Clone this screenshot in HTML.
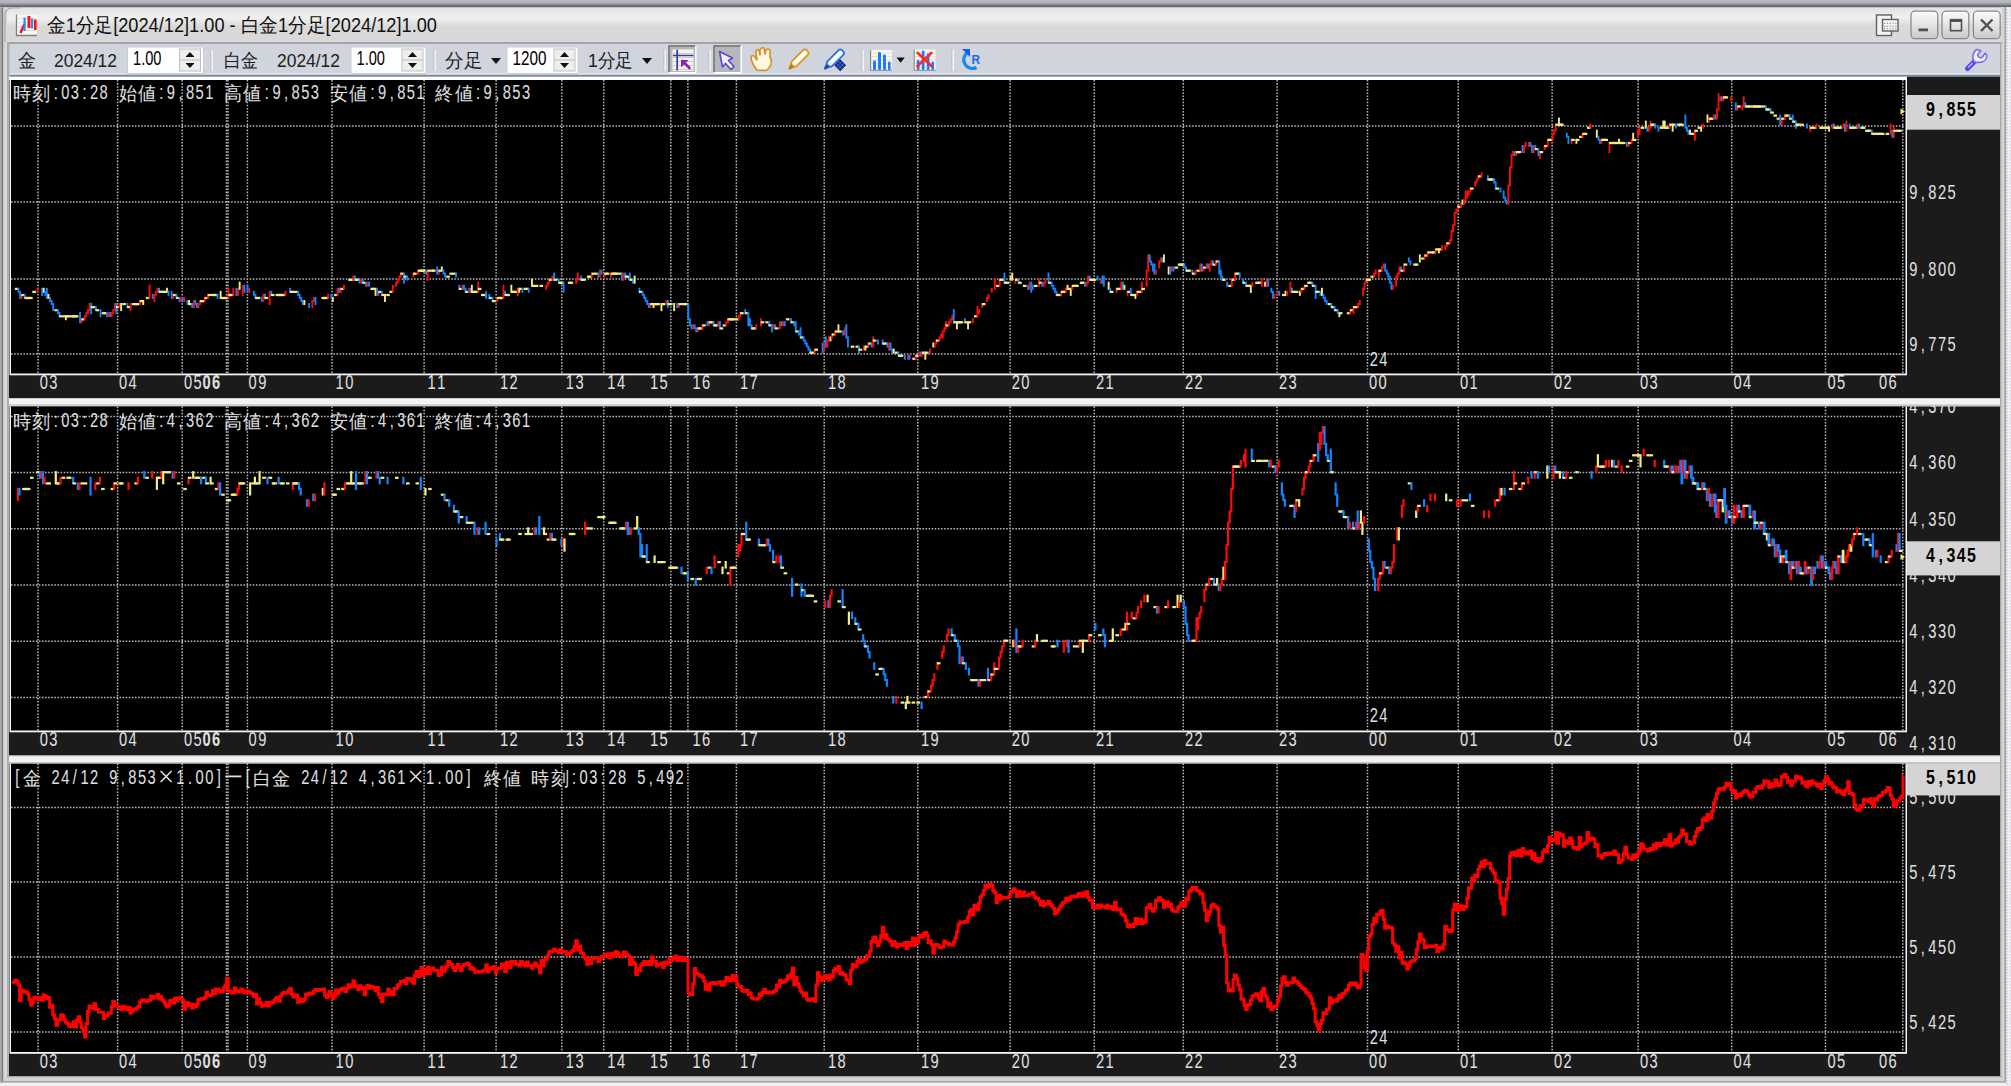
<!DOCTYPE html><html><head><meta charset="utf-8"><style>html,body{margin:0;padding:0;overflow:hidden;background:#d6d6d6}svg{display:block}</style></head><body><svg width="2011" height="1086" viewBox="0 0 2011 1086"><rect x="0" y="0" width="2011" height="1086" fill="#d6d6d6"/><rect x="0" y="0" width="2011" height="2.5" fill="#b4b8c2"/><rect x="0" y="2.5" width="2011" height="2" fill="#9a9ea8"/><rect x="0" y="4.5" width="2011" height="3" fill="#6e6e6e"/><defs><linearGradient id="tg" x1="0" y1="0" x2="0" y2="1"><stop offset="0" stop-color="#e2e2e2"/><stop offset="0.3" stop-color="#f0f0f0"/><stop offset="0.55" stop-color="#d9d9d9"/><stop offset="1" stop-color="#d8d8d8"/></linearGradient><linearGradient id="bg" x1="0" y1="0" x2="0" y2="1"><stop offset="0" stop-color="#fafafa"/><stop offset="0.5" stop-color="#e4e4e4"/><stop offset="1" stop-color="#c8c8c8"/></linearGradient></defs><rect x="0" y="7.5" width="2011" height="34.5" fill="url(#tg)"/><rect x="0" y="7.5" width="1.5" height="1078.5" fill="#a8a8a8"/><rect x="1.5" y="7.5" width="2" height="1076" fill="#7c7c7c"/><rect x="3.5" y="7.5" width="3.5" height="1076" fill="#d8d8d8"/><path d="M5 42 L5 16 Q5 8 13 8 L20 8" fill="none" stroke="#a8a8a8" stroke-width="1.2"/><rect x="7.5" y="42" width="1995" height="2" fill="#a4a4a4"/><rect x="8" y="44" width="1992" height="29" fill="#d0d4dc"/><rect x="8" y="73" width="1992" height="1.8" fill="#e2e6ec"/><rect x="8" y="74.8" width="1992" height="2" fill="#7a889e"/><rect x="7" y="42" width="2.5" height="1035" fill="#b0b0b0"/><rect x="2000" y="42" width="1.5" height="1036" fill="#a8a8a8"/><rect x="2001.5" y="7" width="3" height="1076" fill="#d4d4d4"/><rect x="2004.5" y="7" width="1.5" height="1076" fill="#a0a0a0"/><defs><pattern id="chk" width="5" height="3" patternUnits="userSpaceOnUse"><rect width="5" height="3" fill="#eceef2"/><rect x="0.5" y="0" width="2" height="1.5" fill="#c4c8d0"/></pattern></defs><rect x="2006" y="7" width="5" height="1079" fill="url(#chk)"/><rect x="7" y="1076" width="1994.5" height="1.5" fill="#a8a8a8"/><rect x="3.5" y="1077.5" width="1998" height="3.5" fill="#d4d4d4"/><rect x="1.5" y="1081" width="2004.5" height="1.8" fill="#a8a8a8"/><rect x="0" y="1082.8" width="2006" height="3.2" fill="#f2f2f2"/><g><rect x="16" y="15" width="21" height="21" fill="#f8f8f8"/><path d="M18 18.5 H36 M18 22.5 H36 M18 26.5 H36 M18 30.5 H36" stroke="#d8d8d8" stroke-width="0.8"/><path d="M16.5 14.5 V35.5 H37" fill="none" stroke="#808080" stroke-width="1.3"/><path d="M20.5 33 L24.5 24" stroke="#ff1010" stroke-width="2.6"/><rect x="23.5" y="17.5" width="2.2" height="13.5" fill="#2090ff"/><rect x="27.5" y="16" width="3" height="12" fill="#ff1010"/><rect x="31" y="18.5" width="2.2" height="10" fill="#2090ff"/><rect x="34" y="19.5" width="2.6" height="10.5" fill="#ff1010"/></g><text x="47" y="31.5" font-family="'Liberation Sans', sans-serif" font-size="19.5" fill="#101010" textLength="390" lengthAdjust="spacingAndGlyphs">金1分足[2024/12]1.00 - 白金1分足[2024/12]1.00</text><g fill="none" stroke="#606060" stroke-width="1.4"><rect x="1876.5" y="15" width="15" height="20.5" fill="#f4f4f4"/><rect x="1882.5" y="19.5" width="15.5" height="11.5" fill="#f4f4f4"/><path d="M1884 23.3 H1897 M1884 26.2 H1897 M1884 28.8 H1897" stroke="#808080" stroke-width="1" stroke-dasharray="1.2 1.6"/></g><rect x="1911" y="11.2" width="26.8" height="27.5" rx="4" fill="url(#bg)" stroke="#8a8a8a" stroke-width="1.3"/><rect x="1942" y="11.2" width="26.8" height="27.5" rx="4" fill="url(#bg)" stroke="#8a8a8a" stroke-width="1.3"/><rect x="1973.4" y="11.2" width="26.8" height="27.5" rx="4" fill="url(#bg)" stroke="#8a8a8a" stroke-width="1.3"/><rect x="1918.5" y="28.5" width="9.5" height="2.8" fill="#505050"/><rect x="1950.5" y="19.7" width="11" height="11" fill="none" stroke="#505050" stroke-width="1.6"/><rect x="1950" y="19" width="12" height="3" fill="#505050"/><path d="M1981 19.5 L1992.5 31 M1992.5 19.5 L1981 31" stroke="#505050" stroke-width="2.4"/><text x="18" y="67.2" font-family="'Liberation Sans', sans-serif" font-size="19" fill="#202020" textLength="18" lengthAdjust="spacingAndGlyphs">金</text><text x="54" y="67.2" font-family="'Liberation Sans', sans-serif" font-size="19" fill="#202020" textLength="63" lengthAdjust="spacingAndGlyphs">2024/12</text><text x="224" y="67.2" font-family="'Liberation Sans', sans-serif" font-size="19" fill="#202020" textLength="34" lengthAdjust="spacingAndGlyphs">白金</text><text x="277" y="67.2" font-family="'Liberation Sans', sans-serif" font-size="19" fill="#202020" textLength="63" lengthAdjust="spacingAndGlyphs">2024/12</text><rect x="127.5" y="47" width="76.0" height="26.5" fill="#ffffff" stroke="#c8ccd4" stroke-width="1"/><text transform="translate(133.0,64.5) scale(0.76,1)" x="0" y="0" font-family="'Liberation Sans', sans-serif" font-size="20.5" fill="#000" textLength="37.5" lengthAdjust="spacingAndGlyphs">1.00</text><rect x="179.5" y="49" width="21" height="22" fill="#eeeeee" stroke="#c0c0c0" stroke-width="1"/><line x1="179.5" y1="60" x2="200.5" y2="60" stroke="#c0c0c0" stroke-width="1"/><path d="M185.5 57 L190.0 52 L194.5 57 Z" fill="#101010"/><path d="M185.5 63 L190.0 68 L194.5 63 Z" fill="#101010"/><rect x="351" y="47" width="75" height="26.5" fill="#ffffff" stroke="#c8ccd4" stroke-width="1"/><text transform="translate(356.5,64.5) scale(0.76,1)" x="0" y="0" font-family="'Liberation Sans', sans-serif" font-size="20.5" fill="#000" textLength="37.5" lengthAdjust="spacingAndGlyphs">1.00</text><rect x="402" y="49" width="21" height="22" fill="#eeeeee" stroke="#c0c0c0" stroke-width="1"/><line x1="402" y1="60" x2="423" y2="60" stroke="#c0c0c0" stroke-width="1"/><path d="M408 57 L412.5 52 L417 57 Z" fill="#101010"/><path d="M408 63 L412.5 68 L417 63 Z" fill="#101010"/><rect x="507" y="47" width="71" height="26.5" fill="#ffffff" stroke="#c8ccd4" stroke-width="1"/><text transform="translate(512.5,64.5) scale(0.76,1)" x="0" y="0" font-family="'Liberation Sans', sans-serif" font-size="20.5" fill="#000" textLength="44.7" lengthAdjust="spacingAndGlyphs">1200</text><rect x="554" y="49" width="21" height="22" fill="#eeeeee" stroke="#c0c0c0" stroke-width="1"/><line x1="554" y1="60" x2="575" y2="60" stroke="#c0c0c0" stroke-width="1"/><path d="M560 57 L564.5 52 L569 57 Z" fill="#101010"/><path d="M560 63 L564.5 68 L569 63 Z" fill="#101010"/><rect x="210.5" y="50" width="1" height="21" fill="#b8bcc4"/><rect x="211.5" y="50" width="1.4" height="21" fill="#f6f7f9"/><rect x="433.5" y="50" width="1" height="21" fill="#b8bcc4"/><rect x="434.5" y="50" width="1.4" height="21" fill="#f6f7f9"/><rect x="663.5" y="50" width="1" height="21" fill="#b8bcc4"/><rect x="664.5" y="50" width="1.4" height="21" fill="#f6f7f9"/><rect x="708.5" y="50" width="1" height="21" fill="#b8bcc4"/><rect x="709.5" y="50" width="1.4" height="21" fill="#f6f7f9"/><rect x="861.5" y="50" width="1" height="21" fill="#b8bcc4"/><rect x="862.5" y="50" width="1.4" height="21" fill="#f6f7f9"/><rect x="951.5" y="50" width="1" height="21" fill="#b8bcc4"/><rect x="952.5" y="50" width="1.4" height="21" fill="#f6f7f9"/><text x="445" y="67.2" font-family="'Liberation Sans', sans-serif" font-size="19" fill="#202020" textLength="37" lengthAdjust="spacingAndGlyphs">分足</text><path d="M491 58 L501 58 L496 64 Z" fill="#101010"/><text x="588" y="67.2" font-family="'Liberation Sans', sans-serif" font-size="19" fill="#202020" textLength="45" lengthAdjust="spacingAndGlyphs">1分足</text><path d="M642 58 L652 58 L647 64 Z" fill="#101010"/><rect x="669" y="46" width="26" height="26" fill="#b4b8bc"/><path d="M669 72 V46 H695" fill="none" stroke="#6c6c6c" stroke-width="1.4"/><path d="M695.8 46 V72.8 H669" fill="none" stroke="#ffffff" stroke-width="1.4"/><rect x="714" y="46" width="26.5" height="26" fill="#b4b8bc"/><path d="M714 72 V46 H740.5" fill="none" stroke="#6c6c6c" stroke-width="1.4"/><path d="M741.3 46 V72.8 H714" fill="none" stroke="#ffffff" stroke-width="1.4"/><rect x="672.5" y="49.5" width="21" height="21.5" fill="#f4f4ee"/><path d="M673 53.5 H693 M673 57.5 H693 M673 61.5 H693 M673 65.5 H693 M673 69.5 H693" stroke="#c8c8c0" stroke-width="0.9"/><path d="M677.2 49.8 V70.5 M673 55.5 H693.5" stroke="#3a38a8" stroke-width="1.7"/><path d="M689.5 68 L682.5 61" stroke="#9020b0" stroke-width="2.6" stroke-linecap="round"/><path d="M681 60 H688.5 L681 67.5 Z" fill="#9020b0"/><path d="M719.5 51.5 L722.5 67 L725.5 63.5 L731 69.5 L734 66.5 L728.5 60.5 L732.5 58 Z" fill="#f0ecff" stroke="#6048c8" stroke-width="1.6" stroke-linejoin="round"/><path d="M757 70 Q752 64 751 58 Q751 55 754 56 L757 60 L756 52 Q756 49 759 50 L760 55 L760 50 Q761 47 764 48 L765 54 L766 50 Q768 48 770 50 L770 57 Q772 60 771 64 Q769 69 766 70.5 Z" fill="#fff6e4" stroke="#d88c20" stroke-width="1.6" stroke-linejoin="round"/><g transform="translate(799.5,58.5) rotate(-45)"><rect x="-10" y="-3.4" width="21" height="6.8" rx="3.2" fill="#fff4e0" stroke="#e0941e" stroke-width="1.7"/><rect x="-6" y="-1.6" width="14" height="2.6" rx="1.2" fill="#ffffff"/><path d="M-10 -2.6 L-15 -0.8 L-15 0.8 L-10 2.6 Z" fill="#c07818"/></g><g transform="translate(835,58.5) rotate(-45)"><rect x="-10" y="-3.4" width="21" height="6.8" rx="3.2" fill="#e4efff" stroke="#2a6ee0" stroke-width="1.7"/><rect x="-6" y="-1.6" width="14" height="2.6" rx="1.2" fill="#ffffff"/><path d="M-10 -2.6 L-15 -0.8 L-15 0.8 L-10 2.6 Z" fill="#1850b0"/></g><g transform="translate(840.2,65.2) rotate(45)"><rect x="-4.2" y="-4.2" width="8.4" height="8.4" fill="#102c80"/><path d="M-4 -1.4 H4 M-4 1.4 H4 M-1.4 -4 V4 M1.4 -4 V4" stroke="#5070c0" stroke-width="0.8"/></g><g><rect x="870.5" y="50" width="21.5" height="20" fill="#f8f6f0"/><path d="M871 53 H892 M871 56.5 H892 M871 60 H892 M871 63.5 H892 M871 67 H892" stroke="#e4dccc" stroke-width="0.9"/><path d="M870.6 50 V70.3 H892" fill="none" stroke="#808890" stroke-width="1.1"/><rect x="873" y="60.5" width="3" height="9.5" rx="1.2" fill="#1a7cff"/><rect x="878" y="52" width="3" height="18" rx="1.2" fill="#1a7cff"/><rect x="883" y="54.5" width="3" height="15.5" rx="1.2" fill="#1a7cff"/><rect x="888" y="61.5" width="2.6" height="8.5" rx="1.2" fill="#1a7cff"/></g><path d="M896.5 57.5 L904.8 57.5 L900.6 62.8 Z" fill="#101010"/><g><rect x="914" y="49.5" width="21.5" height="20.7" fill="#f8f6f0"/><path d="M914.5 53 H935.5 M914.5 56.5 H935.5 M914.5 60 H935.5 M914.5 63.5 H935.5 M914.5 67 H935.5" stroke="#e4dccc" stroke-width="0.9"/><path d="M914.2 49.4 V70.2 H935.5" fill="none" stroke="#808890" stroke-width="1.1"/><rect x="916.8" y="60" width="2.7" height="10" rx="1.1" fill="#1a7cff"/><rect x="921.8" y="50.5" width="2.7" height="19.5" rx="1.1" fill="#1a7cff"/><rect x="926.8" y="53.5" width="2.7" height="16.5" rx="1.1" fill="#1a7cff"/><rect x="931.5" y="61.4" width="2.5" height="8.6" rx="1.1" fill="#1a7cff"/><path d="M917.5 52.8 L931.5 66 M931.5 52.8 L917.5 66" stroke="#ff2828" stroke-width="2.6" stroke-linecap="round"/></g><path d="M968.5 52 A8.3 8.3 0 1 0 976.5 67.5" fill="none" stroke="#1a8ae8" stroke-width="3.2"/><path d="M962 49 L970 49 L970 57 Z" fill="#1060f0"/><text x="971.5" y="64.2" font-family="'Liberation Sans', sans-serif" font-weight="bold" font-size="13.5" fill="#1470d8" textLength="8.5" lengthAdjust="spacingAndGlyphs">R</text><path d="M1967.5 68.5 L1974.5 61.5" stroke="#5048f0" stroke-width="5" stroke-linecap="round"/><path d="M1968 67.6 L1972.5 63.1" stroke="#b0a8ff" stroke-width="1.5"/><path d="M1973.8 61 C1972 58 1972.5 52 1976.5 49.5 L1980.8 50.8 L1978.6 53.2 A2.6 2.6 0 0 0 1982.6 56.8 L1985.2 53.2 L1986.8 55 C1987 58.5 1985 62 1980 62.4 L1975.8 62.4 Z" fill="#f0ecff" stroke="#7a70dc" stroke-width="1.6" stroke-linejoin="round"/><rect x="9" y="80" width="1991" height="318" fill="#1b1b1b"/><rect x="9.5" y="80" width="1897.5" height="295.3" fill="#f4f4f4"/><rect x="11" y="80" width="1894.5" height="293.5" fill="#000"/><path d="M11 126 H1905 M11 202 H1905 M11 279 H1905 M11 354 H1905 M38 80 V373.5 M117.6 80 V373.5 M182.2 80 V373.5 M226.5 80 V373.5 M247.4 80 V373.5 M332 80 V373.5 M424.1 80 V373.5 M496.1 80 V373.5 M561.8 80 V373.5 M603.7 80 V373.5 M670.8 80 V373.5 M687.9 80 V373.5 M736.4 80 V373.5 M824.2 80 V373.5 M917.8 80 V373.5 M1010.1 80 V373.5 M1094.3 80 V373.5 M1183.3 80 V373.5 M1277.1 80 V373.5 M1367.5 80 V373.5 M1458.3 80 V373.5 M1552.1 80 V373.5 M1638.1 80 V373.5 M1731.7 80 V373.5 M1825.5 80 V373.5 M1902.8 80 V373.5" stroke="#bababa" stroke-width="1.5" stroke-dasharray="1.55 1.55" fill="none"/><path d="M228 80 V373.5" stroke="#bababa" stroke-width="1.5" stroke-dasharray="1.55 1.55" fill="none"/><text transform="translate(1908.5,198.8) scale(0.7,1)" x="1.0 17.6 28.4 42.1 55.8" y="0" font-family="'Liberation Sans', sans-serif" font-size="21" fill="#e0e0e0" >9,825</text><text transform="translate(1908.5,275.8) scale(0.7,1)" x="1.0 17.6 28.4 42.1 55.8" y="0" font-family="'Liberation Sans', sans-serif" font-size="21" fill="#e0e0e0" >9,800</text><text transform="translate(1908.5,350.8) scale(0.7,1)" x="1.0 17.6 28.4 42.1 55.8" y="0" font-family="'Liberation Sans', sans-serif" font-size="21" fill="#e0e0e0" >9,775</text><text transform="translate(39.0,389.0) scale(0.7,1)" x="1.0 14.7" y="0" font-family="'Liberation Sans', sans-serif" font-size="21" fill="#e0e0e0" >03</text><text transform="translate(118.3,389.0) scale(0.7,1)" x="1.0 14.7" y="0" font-family="'Liberation Sans', sans-serif" font-size="21" fill="#e0e0e0" >04</text><text transform="translate(183.3,389.0) scale(0.7,1)" x="1.0 14.7" y="0" font-family="'Liberation Sans', sans-serif" font-size="21" fill="#e0e0e0" >05</text><text transform="translate(201.8,389.0) scale(0.7,1)" x="1.0 14.7" y="0" font-family="'Liberation Sans', sans-serif" font-size="21" font-weight="bold" fill="#e0e0e0" >06</text><text transform="translate(247.9,389.0) scale(0.7,1)" x="1.0 14.7" y="0" font-family="'Liberation Sans', sans-serif" font-size="21" fill="#e0e0e0" >09</text><text transform="translate(334.90000000000003,389.0) scale(0.7,1)" x="1.0 14.7" y="0" font-family="'Liberation Sans', sans-serif" font-size="21" fill="#e0e0e0" >10</text><text transform="translate(426.90000000000003,389.0) scale(0.7,1)" x="1.0 14.7" y="0" font-family="'Liberation Sans', sans-serif" font-size="21" fill="#e0e0e0" >11</text><text transform="translate(499.3,389.0) scale(0.7,1)" x="1.0 14.7" y="0" font-family="'Liberation Sans', sans-serif" font-size="21" fill="#e0e0e0" >12</text><text transform="translate(565.0999999999999,389.0) scale(0.7,1)" x="1.0 14.7" y="0" font-family="'Liberation Sans', sans-serif" font-size="21" fill="#e0e0e0" >13</text><text transform="translate(606.5999999999999,389.0) scale(0.7,1)" x="1.0 14.7" y="0" font-family="'Liberation Sans', sans-serif" font-size="21" fill="#e0e0e0" >14</text><text transform="translate(649.3,389.0) scale(0.7,1)" x="1.0 14.7" y="0" font-family="'Liberation Sans', sans-serif" font-size="21" fill="#e0e0e0" >15</text><text transform="translate(691.6999999999999,389.0) scale(0.7,1)" x="1.0 14.7" y="0" font-family="'Liberation Sans', sans-serif" font-size="21" fill="#e0e0e0" >16</text><text transform="translate(739.3,389.0) scale(0.7,1)" x="1.0 14.7" y="0" font-family="'Liberation Sans', sans-serif" font-size="21" fill="#e0e0e0" >17</text><text transform="translate(827.3,389.0) scale(0.7,1)" x="1.0 14.7" y="0" font-family="'Liberation Sans', sans-serif" font-size="21" fill="#e0e0e0" >18</text><text transform="translate(920.3,389.0) scale(0.7,1)" x="1.0 14.7" y="0" font-family="'Liberation Sans', sans-serif" font-size="21" fill="#e0e0e0" >19</text><text transform="translate(1011.0,389.0) scale(0.7,1)" x="1.0 14.7" y="0" font-family="'Liberation Sans', sans-serif" font-size="21" fill="#e0e0e0" >20</text><text transform="translate(1095.3,389.0) scale(0.7,1)" x="1.0 14.7" y="0" font-family="'Liberation Sans', sans-serif" font-size="21" fill="#e0e0e0" >21</text><text transform="translate(1184.3,389.0) scale(0.7,1)" x="1.0 14.7" y="0" font-family="'Liberation Sans', sans-serif" font-size="21" fill="#e0e0e0" >22</text><text transform="translate(1278.3,389.0) scale(0.7,1)" x="1.0 14.7" y="0" font-family="'Liberation Sans', sans-serif" font-size="21" fill="#e0e0e0" >23</text><text transform="translate(1368.3,389.0) scale(0.7,1)" x="1.0 14.7" y="0" font-family="'Liberation Sans', sans-serif" font-size="21" fill="#e0e0e0" >00</text><text transform="translate(1459.3,389.0) scale(0.7,1)" x="1.0 14.7" y="0" font-family="'Liberation Sans', sans-serif" font-size="21" fill="#e0e0e0" >01</text><text transform="translate(1553.3,389.0) scale(0.7,1)" x="1.0 14.7" y="0" font-family="'Liberation Sans', sans-serif" font-size="21" fill="#e0e0e0" >02</text><text transform="translate(1639.3,389.0) scale(0.7,1)" x="1.0 14.7" y="0" font-family="'Liberation Sans', sans-serif" font-size="21" fill="#e0e0e0" >03</text><text transform="translate(1732.8,389.0) scale(0.7,1)" x="1.0 14.7" y="0" font-family="'Liberation Sans', sans-serif" font-size="21" fill="#e0e0e0" >04</text><text transform="translate(1826.8,389.0) scale(0.7,1)" x="1.0 14.7" y="0" font-family="'Liberation Sans', sans-serif" font-size="21" fill="#e0e0e0" >05</text><text transform="translate(1878.3,389.0) scale(0.7,1)" x="1.0 14.7" y="0" font-family="'Liberation Sans', sans-serif" font-size="21" fill="#e0e0e0" >06</text><rect x="9" y="406.5" width="1991" height="349.0" fill="#1b1b1b"/><rect x="9.5" y="406.5" width="1897.5" height="325.8" fill="#f4f4f4"/><rect x="11" y="406.5" width="1894.5" height="324.0" fill="#000"/><path d="M11 416.5 H1905 M11 472.6 H1905 M11 528.8 H1905 M11 585 H1905 M11 641.3 H1905 M11 697.5 H1905 M38 406.5 V730.5 M117.6 406.5 V730.5 M182.2 406.5 V730.5 M226.5 406.5 V730.5 M247.4 406.5 V730.5 M332 406.5 V730.5 M424.1 406.5 V730.5 M496.1 406.5 V730.5 M561.8 406.5 V730.5 M603.7 406.5 V730.5 M670.8 406.5 V730.5 M687.9 406.5 V730.5 M736.4 406.5 V730.5 M824.2 406.5 V730.5 M917.8 406.5 V730.5 M1010.1 406.5 V730.5 M1094.3 406.5 V730.5 M1183.3 406.5 V730.5 M1277.1 406.5 V730.5 M1367.5 406.5 V730.5 M1458.3 406.5 V730.5 M1552.1 406.5 V730.5 M1638.1 406.5 V730.5 M1731.7 406.5 V730.5 M1825.5 406.5 V730.5 M1902.8 406.5 V730.5" stroke="#bababa" stroke-width="1.5" stroke-dasharray="1.55 1.55" fill="none"/><path d="M228 406.5 V730.5" stroke="#bababa" stroke-width="1.5" stroke-dasharray="1.55 1.55" fill="none"/><text transform="translate(1908.5,413.3) scale(0.7,1)" x="1.0 17.6 28.4 42.1 55.8" y="0" font-family="'Liberation Sans', sans-serif" font-size="21" fill="#e0e0e0" >4,370</text><text transform="translate(1908.5,469.4) scale(0.7,1)" x="1.0 17.6 28.4 42.1 55.8" y="0" font-family="'Liberation Sans', sans-serif" font-size="21" fill="#e0e0e0" >4,360</text><text transform="translate(1908.5,525.6) scale(0.7,1)" x="1.0 17.6 28.4 42.1 55.8" y="0" font-family="'Liberation Sans', sans-serif" font-size="21" fill="#e0e0e0" >4,350</text><text transform="translate(1908.5,581.8) scale(0.7,1)" x="1.0 17.6 28.4 42.1 55.8" y="0" font-family="'Liberation Sans', sans-serif" font-size="21" fill="#e0e0e0" >4,340</text><text transform="translate(1908.5,638.1) scale(0.7,1)" x="1.0 17.6 28.4 42.1 55.8" y="0" font-family="'Liberation Sans', sans-serif" font-size="21" fill="#e0e0e0" >4,330</text><text transform="translate(1908.5,694.3) scale(0.7,1)" x="1.0 17.6 28.4 42.1 55.8" y="0" font-family="'Liberation Sans', sans-serif" font-size="21" fill="#e0e0e0" >4,320</text><text transform="translate(1908.5,750.4) scale(0.7,1)" x="1.0 17.6 28.4 42.1 55.8" y="0" font-family="'Liberation Sans', sans-serif" font-size="21" fill="#e0e0e0" >4,310</text><text transform="translate(39.0,746.0) scale(0.7,1)" x="1.0 14.7" y="0" font-family="'Liberation Sans', sans-serif" font-size="21" fill="#e0e0e0" >03</text><text transform="translate(118.3,746.0) scale(0.7,1)" x="1.0 14.7" y="0" font-family="'Liberation Sans', sans-serif" font-size="21" fill="#e0e0e0" >04</text><text transform="translate(183.3,746.0) scale(0.7,1)" x="1.0 14.7" y="0" font-family="'Liberation Sans', sans-serif" font-size="21" fill="#e0e0e0" >05</text><text transform="translate(201.8,746.0) scale(0.7,1)" x="1.0 14.7" y="0" font-family="'Liberation Sans', sans-serif" font-size="21" font-weight="bold" fill="#e0e0e0" >06</text><text transform="translate(247.9,746.0) scale(0.7,1)" x="1.0 14.7" y="0" font-family="'Liberation Sans', sans-serif" font-size="21" fill="#e0e0e0" >09</text><text transform="translate(334.90000000000003,746.0) scale(0.7,1)" x="1.0 14.7" y="0" font-family="'Liberation Sans', sans-serif" font-size="21" fill="#e0e0e0" >10</text><text transform="translate(426.90000000000003,746.0) scale(0.7,1)" x="1.0 14.7" y="0" font-family="'Liberation Sans', sans-serif" font-size="21" fill="#e0e0e0" >11</text><text transform="translate(499.3,746.0) scale(0.7,1)" x="1.0 14.7" y="0" font-family="'Liberation Sans', sans-serif" font-size="21" fill="#e0e0e0" >12</text><text transform="translate(565.0999999999999,746.0) scale(0.7,1)" x="1.0 14.7" y="0" font-family="'Liberation Sans', sans-serif" font-size="21" fill="#e0e0e0" >13</text><text transform="translate(606.5999999999999,746.0) scale(0.7,1)" x="1.0 14.7" y="0" font-family="'Liberation Sans', sans-serif" font-size="21" fill="#e0e0e0" >14</text><text transform="translate(649.3,746.0) scale(0.7,1)" x="1.0 14.7" y="0" font-family="'Liberation Sans', sans-serif" font-size="21" fill="#e0e0e0" >15</text><text transform="translate(691.6999999999999,746.0) scale(0.7,1)" x="1.0 14.7" y="0" font-family="'Liberation Sans', sans-serif" font-size="21" fill="#e0e0e0" >16</text><text transform="translate(739.3,746.0) scale(0.7,1)" x="1.0 14.7" y="0" font-family="'Liberation Sans', sans-serif" font-size="21" fill="#e0e0e0" >17</text><text transform="translate(827.3,746.0) scale(0.7,1)" x="1.0 14.7" y="0" font-family="'Liberation Sans', sans-serif" font-size="21" fill="#e0e0e0" >18</text><text transform="translate(920.3,746.0) scale(0.7,1)" x="1.0 14.7" y="0" font-family="'Liberation Sans', sans-serif" font-size="21" fill="#e0e0e0" >19</text><text transform="translate(1011.0,746.0) scale(0.7,1)" x="1.0 14.7" y="0" font-family="'Liberation Sans', sans-serif" font-size="21" fill="#e0e0e0" >20</text><text transform="translate(1095.3,746.0) scale(0.7,1)" x="1.0 14.7" y="0" font-family="'Liberation Sans', sans-serif" font-size="21" fill="#e0e0e0" >21</text><text transform="translate(1184.3,746.0) scale(0.7,1)" x="1.0 14.7" y="0" font-family="'Liberation Sans', sans-serif" font-size="21" fill="#e0e0e0" >22</text><text transform="translate(1278.3,746.0) scale(0.7,1)" x="1.0 14.7" y="0" font-family="'Liberation Sans', sans-serif" font-size="21" fill="#e0e0e0" >23</text><text transform="translate(1368.3,746.0) scale(0.7,1)" x="1.0 14.7" y="0" font-family="'Liberation Sans', sans-serif" font-size="21" fill="#e0e0e0" >00</text><text transform="translate(1459.3,746.0) scale(0.7,1)" x="1.0 14.7" y="0" font-family="'Liberation Sans', sans-serif" font-size="21" fill="#e0e0e0" >01</text><text transform="translate(1553.3,746.0) scale(0.7,1)" x="1.0 14.7" y="0" font-family="'Liberation Sans', sans-serif" font-size="21" fill="#e0e0e0" >02</text><text transform="translate(1639.3,746.0) scale(0.7,1)" x="1.0 14.7" y="0" font-family="'Liberation Sans', sans-serif" font-size="21" fill="#e0e0e0" >03</text><text transform="translate(1732.8,746.0) scale(0.7,1)" x="1.0 14.7" y="0" font-family="'Liberation Sans', sans-serif" font-size="21" fill="#e0e0e0" >04</text><text transform="translate(1826.8,746.0) scale(0.7,1)" x="1.0 14.7" y="0" font-family="'Liberation Sans', sans-serif" font-size="21" fill="#e0e0e0" >05</text><text transform="translate(1878.3,746.0) scale(0.7,1)" x="1.0 14.7" y="0" font-family="'Liberation Sans', sans-serif" font-size="21" fill="#e0e0e0" >06</text><rect x="9" y="763.5" width="1991" height="312.5" fill="#1b1b1b"/><rect x="9.5" y="763.5" width="1897.5" height="290.3" fill="#f4f4f4"/><rect x="11" y="763.5" width="1894.5" height="288.5" fill="#000"/><path d="M11 807.5 H1905 M11 882 H1905 M11 957 H1905 M11 1032 H1905 M38 763.5 V1052 M117.6 763.5 V1052 M182.2 763.5 V1052 M226.5 763.5 V1052 M247.4 763.5 V1052 M332 763.5 V1052 M424.1 763.5 V1052 M496.1 763.5 V1052 M561.8 763.5 V1052 M603.7 763.5 V1052 M670.8 763.5 V1052 M687.9 763.5 V1052 M736.4 763.5 V1052 M824.2 763.5 V1052 M917.8 763.5 V1052 M1010.1 763.5 V1052 M1094.3 763.5 V1052 M1183.3 763.5 V1052 M1277.1 763.5 V1052 M1367.5 763.5 V1052 M1458.3 763.5 V1052 M1552.1 763.5 V1052 M1638.1 763.5 V1052 M1731.7 763.5 V1052 M1825.5 763.5 V1052 M1902.8 763.5 V1052" stroke="#bababa" stroke-width="1.5" stroke-dasharray="1.55 1.55" fill="none"/><path d="M228 763.5 V1052" stroke="#bababa" stroke-width="1.5" stroke-dasharray="1.55 1.55" fill="none"/><text transform="translate(1908.5,804.3) scale(0.7,1)" x="1.0 17.6 28.4 42.1 55.8" y="0" font-family="'Liberation Sans', sans-serif" font-size="21" fill="#e0e0e0" >5,500</text><text transform="translate(1908.5,878.8) scale(0.7,1)" x="1.0 17.6 28.4 42.1 55.8" y="0" font-family="'Liberation Sans', sans-serif" font-size="21" fill="#e0e0e0" >5,475</text><text transform="translate(1908.5,953.8) scale(0.7,1)" x="1.0 17.6 28.4 42.1 55.8" y="0" font-family="'Liberation Sans', sans-serif" font-size="21" fill="#e0e0e0" >5,450</text><text transform="translate(1908.5,1028.8) scale(0.7,1)" x="1.0 17.6 28.4 42.1 55.8" y="0" font-family="'Liberation Sans', sans-serif" font-size="21" fill="#e0e0e0" >5,425</text><text transform="translate(39.0,1067.5) scale(0.7,1)" x="1.0 14.7" y="0" font-family="'Liberation Sans', sans-serif" font-size="21" fill="#e0e0e0" >03</text><text transform="translate(118.3,1067.5) scale(0.7,1)" x="1.0 14.7" y="0" font-family="'Liberation Sans', sans-serif" font-size="21" fill="#e0e0e0" >04</text><text transform="translate(183.3,1067.5) scale(0.7,1)" x="1.0 14.7" y="0" font-family="'Liberation Sans', sans-serif" font-size="21" fill="#e0e0e0" >05</text><text transform="translate(201.8,1067.5) scale(0.7,1)" x="1.0 14.7" y="0" font-family="'Liberation Sans', sans-serif" font-size="21" font-weight="bold" fill="#e0e0e0" >06</text><text transform="translate(247.9,1067.5) scale(0.7,1)" x="1.0 14.7" y="0" font-family="'Liberation Sans', sans-serif" font-size="21" fill="#e0e0e0" >09</text><text transform="translate(334.90000000000003,1067.5) scale(0.7,1)" x="1.0 14.7" y="0" font-family="'Liberation Sans', sans-serif" font-size="21" fill="#e0e0e0" >10</text><text transform="translate(426.90000000000003,1067.5) scale(0.7,1)" x="1.0 14.7" y="0" font-family="'Liberation Sans', sans-serif" font-size="21" fill="#e0e0e0" >11</text><text transform="translate(499.3,1067.5) scale(0.7,1)" x="1.0 14.7" y="0" font-family="'Liberation Sans', sans-serif" font-size="21" fill="#e0e0e0" >12</text><text transform="translate(565.0999999999999,1067.5) scale(0.7,1)" x="1.0 14.7" y="0" font-family="'Liberation Sans', sans-serif" font-size="21" fill="#e0e0e0" >13</text><text transform="translate(606.5999999999999,1067.5) scale(0.7,1)" x="1.0 14.7" y="0" font-family="'Liberation Sans', sans-serif" font-size="21" fill="#e0e0e0" >14</text><text transform="translate(649.3,1067.5) scale(0.7,1)" x="1.0 14.7" y="0" font-family="'Liberation Sans', sans-serif" font-size="21" fill="#e0e0e0" >15</text><text transform="translate(691.6999999999999,1067.5) scale(0.7,1)" x="1.0 14.7" y="0" font-family="'Liberation Sans', sans-serif" font-size="21" fill="#e0e0e0" >16</text><text transform="translate(739.3,1067.5) scale(0.7,1)" x="1.0 14.7" y="0" font-family="'Liberation Sans', sans-serif" font-size="21" fill="#e0e0e0" >17</text><text transform="translate(827.3,1067.5) scale(0.7,1)" x="1.0 14.7" y="0" font-family="'Liberation Sans', sans-serif" font-size="21" fill="#e0e0e0" >18</text><text transform="translate(920.3,1067.5) scale(0.7,1)" x="1.0 14.7" y="0" font-family="'Liberation Sans', sans-serif" font-size="21" fill="#e0e0e0" >19</text><text transform="translate(1011.0,1067.5) scale(0.7,1)" x="1.0 14.7" y="0" font-family="'Liberation Sans', sans-serif" font-size="21" fill="#e0e0e0" >20</text><text transform="translate(1095.3,1067.5) scale(0.7,1)" x="1.0 14.7" y="0" font-family="'Liberation Sans', sans-serif" font-size="21" fill="#e0e0e0" >21</text><text transform="translate(1184.3,1067.5) scale(0.7,1)" x="1.0 14.7" y="0" font-family="'Liberation Sans', sans-serif" font-size="21" fill="#e0e0e0" >22</text><text transform="translate(1278.3,1067.5) scale(0.7,1)" x="1.0 14.7" y="0" font-family="'Liberation Sans', sans-serif" font-size="21" fill="#e0e0e0" >23</text><text transform="translate(1368.3,1067.5) scale(0.7,1)" x="1.0 14.7" y="0" font-family="'Liberation Sans', sans-serif" font-size="21" fill="#e0e0e0" >00</text><text transform="translate(1459.3,1067.5) scale(0.7,1)" x="1.0 14.7" y="0" font-family="'Liberation Sans', sans-serif" font-size="21" fill="#e0e0e0" >01</text><text transform="translate(1553.3,1067.5) scale(0.7,1)" x="1.0 14.7" y="0" font-family="'Liberation Sans', sans-serif" font-size="21" fill="#e0e0e0" >02</text><text transform="translate(1639.3,1067.5) scale(0.7,1)" x="1.0 14.7" y="0" font-family="'Liberation Sans', sans-serif" font-size="21" fill="#e0e0e0" >03</text><text transform="translate(1732.8,1067.5) scale(0.7,1)" x="1.0 14.7" y="0" font-family="'Liberation Sans', sans-serif" font-size="21" fill="#e0e0e0" >04</text><text transform="translate(1826.8,1067.5) scale(0.7,1)" x="1.0 14.7" y="0" font-family="'Liberation Sans', sans-serif" font-size="21" fill="#e0e0e0" >05</text><text transform="translate(1878.3,1067.5) scale(0.7,1)" x="1.0 14.7" y="0" font-family="'Liberation Sans', sans-serif" font-size="21" fill="#e0e0e0" >06</text><rect x="9" y="76.8" width="1898" height="3.2" fill="#ffffff"/><rect x="1907" y="76.8" width="93" height="3.2" fill="#1b1b1b"/><rect x="9" y="398" width="1991" height="1" fill="#d0d0d0"/><rect x="9" y="399" width="1991" height="5.5" fill="#f2f2f2"/><rect x="9" y="404.5" width="1991" height="1.5" fill="#c8c8c8"/><rect x="9" y="755.5" width="1991" height="1" fill="#d0d0d0"/><rect x="9" y="756.5" width="1991" height="5.5" fill="#f2f2f2"/><rect x="9" y="762.0" width="1991" height="1.5" fill="#c8c8c8"/><path d="M13.3 981.1 V982.2 H14.9 V980.3 H16.5 V981.4 H18.0 V984.8 H19.6 V1000.7 H21.2 V989.9 H22.8 V991.1 H24.4 V992.2 H25.9 V991.9 H27.5 V994.1 H29.1 V999.6 H30.7 V1005.0 H32.3 V1002.3 H33.8 V997.6 H35.4 V997.3 H37.0 V998.9 H38.6 V997.5 H40.2 V999.4 H41.7 V1000.3 H43.3 V995.1 H44.9 V996.2 H46.5 V998.4 H48.1 V997.5 H49.6 V1007.3 H51.2 V1005.1 H52.8 V1015.0 H54.4 V1018.8 H56.0 V1025.2 H57.5 V1020.2 H59.1 V1019.7 H60.7 V1014.7 H62.3 V1015.8 H63.9 V1019.8 H65.4 V1022.2 H67.0 V1023.5 H68.6 V1026.0 H70.2 V1026.4 H71.8 V1023.9 H73.3 V1021.8 H74.9 V1027.1 H76.5 V1020.4 H78.1 V1016.7 H79.7 V1022.1 H81.2 V1027.7 H82.8 V1029.5 H84.4 V1037.0 H86.0 V1023.4 H87.6 V1011.6 H89.1 V1005.9 H90.7 V1007.7 H92.3 V1008.5 H93.9 V1003.8 H95.5 V1009.5 H97.0 V1009.3 H98.6 V1012.2 H100.2 V1012.2 H101.8 V1012.3 H103.4 V1018.4 H104.9 V1015.2 H106.5 V1015.6 H108.1 V1013.1 H109.7 V1013.3 H111.3 V1007.0 H112.8 V1001.6 H114.4 V1005.1 H116.0 V1005.6 H117.6 V1007.0 H119.2 V1008.3 H120.7 V1009.5 H122.3 V1006.2 H123.9 V1009.0 H125.5 V1007.2 H127.1 V1009.7 H128.6 V1007.6 H130.2 V1013.1 H131.8 V1011.0 H133.4 V1009.1 H135.0 V1009.2 H136.5 V1007.8 H138.1 V1006.4 H139.7 V1002.0 H141.3 V1000.6 H142.9 V999.7 H144.4 V1000.6 H146.0 V1001.5 H147.6 V1000.8 H149.2 V1000.2 H150.8 V996.0 H152.3 V997.9 H153.9 V996.7 H155.5 V997.1 H157.1 V994.4 H158.7 V999.0 H160.2 V996.4 H161.8 V999.8 H163.4 V1001.7 H165.0 V1005.1 H166.6 V1007.0 H168.1 V1005.8 H169.7 V1000.7 H171.3 V1000.3 H172.9 V1003.1 H174.5 V998.3 H176.0 V1001.1 H177.6 V997.9 H179.2 V997.7 H180.8 V999.0 H182.4 V1000.4 H183.9 V1009.2 H185.5 V1006.0 H187.1 V1002.8 H188.7 V1005.6 H190.3 V1004.0 H191.8 V1007.9 H193.4 V1004.4 H195.0 V1006.8 H196.6 V1004.8 H198.2 V999.4 H199.7 V999.7 H201.3 V998.6 H202.9 V998.9 H204.5 V997.8 H206.1 V992.1 H207.6 V995.5 H209.2 V995.8 H210.8 V994.7 H212.4 V990.5 H214.0 V993.5 H215.5 V989.0 H217.1 V989.0 H218.7 V992.0 H220.3 V990.5 H221.9 V992.0 H223.4 V987.8 H225.0 V985.4 H226.6 V978.2 H228.2 V990.7 H229.8 V991.7 H231.3 V993.0 H232.9 V992.7 H234.5 V988.0 H236.1 V990.8 H237.7 V992.1 H239.2 V991.5 H240.8 V988.9 H242.4 V990.7 H244.0 V992.5 H245.6 V993.1 H247.1 V991.1 H248.7 V992.1 H250.3 V993.1 H251.9 V994.0 H253.5 V996.5 H255.0 V994.5 H256.6 V1004.0 H258.2 V998.7 H259.8 V1002.5 H261.4 V1006.2 H262.9 V1005.5 H264.5 V1004.7 H266.1 V1002.4 H267.7 V1006.1 H269.3 V1002.3 H270.8 V1003.0 H272.4 V1002.4 H274.0 V1000.2 H275.6 V998.0 H277.2 V997.4 H278.7 V1001.2 H280.3 V996.0 H281.9 V993.5 H283.5 V992.4 H285.1 V992.8 H286.6 V993.2 H288.2 V990.6 H289.8 V988.5 H291.4 V994.2 H293.0 V996.9 H294.5 V996.6 H296.1 V994.9 H297.7 V1002.2 H299.3 V999.0 H300.9 V1001.8 H302.4 V1001.3 H304.0 V999.2 H305.6 V994.2 H307.2 V995.1 H308.8 V993.0 H310.3 V993.9 H311.9 V993.2 H313.5 V991.3 H315.1 V989.4 H316.7 V990.5 H318.2 V990.1 H319.8 V989.7 H321.4 V989.4 H323.0 V989.1 H324.6 V995.3 H326.1 V997.6 H327.7 V996.1 H329.3 V991.6 H330.9 V993.8 H332.5 V998.6 H334.0 V995.9 H335.6 V990.1 H337.2 V993.4 H338.8 V990.7 H340.4 V989.4 H341.9 V988.2 H343.5 V989.1 H345.1 V991.6 H346.7 V988.1 H348.3 V984.7 H349.8 V987.2 H351.4 V985.3 H353.0 V981.1 H354.6 V986.4 H356.2 V985.7 H357.7 V989.5 H359.3 V985.8 H360.9 V987.7 H362.5 V989.0 H364.1 V994.8 H365.6 V987.1 H367.2 V985.4 H368.8 V988.2 H370.4 V986.5 H372.0 V986.9 H373.5 V988.1 H375.1 V990.8 H376.7 V987.6 H378.3 V994.8 H379.9 V997.5 H381.4 V1001.8 H383.0 V994.0 H384.6 V994.1 H386.2 V994.7 H387.8 V989.2 H389.3 V994.2 H390.9 V991.7 H392.5 V994.6 H394.1 V988.5 H395.7 V988.5 H397.2 V985.6 H398.8 V984.3 H400.4 V981.5 H402.0 V981.7 H403.6 V980.4 H405.1 V983.8 H406.7 V978.6 H408.3 V979.4 H409.9 V978.7 H411.5 V981.0 H413.0 V983.3 H414.6 V975.1 H416.2 V971.4 H417.8 V976.6 H419.4 V974.2 H420.9 V967.3 H422.5 V975.4 H424.1 V970.0 H425.7 V973.6 H427.3 V967.1 H428.8 V973.5 H430.4 V969.3 H432.0 V968.1 H433.6 V970.0 H435.2 V970.3 H436.7 V970.7 H438.3 V975.5 H439.9 V974.4 H441.5 V967.2 H443.1 V971.5 H444.6 V969.0 H446.2 V966.5 H447.8 V961.4 H449.4 V962.9 H451.0 V964.4 H452.5 V967.4 H454.1 V970.4 H455.7 V967.4 H457.3 V964.4 H458.9 V965.9 H460.4 V970.4 H462.0 V965.9 H463.6 V964.4 H465.2 V964.4 H466.8 V962.9 H468.3 V964.4 H469.9 V969.0 H471.5 V967.6 H473.1 V969.2 H474.7 V972.2 H476.2 V972.2 H477.8 V971.5 H479.4 V972.3 H481.0 V971.6 H482.6 V970.9 H484.1 V970.2 H485.7 V965.0 H487.3 V971.8 H488.9 V969.6 H490.5 V967.6 H492.0 V968.5 H493.6 V966.5 H495.2 V972.7 H496.8 V969.0 H498.4 V968.4 H499.9 V967.8 H501.5 V964.1 H503.1 V965.0 H504.7 V971.8 H506.3 V962.2 H507.8 V966.1 H509.4 V967.4 H511.0 V961.4 H512.6 V962.9 H514.2 V961.4 H515.7 V964.4 H517.3 V964.4 H518.9 V965.9 H520.5 V961.4 H522.1 V964.4 H523.6 V962.9 H525.2 V966.0 H526.8 V962.1 H528.4 V965.6 H530.0 V965.6 H531.5 V968.3 H533.1 V965.0 H534.7 V963.1 H536.3 V965.8 H537.9 V967.0 H539.4 V972.7 H541.0 V960.4 H542.6 V966.0 H544.2 V959.7 H545.8 V959.2 H547.3 V955.7 H548.9 V952.1 H550.5 V951.6 H552.1 V951.0 H553.7 V949.2 H555.2 V950.8 H556.8 V950.9 H558.4 V952.5 H560.0 V949.6 H561.6 V951.3 H563.1 V951.4 H564.7 V951.5 H566.3 V954.6 H567.9 V954.7 H569.5 V953.3 H571.0 V951.9 H572.6 V950.6 H574.2 V946.4 H575.8 V940.7 H577.4 V949.9 H578.9 V946.1 H580.5 V952.7 H582.1 V953.3 H583.7 V957.0 H585.3 V959.1 H586.8 V964.2 H588.4 V958.6 H590.0 V963.4 H591.6 V959.3 H593.2 V958.1 H594.7 V957.7 H596.3 V958.1 H597.9 V961.5 H599.5 V958.9 H601.1 V956.4 H602.6 V957.0 H604.2 V954.5 H605.8 V955.5 H607.4 V953.8 H609.0 V958.1 H610.5 V956.5 H612.1 V953.3 H613.7 V956.1 H615.3 V951.4 H616.9 V952.7 H618.4 V955.6 H620.0 V955.4 H621.6 V956.7 H623.2 V952.0 H624.8 V952.2 H626.3 V954.8 H627.9 V955.8 H629.5 V964.4 H631.1 V957.9 H632.7 V962.2 H634.2 V963.8 H635.8 V974.4 H637.4 V968.6 H639.0 V970.4 H640.6 V965.4 H642.1 V963.4 H643.7 V961.5 H645.3 V964.5 H646.9 V964.5 H648.5 V961.5 H650.0 V964.5 H651.6 V957.0 H653.2 V961.5 H654.8 V961.5 H656.4 V966.0 H657.9 V964.5 H659.5 V964.5 H661.1 V963.0 H662.7 V967.5 H664.3 V962.3 H665.8 V963.1 H667.4 V963.8 H669.0 V958.5 H670.6 V960.7 H672.2 V958.9 H673.7 V957.4 H675.3 V955.9 H676.9 V960.4 H678.5 V957.4 H680.1 V957.4 H681.6 V960.4 H683.2 V957.4 H684.8 V960.4 H686.4 V958.9 H688.0 V993.3 H689.5 V994.8 H691.1 V994.8 H692.7 V984.1 H694.3 V968.5 H695.9 V973.5 H697.4 V974.1 H699.0 V976.1 H700.6 V975.2 H702.2 V977.4 H703.8 V981.3 H705.3 V989.3 H706.9 V984.4 H708.5 V990.0 H710.1 V983.5 H711.7 V983.1 H713.2 V982.6 H714.8 V984.0 H716.4 V982.7 H718.0 V983.0 H719.6 V981.7 H721.1 V984.9 H722.7 V985.2 H724.3 V981.8 H725.9 V977.5 H727.5 V979.2 H729.0 V980.9 H730.6 V978.1 H732.2 V975.5 H733.8 V980.5 H735.4 V976.5 H736.9 V984.6 H738.5 V987.1 H740.1 V986.6 H741.7 V990.6 H743.3 V991.6 H744.8 V991.1 H746.4 V990.5 H748.0 V994.5 H749.6 V992.9 H751.2 V997.5 H752.7 V999.1 H754.3 V998.9 H755.9 V999.3 H757.5 V998.3 H759.1 V994.1 H760.6 V995.5 H762.2 V992.4 H763.8 V989.3 H765.4 V992.6 H767.0 V993.0 H768.5 V992.0 H770.1 V992.4 H771.7 V992.9 H773.3 V991.8 H774.9 V990.5 H776.4 V985.3 H778.0 V986.7 H779.6 V980.2 H781.2 V982.6 H782.8 V982.1 H784.3 V981.6 H785.9 V979.5 H787.5 V975.8 H789.1 V977.9 H790.7 V974.0 H792.2 V968.1 H793.8 V984.8 H795.4 V977.5 H797.0 V983.6 H798.6 V986.8 H800.1 V991.1 H801.7 V992.7 H803.3 V995.8 H804.9 V992.9 H806.5 V998.9 H808.0 V1000.5 H809.6 V999.7 H811.2 V998.7 H812.8 V999.3 H814.4 V1001.3 H815.9 V985.0 H817.5 V972.7 H819.1 V976.4 H820.7 V980.7 H822.3 V977.4 H823.8 V978.7 H825.4 V975.4 H827.0 V977.7 H828.6 V980.1 H830.2 V974.9 H831.7 V977.2 H833.3 V970.5 H834.9 V968.3 H836.5 V970.9 H838.1 V966.5 H839.6 V974.1 H841.2 V972.6 H842.8 V974.5 H844.4 V974.9 H846.0 V979.8 H847.5 V980.2 H849.1 V983.7 H850.7 V970.3 H852.3 V964.4 H853.9 V966.3 H855.4 V966.9 H857.0 V961.4 H858.6 V958.9 H860.2 V962.4 H861.8 V961.4 H863.3 V960.4 H864.9 V959.6 H866.5 V955.8 H868.1 V956.5 H869.7 V950.9 H871.2 V941.4 H872.8 V937.9 H874.4 V937.1 H876.0 V942.2 H877.6 V945.7 H879.1 V941.4 H880.7 V935.6 H882.3 V927.3 H883.9 V937.7 H885.5 V934.5 H887.0 V938.9 H888.6 V940.2 H890.2 V941.6 H891.8 V945.5 H893.4 V941.5 H894.9 V943.5 H896.5 V947.0 H898.1 V944.4 H899.7 V944.9 H901.3 V945.4 H902.8 V944.1 H904.4 V942.6 H906.0 V948.6 H907.6 V942.6 H909.2 V945.6 H910.7 V944.1 H912.3 V938.1 H913.9 V945.6 H915.5 V938.3 H917.1 V942.2 H918.6 V937.0 H920.2 V934.9 H921.8 V937.2 H923.4 V933.6 H925.0 V932.6 H926.5 V935.3 H928.1 V942.5 H929.7 V940.8 H931.3 V944.7 H932.9 V953.1 H934.4 V945.0 H936.0 V944.4 H937.6 V945.3 H939.2 V947.7 H940.8 V946.7 H942.3 V946.9 H943.9 V941.1 H945.5 V942.9 H947.1 V942.7 H948.7 V945.0 H950.2 V944.3 H951.8 V945.1 H953.4 V942.2 H955.0 V937.7 H956.6 V931.8 H958.1 V924.3 H959.7 V922.0 H961.3 V922.3 H962.9 V922.7 H964.5 V921.6 H966.0 V921.9 H967.6 V917.8 H969.2 V911.6 H970.8 V909.5 H972.4 V914.9 H973.9 V905.4 H975.5 V907.8 H977.1 V909.7 H978.7 V903.2 H980.3 V896.7 H981.8 V894.7 H983.4 V890.6 H985.0 V885.2 H986.6 V887.3 H988.2 V886.3 H989.7 V883.9 H991.3 V885.3 H992.9 V891.1 H994.5 V892.4 H996.1 V902.6 H997.6 V899.8 H999.2 V895.5 H1000.8 V898.7 H1002.4 V897.4 H1004.0 V897.6 H1005.5 V897.8 H1007.1 V897.8 H1008.7 V896.5 H1010.3 V892.3 H1011.9 V891.0 H1013.4 V888.8 H1015.0 V891.1 H1016.6 V896.4 H1018.2 V891.2 H1019.8 V893.5 H1021.3 V895.7 H1022.9 V892.0 H1024.5 V895.4 H1026.1 V895.4 H1027.7 V895.4 H1029.2 V893.9 H1030.8 V893.9 H1032.4 V892.4 H1034.0 V896.9 H1035.6 V898.5 H1037.1 V898.2 H1038.7 V900.9 H1040.3 V905.0 H1041.9 V901.6 H1043.5 V905.7 H1045.0 V903.8 H1046.6 V903.4 H1048.2 V901.5 H1049.8 V904.2 H1051.4 V905.7 H1052.9 V908.3 H1054.5 V913.9 H1056.1 V912.3 H1057.7 V910.0 H1059.3 V907.6 H1060.8 V905.3 H1062.4 V903.0 H1064.0 V902.2 H1065.6 V898.3 H1067.2 V900.4 H1068.7 V899.5 H1070.3 V897.1 H1071.9 V896.3 H1073.5 V896.9 H1075.1 V896.0 H1076.6 V896.8 H1078.2 V893.6 H1079.8 V893.4 H1081.4 V896.1 H1083.0 V892.9 H1084.5 V895.7 H1086.1 V891.7 H1087.7 V897.5 H1089.3 V900.3 H1090.9 V900.1 H1092.4 V907.4 H1094.0 V907.9 H1095.6 V906.4 H1097.2 V904.9 H1098.8 V907.9 H1100.3 V904.9 H1101.9 V906.4 H1103.5 V906.4 H1105.1 V907.9 H1106.7 V904.9 H1108.2 V907.9 H1109.8 V906.6 H1111.4 V908.8 H1113.0 V909.4 H1114.6 V902.5 H1116.1 V909.2 H1117.7 V909.8 H1119.3 V908.9 H1120.9 V914.0 H1122.5 V914.7 H1124.0 V916.2 H1125.6 V920.5 H1127.2 V926.2 H1128.8 V927.0 H1130.4 V924.5 H1131.9 V926.5 H1133.5 V924.0 H1135.1 V918.5 H1136.7 V923.5 H1138.3 V922.6 H1139.8 V918.9 H1141.4 V923.5 H1143.0 V920.7 H1144.6 V922.2 H1146.2 V907.9 H1147.7 V907.2 H1149.3 V904.4 H1150.9 V908.6 H1152.5 V911.3 H1154.1 V908.4 H1155.6 V900.6 H1157.2 V900.0 H1158.8 V897.7 H1160.4 V899.8 H1162.0 V900.4 H1163.5 V907.2 H1165.1 V902.3 H1166.7 V902.0 H1168.3 V906.2 H1169.9 V903.9 H1171.4 V909.7 H1173.0 V911.0 H1174.6 V911.3 H1176.2 V911.5 H1177.8 V907.2 H1179.3 V905.9 H1180.9 V902.8 H1182.5 V905.4 H1184.1 V906.2 H1185.7 V898.3 H1187.2 V899.4 H1188.8 V891.4 H1190.4 V890.1 H1192.0 V887.2 H1193.6 V888.9 H1195.1 V887.6 H1196.7 V890.8 H1198.3 V890.9 H1199.9 V894.1 H1201.5 V893.7 H1203.0 V902.8 H1204.6 V910.3 H1206.2 V920.4 H1207.8 V914.5 H1209.4 V911.6 H1210.9 V905.8 H1212.5 V904.4 H1214.1 V906.1 H1215.7 V907.1 H1217.3 V908.5 H1218.8 V925.6 H1220.4 V932.2 H1222.0 V926.9 H1223.6 V945.3 H1225.2 V955.3 H1226.7 V982.7 H1228.3 V991.0 H1229.9 V989.3 H1231.5 V990.9 H1233.1 V979.2 H1234.6 V974.9 H1236.2 V978.6 H1237.8 V984.9 H1239.4 V989.7 H1241.0 V999.0 H1242.5 V999.3 H1244.1 V1005.6 H1245.7 V1009.6 H1247.3 V1005.0 H1248.9 V1004.8 H1250.4 V1000.2 H1252.0 V996.0 H1253.6 V995.8 H1255.2 V994.0 H1256.8 V993.7 H1258.3 V998.0 H1259.9 V1000.7 H1261.5 V991.6 H1263.1 V988.6 H1264.7 V995.5 H1266.2 V998.0 H1267.8 V1006.4 H1269.4 V1002.9 H1271.0 V1009.8 H1272.6 V1008.1 H1274.1 V1006.3 H1275.7 V1005.9 H1277.3 V1001.1 H1278.9 V996.2 H1280.5 V986.1 H1282.0 V978.5 H1283.6 V976.7 H1285.2 V982.5 H1286.8 V985.2 H1288.4 V982.9 H1289.9 V982.8 H1291.5 V982.7 H1293.1 V978.1 H1294.7 V981.4 H1296.3 V981.8 H1297.8 V983.6 H1299.4 V985.5 H1301.0 V987.3 H1302.6 V988.6 H1304.2 V989.6 H1305.7 V992.2 H1307.3 V993.2 H1308.9 V995.8 H1310.5 V998.1 H1312.1 V1003.4 H1313.6 V1008.7 H1315.2 V1021.5 H1316.8 V1025.3 H1318.4 V1030.6 H1320.0 V1023.6 H1321.5 V1020.2 H1323.1 V1012.7 H1324.7 V1013.4 H1326.3 V1009.7 H1327.9 V1008.9 H1329.4 V997.7 H1331.0 V1002.9 H1332.6 V999.9 H1334.2 V1000.6 H1335.8 V1001.3 H1337.3 V999.0 H1338.9 V995.3 H1340.5 V997.5 H1342.1 V993.7 H1343.7 V993.4 H1345.2 V990.8 H1346.8 V989.6 H1348.4 V985.5 H1350.0 V982.9 H1351.6 V982.9 H1353.1 V984.5 H1354.7 V983.1 H1356.3 V986.2 H1357.9 V987.8 H1359.5 V985.2 H1361.0 V954.5 H1362.6 V956.3 H1364.2 V967.2 H1365.8 V970.5 H1367.4 V950.1 H1368.9 V935.9 H1370.5 V934.0 H1372.1 V924.7 H1373.7 V918.3 H1375.3 V921.5 H1376.8 V914.2 H1378.4 V914.4 H1380.0 V911.6 H1381.6 V910.6 H1383.2 V919.2 H1384.7 V928.3 H1386.3 V926.0 H1387.9 V926.7 H1389.5 V927.4 H1391.1 V927.7 H1392.6 V943.0 H1394.2 V944.9 H1395.8 V951.2 H1397.4 V946.7 H1399.0 V957.7 H1400.5 V952.2 H1402.1 V963.2 H1403.7 V962.2 H1405.3 V964.1 H1406.9 V969.1 H1408.4 V966.0 H1410.0 V961.9 H1411.6 V960.7 H1413.2 V961.1 H1414.8 V958.5 H1416.3 V949.7 H1417.9 V941.7 H1419.5 V934.1 H1421.1 V939.3 H1422.7 V940.1 H1424.2 V947.4 H1425.8 V946.6 H1427.4 V945.9 H1429.0 V946.7 H1430.6 V946.0 H1432.1 V946.4 H1433.7 V946.6 H1435.3 V945.3 H1436.9 V951.5 H1438.5 V948.7 H1440.0 V947.4 H1441.6 V949.1 H1443.2 V944.5 H1444.8 V926.3 H1446.4 V929.9 H1447.9 V930.0 H1449.5 V931.6 H1451.1 V930.9 H1452.7 V910.0 H1454.3 V904.1 H1455.8 V904.9 H1457.4 V910.2 H1459.0 V906.5 H1460.6 V905.8 H1462.2 V909.6 H1463.7 V907.4 H1465.3 V906.6 H1466.9 V898.0 H1468.5 V887.8 H1470.1 V888.5 H1471.6 V878.1 H1473.2 V881.1 H1474.8 V875.1 H1476.4 V876.6 H1478.0 V869.2 H1479.5 V866.2 H1481.1 V862.1 H1482.7 V866.6 H1484.3 V860.6 H1485.9 V863.6 H1487.4 V863.6 H1489.0 V863.6 H1490.6 V868.5 H1492.2 V871.0 H1493.8 V873.4 H1495.3 V880.4 H1496.9 V881.3 H1498.5 V882.5 H1500.1 V898.2 H1501.7 V903.5 H1503.2 V914.2 H1504.8 V898.9 H1506.4 V889.6 H1508.0 V878.5 H1509.6 V856.3 H1511.1 V852.8 H1512.7 V854.7 H1514.3 V852.1 H1515.9 V855.5 H1517.5 V851.3 H1519.0 V850.2 H1520.6 V855.9 H1522.2 V848.6 H1523.8 V851.8 H1525.4 V853.5 H1526.9 V852.2 H1528.5 V853.9 H1530.1 V851.1 H1531.7 V858.6 H1533.3 V853.6 H1534.8 V860.6 H1536.4 V858.6 H1538.0 V861.7 H1539.6 V860.5 H1541.2 V857.7 H1542.7 V852.0 H1544.3 V849.7 H1545.9 V852.0 H1547.5 V845.4 H1549.1 V837.3 H1550.6 V841.2 H1552.2 V841.0 H1553.8 V839.7 H1555.4 V832.5 H1557.0 V843.2 H1558.5 V833.0 H1560.1 V835.4 H1561.7 V834.8 H1563.3 V846.2 H1564.9 V840.8 H1566.4 V841.3 H1568.0 V843.4 H1569.6 V837.9 H1571.2 V840.7 H1572.8 V847.5 H1574.3 V848.2 H1575.9 V847.6 H1577.5 V849.3 H1579.1 V837.5 H1580.7 V846.7 H1582.2 V843.9 H1583.8 V844.1 H1585.4 V842.8 H1587.0 V832.5 H1588.6 V840.2 H1590.1 V838.9 H1591.7 V838.2 H1593.3 V839.3 H1594.9 V846.4 H1596.5 V844.4 H1598.0 V856.0 H1599.6 V855.5 H1601.2 V858.1 H1602.8 V855.1 H1604.4 V853.5 H1605.9 V854.8 H1607.5 V853.1 H1609.1 V852.9 H1610.7 V854.2 H1612.3 V854.1 H1613.8 V851.0 H1615.4 V854.4 H1617.0 V854.8 H1618.6 V862.7 H1620.2 V861.6 H1621.7 V860.0 H1623.3 V853.3 H1624.9 V847.2 H1626.5 V854.4 H1628.1 V858.1 H1629.6 V858.1 H1631.2 V859.6 H1632.8 V855.1 H1634.4 V858.1 H1636.0 V856.1 H1637.5 V854.1 H1639.1 V850.7 H1640.7 V843.8 H1642.3 V845.6 H1643.9 V849.0 H1645.4 V849.3 H1647.0 V851.1 H1648.6 V850.5 H1650.2 V848.6 H1651.8 V849.6 H1653.3 V844.7 H1654.9 V848.3 H1656.5 V843.3 H1658.1 V844.3 H1659.7 V845.4 H1661.2 V843.4 H1662.8 V842.9 H1664.4 V839.5 H1666.0 V845.0 H1667.6 V841.5 H1669.1 V834.8 H1670.7 V846.1 H1672.3 V843.9 H1673.9 V843.3 H1675.5 V839.8 H1677.0 V842.2 H1678.6 V837.2 H1680.2 V835.2 H1681.8 V830.1 H1683.4 V834.3 H1684.9 V834.1 H1686.5 V841.5 H1688.1 V841.4 H1689.7 V844.2 H1691.3 V842.7 H1692.8 V842.6 H1694.4 V836.4 H1696.0 V831.7 H1697.6 V828.6 H1699.2 V829.4 H1700.7 V827.6 H1702.3 V819.8 H1703.9 V818.0 H1705.5 V820.7 H1707.1 V814.4 H1708.6 V817.1 H1710.2 V818.2 H1711.8 V811.3 H1713.4 V802.9 H1715.0 V798.9 H1716.5 V793.5 H1718.1 V789.6 H1719.7 V788.6 H1721.3 V788.5 H1722.9 V789.2 H1724.4 V786.9 H1726.0 V783.2 H1727.6 V785.4 H1729.2 V783.6 H1730.8 V789.5 H1732.3 V792.4 H1733.9 V790.8 H1735.5 V798.1 H1737.1 V795.3 H1738.7 V794.0 H1740.2 V795.7 H1741.8 V792.9 H1743.4 V791.6 H1745.0 V790.3 H1746.6 V791.5 H1748.1 V794.2 H1749.7 V796.9 H1751.3 V796.6 H1752.9 V792.2 H1754.5 V792.3 H1756.0 V787.9 H1757.6 V786.5 H1759.2 V788.1 H1760.8 V788.2 H1762.4 V785.2 H1763.9 V780.8 H1765.5 V782.3 H1767.1 V781.2 H1768.7 V787.6 H1770.3 V783.5 H1771.8 V786.8 H1773.4 V785.7 H1775.0 V780.1 H1776.6 V783.0 H1778.2 V785.4 H1779.7 V784.8 H1781.3 V776.7 H1782.9 V776.2 H1784.5 V774.6 H1786.1 V777.6 H1787.6 V782.2 H1789.2 V780.8 H1790.8 V785.4 H1792.4 V781.1 H1794.0 V780.9 H1795.5 V776.2 H1797.1 V777.9 H1798.7 V776.7 H1800.3 V778.5 H1801.9 V783.3 H1803.4 V782.1 H1805.0 V785.4 H1806.6 V787.1 H1808.2 V781.6 H1809.8 V785.0 H1811.3 V781.0 H1812.9 V782.9 H1814.5 V782.9 H1816.1 V785.3 H1817.7 V786.2 H1819.2 V784.1 H1820.8 V788.4 H1822.4 V784.4 H1824.0 V780.4 H1825.6 V776.4 H1827.1 V778.9 H1828.7 V783.7 H1830.3 V782.6 H1831.9 V786.0 H1833.5 V787.8 H1835.0 V787.6 H1836.6 V791.9 H1838.2 V790.3 H1839.8 V791.6 H1841.4 V792.9 H1842.9 V794.4 H1844.5 V791.0 H1846.1 V789.0 H1847.7 V781.7 H1849.3 V793.5 H1850.8 V793.3 H1852.4 V794.6 H1854.0 V804.9 H1855.6 V809.1 H1857.2 V810.3 H1858.7 V810.2 H1860.3 V805.5 H1861.9 V806.8 H1863.5 V799.2 H1865.1 V800.2 H1866.6 V800.2 H1868.2 V801.7 H1869.8 V798.7 H1871.4 V803.2 H1873.0 V806.2 H1874.5 V798.7 H1876.1 V800.2 H1877.7 V797.0 H1879.3 V795.4 H1880.9 V795.4 H1882.4 V792.3 H1884.0 V792.2 H1885.6 V790.6 H1887.2 V787.5 H1888.8 V788.2 H1890.3 V795.2 H1891.9 V799.1 H1893.5 V806.5 H1895.1 V805.1 H1896.7 V800.8 H1898.2 V801.0 H1899.8 V798.2 H1901.4 V796.1 H1903.0 V776.0 H1903.5" fill="none" stroke="#ff0000" stroke-width="3" stroke-linejoin="miter"/><rect x="14.9" y="287.8" width="3.6" height="2.2" fill="#f2ec84"/><rect x="17.5" y="287.8" width="1.9" height="5.0" fill="#1284ff"/><rect x="19.1" y="290.8" width="1.9" height="8.1" fill="#1284ff"/><rect x="20.6" y="293.9" width="1.9" height="5.0" fill="#ff0a0a"/><rect x="21.2" y="293.9" width="3.6" height="2.2" fill="#f2ec84"/><rect x="23.8" y="293.9" width="1.9" height="5.0" fill="#1284ff"/><rect x="24.4" y="296.9" width="3.6" height="2.2" fill="#f2ec84"/><rect x="26.0" y="296.9" width="3.6" height="2.2" fill="#f2ec84"/><rect x="27.5" y="296.9" width="3.6" height="2.2" fill="#f2ec84"/><rect x="29.1" y="296.9" width="3.6" height="2.2" fill="#f2ec84"/><rect x="32.3" y="290.8" width="3.6" height="2.2" fill="#f2ec84"/><rect x="36.4" y="287.8" width="1.9" height="5.0" fill="#ff0a0a"/><rect x="41.2" y="287.8" width="1.9" height="8.1" fill="#1284ff"/><rect x="42.8" y="287.8" width="1.9" height="5.0" fill="#f2ec84"/><rect x="44.3" y="290.8" width="1.9" height="5.0" fill="#1284ff"/><rect x="45.9" y="287.8" width="1.9" height="11.1" fill="#1284ff"/><rect x="47.5" y="293.9" width="1.9" height="5.0" fill="#f2ec84"/><rect x="49.1" y="296.9" width="1.9" height="5.0" fill="#1284ff"/><rect x="50.7" y="300.0" width="1.9" height="5.0" fill="#1284ff"/><rect x="52.2" y="303.0" width="1.9" height="8.1" fill="#1284ff"/><rect x="54.4" y="309.1" width="3.6" height="2.2" fill="#f2ec84"/><rect x="57.0" y="309.1" width="1.9" height="5.0" fill="#1284ff"/><rect x="58.6" y="312.1" width="1.9" height="5.0" fill="#1284ff"/><rect x="59.1" y="315.2" width="3.6" height="2.2" fill="#f2ec84"/><rect x="62.3" y="315.2" width="3.6" height="2.2" fill="#f2ec84"/><rect x="64.9" y="315.2" width="1.9" height="5.0" fill="#f2ec84"/><rect x="65.5" y="315.2" width="3.6" height="2.2" fill="#f2ec84"/><rect x="67.0" y="315.2" width="3.6" height="2.2" fill="#f2ec84"/><rect x="70.2" y="315.2" width="3.6" height="2.2" fill="#f2ec84"/><rect x="71.8" y="315.2" width="3.6" height="2.2" fill="#f2ec84"/><rect x="73.4" y="315.2" width="3.6" height="2.2" fill="#f2ec84"/><rect x="74.9" y="315.2" width="3.6" height="2.2" fill="#f2ec84"/><rect x="79.1" y="312.1" width="1.9" height="11.1" fill="#1284ff"/><rect x="80.7" y="318.2" width="1.9" height="5.0" fill="#ff0a0a"/><rect x="81.3" y="318.2" width="3.6" height="2.2" fill="#f2ec84"/><rect x="83.8" y="315.2" width="1.9" height="5.0" fill="#ff0a0a"/><rect x="85.4" y="312.1" width="1.9" height="5.0" fill="#ff0a0a"/><rect x="87.0" y="309.1" width="1.9" height="5.0" fill="#ff0a0a"/><rect x="88.6" y="303.0" width="1.9" height="8.1" fill="#ff0a0a"/><rect x="90.2" y="303.0" width="1.9" height="11.1" fill="#1284ff"/><rect x="90.7" y="306.0" width="3.6" height="2.2" fill="#f2ec84"/><rect x="92.3" y="306.0" width="3.6" height="2.2" fill="#f2ec84"/><rect x="94.9" y="306.0" width="1.9" height="5.0" fill="#1284ff"/><rect x="95.5" y="309.1" width="3.6" height="2.2" fill="#f2ec84"/><rect x="99.6" y="309.1" width="1.9" height="8.1" fill="#1284ff"/><rect x="101.8" y="312.1" width="3.6" height="2.2" fill="#f2ec84"/><rect x="103.4" y="312.1" width="3.6" height="2.2" fill="#f2ec84"/><rect x="106.0" y="312.1" width="1.9" height="5.0" fill="#1284ff"/><rect x="107.5" y="312.1" width="1.9" height="5.0" fill="#ff0a0a"/><rect x="109.1" y="312.1" width="1.9" height="5.0" fill="#1284ff"/><rect x="110.7" y="312.1" width="1.9" height="5.0" fill="#ff0a0a"/><rect x="112.3" y="309.1" width="1.9" height="5.0" fill="#ff0a0a"/><rect x="113.9" y="303.0" width="1.9" height="8.1" fill="#ff0a0a"/><rect x="115.4" y="303.0" width="1.9" height="11.1" fill="#1284ff"/><rect x="116.0" y="306.0" width="3.6" height="2.2" fill="#f2ec84"/><rect x="118.6" y="303.0" width="1.9" height="5.0" fill="#ff0a0a"/><rect x="120.2" y="303.0" width="1.9" height="8.1" fill="#f2ec84"/><rect x="122.3" y="303.0" width="3.6" height="2.2" fill="#f2ec84"/><rect x="126.5" y="303.0" width="1.9" height="5.0" fill="#1284ff"/><rect x="127.1" y="306.0" width="3.6" height="2.2" fill="#f2ec84"/><rect x="129.7" y="303.0" width="1.9" height="8.1" fill="#ff0a0a"/><rect x="131.8" y="303.0" width="3.6" height="2.2" fill="#f2ec84"/><rect x="133.4" y="303.0" width="3.6" height="2.2" fill="#f2ec84"/><rect x="135.0" y="303.0" width="3.6" height="2.2" fill="#f2ec84"/><rect x="136.6" y="303.0" width="3.6" height="2.2" fill="#f2ec84"/><rect x="139.1" y="300.0" width="1.9" height="5.0" fill="#ff0a0a"/><rect x="139.7" y="300.0" width="3.6" height="2.2" fill="#f2ec84"/><rect x="142.3" y="300.0" width="1.9" height="5.0" fill="#f2ec84"/><rect x="146.0" y="296.9" width="3.6" height="2.2" fill="#f2ec84"/><rect x="148.6" y="284.8" width="1.9" height="14.2" fill="#ff0a0a"/><rect x="151.8" y="293.9" width="1.9" height="5.0" fill="#1284ff"/><rect x="153.4" y="293.9" width="1.9" height="8.1" fill="#ff0a0a"/><rect x="154.9" y="290.8" width="1.9" height="5.0" fill="#ff0a0a"/><rect x="156.5" y="287.8" width="1.9" height="5.0" fill="#ff0a0a"/><rect x="158.1" y="287.8" width="1.9" height="5.0" fill="#1284ff"/><rect x="158.7" y="290.8" width="3.6" height="2.2" fill="#f2ec84"/><rect x="160.3" y="290.8" width="3.6" height="2.2" fill="#f2ec84"/><rect x="161.8" y="290.8" width="3.6" height="2.2" fill="#f2ec84"/><rect x="163.4" y="290.8" width="3.6" height="2.2" fill="#f2ec84"/><rect x="166.0" y="287.8" width="1.9" height="5.0" fill="#f2ec84"/><rect x="167.6" y="290.8" width="1.9" height="5.0" fill="#1284ff"/><rect x="170.7" y="290.8" width="1.9" height="8.1" fill="#1284ff"/><rect x="172.3" y="293.9" width="1.9" height="5.0" fill="#ff0a0a"/><rect x="172.9" y="293.9" width="3.6" height="2.2" fill="#f2ec84"/><rect x="175.5" y="293.9" width="1.9" height="5.0" fill="#1284ff"/><rect x="176.1" y="296.9" width="3.6" height="2.2" fill="#f2ec84"/><rect x="178.6" y="296.9" width="1.9" height="5.0" fill="#1284ff"/><rect x="180.2" y="296.9" width="1.9" height="5.0" fill="#ff0a0a"/><rect x="181.8" y="296.9" width="1.9" height="5.0" fill="#1284ff"/><rect x="183.4" y="296.9" width="1.9" height="5.0" fill="#ff0a0a"/><rect x="186.5" y="300.0" width="1.9" height="5.0" fill="#1284ff"/><rect x="188.1" y="300.0" width="1.9" height="5.0" fill="#f2ec84"/><rect x="188.7" y="303.0" width="3.6" height="2.2" fill="#f2ec84"/><rect x="191.3" y="303.0" width="1.9" height="5.0" fill="#1284ff"/><rect x="192.9" y="300.0" width="1.9" height="8.1" fill="#ff0a0a"/><rect x="194.4" y="300.0" width="1.9" height="5.0" fill="#1284ff"/><rect x="196.0" y="303.0" width="1.9" height="5.0" fill="#1284ff"/><rect x="197.6" y="303.0" width="1.9" height="5.0" fill="#ff0a0a"/><rect x="199.2" y="300.0" width="1.9" height="5.0" fill="#ff0a0a"/><rect x="199.8" y="300.0" width="3.6" height="2.2" fill="#f2ec84"/><rect x="201.3" y="300.0" width="3.6" height="2.2" fill="#f2ec84"/><rect x="203.9" y="296.9" width="1.9" height="5.0" fill="#ff0a0a"/><rect x="204.5" y="296.9" width="3.6" height="2.2" fill="#f2ec84"/><rect x="207.1" y="293.9" width="1.9" height="5.0" fill="#ff0a0a"/><rect x="207.7" y="293.9" width="3.6" height="2.2" fill="#f2ec84"/><rect x="210.8" y="293.9" width="3.6" height="2.2" fill="#f2ec84"/><rect x="212.4" y="293.9" width="3.6" height="2.2" fill="#f2ec84"/><rect x="214.0" y="293.9" width="3.6" height="2.2" fill="#f2ec84"/><rect x="216.6" y="293.9" width="1.9" height="5.0" fill="#1284ff"/><rect x="219.7" y="290.8" width="1.9" height="8.1" fill="#f2ec84"/><rect x="220.3" y="296.9" width="3.6" height="2.2" fill="#f2ec84"/><rect x="221.9" y="296.9" width="3.6" height="2.2" fill="#f2ec84"/><rect x="223.5" y="296.9" width="3.6" height="2.2" fill="#f2ec84"/><rect x="225.0" y="296.9" width="3.6" height="2.2" fill="#f2ec84"/><rect x="227.6" y="287.8" width="1.9" height="11.1" fill="#ff0a0a"/><rect x="228.2" y="293.9" width="3.6" height="2.2" fill="#f2ec84"/><rect x="229.8" y="293.9" width="3.6" height="2.2" fill="#f2ec84"/><rect x="232.4" y="287.8" width="1.9" height="8.1" fill="#ff0a0a"/><rect x="235.5" y="287.8" width="1.9" height="8.1" fill="#1284ff"/><rect x="237.1" y="287.8" width="1.9" height="8.1" fill="#ff0a0a"/><rect x="238.7" y="281.7" width="1.9" height="8.1" fill="#f2ec84"/><rect x="241.8" y="284.8" width="1.9" height="11.1" fill="#ff0a0a"/><rect x="243.4" y="284.8" width="1.9" height="8.1" fill="#1284ff"/><rect x="246.6" y="284.8" width="1.9" height="8.1" fill="#1284ff"/><rect x="248.2" y="287.8" width="1.9" height="5.0" fill="#ff0a0a"/><rect x="252.9" y="290.8" width="1.9" height="5.0" fill="#1284ff"/><rect x="254.5" y="293.9" width="1.9" height="5.0" fill="#1284ff"/><rect x="255.1" y="296.9" width="3.6" height="2.2" fill="#f2ec84"/><rect x="256.6" y="296.9" width="3.6" height="2.2" fill="#f2ec84"/><rect x="260.8" y="296.9" width="1.9" height="5.0" fill="#1284ff"/><rect x="262.4" y="293.9" width="1.9" height="8.1" fill="#ff0a0a"/><rect x="264.0" y="293.9" width="1.9" height="5.0" fill="#1284ff"/><rect x="264.5" y="296.9" width="3.6" height="2.2" fill="#f2ec84"/><rect x="268.7" y="290.8" width="1.9" height="14.2" fill="#ff0a0a"/><rect x="270.3" y="290.8" width="1.9" height="5.0" fill="#1284ff"/><rect x="270.9" y="293.9" width="3.6" height="2.2" fill="#f2ec84"/><rect x="275.6" y="293.9" width="3.6" height="2.2" fill="#f2ec84"/><rect x="277.2" y="293.9" width="3.6" height="2.2" fill="#f2ec84"/><rect x="278.8" y="293.9" width="3.6" height="2.2" fill="#f2ec84"/><rect x="280.3" y="293.9" width="3.6" height="2.2" fill="#f2ec84"/><rect x="281.9" y="293.9" width="3.6" height="2.2" fill="#f2ec84"/><rect x="284.5" y="290.8" width="1.9" height="5.0" fill="#ff0a0a"/><rect x="289.2" y="287.8" width="1.9" height="5.0" fill="#1284ff"/><rect x="289.8" y="290.8" width="3.6" height="2.2" fill="#f2ec84"/><rect x="291.4" y="290.8" width="3.6" height="2.2" fill="#f2ec84"/><rect x="294.6" y="290.8" width="3.6" height="2.2" fill="#f2ec84"/><rect x="297.1" y="290.8" width="1.9" height="5.0" fill="#1284ff"/><rect x="298.7" y="293.9" width="1.9" height="5.0" fill="#1284ff"/><rect x="300.3" y="296.9" width="1.9" height="5.0" fill="#1284ff"/><rect x="301.9" y="300.0" width="1.9" height="5.0" fill="#1284ff"/><rect x="303.5" y="300.0" width="1.9" height="5.0" fill="#f2ec84"/><rect x="308.2" y="303.0" width="1.9" height="5.0" fill="#1284ff"/><rect x="311.4" y="300.0" width="1.9" height="8.1" fill="#ff0a0a"/><rect x="312.9" y="296.9" width="1.9" height="5.0" fill="#ff0a0a"/><rect x="314.5" y="296.9" width="1.9" height="8.1" fill="#1284ff"/><rect x="321.4" y="296.9" width="3.6" height="2.2" fill="#f2ec84"/><rect x="323.0" y="296.9" width="3.6" height="2.2" fill="#f2ec84"/><rect x="324.6" y="296.9" width="3.6" height="2.2" fill="#f2ec84"/><rect x="327.2" y="293.9" width="1.9" height="5.0" fill="#ff0a0a"/><rect x="330.3" y="293.9" width="1.9" height="5.0" fill="#1284ff"/><rect x="331.9" y="296.9" width="1.9" height="5.0" fill="#f2ec84"/><rect x="334.1" y="293.9" width="3.6" height="2.2" fill="#f2ec84"/><rect x="336.6" y="287.8" width="1.9" height="8.1" fill="#ff0a0a"/><rect x="338.2" y="287.8" width="1.9" height="5.0" fill="#1284ff"/><rect x="339.8" y="287.8" width="1.9" height="5.0" fill="#ff0a0a"/><rect x="340.4" y="287.8" width="3.6" height="2.2" fill="#f2ec84"/><rect x="343.0" y="284.8" width="1.9" height="5.0" fill="#ff0a0a"/><rect x="348.3" y="278.7" width="3.6" height="2.2" fill="#f2ec84"/><rect x="349.9" y="278.7" width="3.6" height="2.2" fill="#f2ec84"/><rect x="352.4" y="275.6" width="1.9" height="5.0" fill="#ff0a0a"/><rect x="354.0" y="275.6" width="1.9" height="5.0" fill="#1284ff"/><rect x="354.6" y="278.7" width="3.6" height="2.2" fill="#f2ec84"/><rect x="356.2" y="278.7" width="3.6" height="2.2" fill="#f2ec84"/><rect x="358.8" y="278.7" width="1.9" height="5.0" fill="#1284ff"/><rect x="360.3" y="278.7" width="1.9" height="5.0" fill="#ff0a0a"/><rect x="361.9" y="278.7" width="1.9" height="5.0" fill="#1284ff"/><rect x="362.5" y="281.7" width="3.6" height="2.2" fill="#f2ec84"/><rect x="365.1" y="281.7" width="1.9" height="5.0" fill="#1284ff"/><rect x="366.7" y="281.7" width="1.9" height="5.0" fill="#ff0a0a"/><rect x="368.2" y="281.7" width="1.9" height="5.0" fill="#1284ff"/><rect x="370.4" y="287.8" width="3.6" height="2.2" fill="#f2ec84"/><rect x="372.0" y="287.8" width="3.6" height="2.2" fill="#f2ec84"/><rect x="374.6" y="287.8" width="1.9" height="8.1" fill="#f2ec84"/><rect x="376.1" y="287.8" width="1.9" height="8.1" fill="#1284ff"/><rect x="377.7" y="290.8" width="1.9" height="5.0" fill="#ff0a0a"/><rect x="378.3" y="290.8" width="3.6" height="2.2" fill="#f2ec84"/><rect x="380.9" y="290.8" width="1.9" height="5.0" fill="#1284ff"/><rect x="381.5" y="293.9" width="3.6" height="2.2" fill="#f2ec84"/><rect x="384.0" y="293.9" width="1.9" height="8.1" fill="#f2ec84"/><rect x="386.2" y="293.9" width="3.6" height="2.2" fill="#f2ec84"/><rect x="389.4" y="290.8" width="3.6" height="2.2" fill="#f2ec84"/><rect x="391.9" y="284.8" width="1.9" height="8.1" fill="#ff0a0a"/><rect x="395.1" y="281.7" width="1.9" height="5.0" fill="#ff0a0a"/><rect x="396.7" y="278.7" width="1.9" height="5.0" fill="#ff0a0a"/><rect x="398.3" y="275.6" width="1.9" height="5.0" fill="#ff0a0a"/><rect x="399.8" y="272.6" width="1.9" height="5.0" fill="#ff0a0a"/><rect x="400.4" y="272.6" width="3.6" height="2.2" fill="#f2ec84"/><rect x="403.0" y="272.6" width="1.9" height="11.1" fill="#1284ff"/><rect x="403.6" y="275.6" width="3.6" height="2.2" fill="#f2ec84"/><rect x="406.2" y="275.6" width="1.9" height="5.0" fill="#1284ff"/><rect x="412.5" y="272.6" width="1.9" height="5.0" fill="#ff0a0a"/><rect x="413.1" y="272.6" width="3.6" height="2.2" fill="#f2ec84"/><rect x="417.2" y="269.6" width="1.9" height="5.0" fill="#ff0a0a"/><rect x="417.8" y="269.6" width="3.6" height="2.2" fill="#f2ec84"/><rect x="419.4" y="269.6" width="3.6" height="2.2" fill="#f2ec84"/><rect x="421.0" y="269.6" width="3.6" height="2.2" fill="#f2ec84"/><rect x="422.5" y="269.6" width="3.6" height="2.2" fill="#f2ec84"/><rect x="425.1" y="269.6" width="1.9" height="5.0" fill="#1284ff"/><rect x="426.7" y="269.6" width="1.9" height="11.1" fill="#ff0a0a"/><rect x="427.3" y="269.6" width="3.6" height="2.2" fill="#f2ec84"/><rect x="430.4" y="269.6" width="3.6" height="2.2" fill="#f2ec84"/><rect x="432.0" y="269.6" width="3.6" height="2.2" fill="#f2ec84"/><rect x="436.2" y="266.5" width="1.9" height="8.1" fill="#1284ff"/><rect x="437.8" y="269.6" width="1.9" height="5.0" fill="#ff0a0a"/><rect x="438.3" y="269.6" width="3.6" height="2.2" fill="#f2ec84"/><rect x="440.9" y="266.5" width="1.9" height="5.0" fill="#f2ec84"/><rect x="442.5" y="269.6" width="1.9" height="5.0" fill="#1284ff"/><rect x="444.1" y="272.6" width="1.9" height="5.0" fill="#1284ff"/><rect x="446.2" y="275.6" width="3.6" height="2.2" fill="#f2ec84"/><rect x="449.4" y="272.6" width="3.6" height="2.2" fill="#f2ec84"/><rect x="452.6" y="272.6" width="3.6" height="2.2" fill="#f2ec84"/><rect x="455.1" y="272.6" width="1.9" height="5.0" fill="#1284ff"/><rect x="458.3" y="284.8" width="1.9" height="5.0" fill="#1284ff"/><rect x="458.9" y="287.8" width="3.6" height="2.2" fill="#f2ec84"/><rect x="461.5" y="284.8" width="1.9" height="5.0" fill="#ff0a0a"/><rect x="463.0" y="284.8" width="1.9" height="5.0" fill="#1284ff"/><rect x="464.6" y="287.8" width="1.9" height="5.0" fill="#1284ff"/><rect x="465.2" y="290.8" width="3.6" height="2.2" fill="#f2ec84"/><rect x="467.8" y="287.8" width="1.9" height="5.0" fill="#ff0a0a"/><rect x="469.4" y="287.8" width="1.9" height="5.0" fill="#1284ff"/><rect x="470.9" y="284.8" width="1.9" height="8.1" fill="#f2ec84"/><rect x="471.5" y="290.8" width="3.6" height="2.2" fill="#f2ec84"/><rect x="473.1" y="290.8" width="3.6" height="2.2" fill="#f2ec84"/><rect x="474.7" y="290.8" width="3.6" height="2.2" fill="#f2ec84"/><rect x="477.3" y="281.7" width="1.9" height="11.1" fill="#ff0a0a"/><rect x="477.8" y="287.8" width="3.6" height="2.2" fill="#f2ec84"/><rect x="481.0" y="293.9" width="3.6" height="2.2" fill="#f2ec84"/><rect x="482.6" y="293.9" width="3.6" height="2.2" fill="#f2ec84"/><rect x="485.2" y="290.8" width="1.9" height="8.1" fill="#1284ff"/><rect x="488.3" y="293.9" width="1.9" height="5.0" fill="#1284ff"/><rect x="488.9" y="296.9" width="3.6" height="2.2" fill="#f2ec84"/><rect x="491.5" y="296.9" width="1.9" height="5.0" fill="#1284ff"/><rect x="492.1" y="300.0" width="3.6" height="2.2" fill="#f2ec84"/><rect x="496.2" y="296.9" width="1.9" height="5.0" fill="#ff0a0a"/><rect x="496.8" y="296.9" width="3.6" height="2.2" fill="#f2ec84"/><rect x="498.4" y="296.9" width="3.6" height="2.2" fill="#f2ec84"/><rect x="500.0" y="296.9" width="3.6" height="2.2" fill="#f2ec84"/><rect x="502.5" y="284.8" width="1.9" height="14.2" fill="#ff0a0a"/><rect x="504.1" y="290.8" width="1.9" height="5.0" fill="#1284ff"/><rect x="504.7" y="293.9" width="3.6" height="2.2" fill="#f2ec84"/><rect x="506.3" y="293.9" width="3.6" height="2.2" fill="#f2ec84"/><rect x="510.4" y="284.8" width="1.9" height="8.1" fill="#f2ec84"/><rect x="511.0" y="290.8" width="3.6" height="2.2" fill="#f2ec84"/><rect x="512.6" y="290.8" width="3.6" height="2.2" fill="#f2ec84"/><rect x="514.2" y="290.8" width="3.6" height="2.2" fill="#f2ec84"/><rect x="516.8" y="287.8" width="1.9" height="8.1" fill="#ff0a0a"/><rect x="518.3" y="287.8" width="1.9" height="5.0" fill="#f2ec84"/><rect x="518.9" y="287.8" width="3.6" height="2.2" fill="#f2ec84"/><rect x="521.5" y="287.8" width="1.9" height="5.0" fill="#1284ff"/><rect x="523.7" y="287.8" width="3.6" height="2.2" fill="#f2ec84"/><rect x="525.2" y="287.8" width="3.6" height="2.2" fill="#f2ec84"/><rect x="527.8" y="287.8" width="1.9" height="5.0" fill="#1284ff"/><rect x="531.0" y="278.7" width="1.9" height="8.1" fill="#f2ec84"/><rect x="531.6" y="284.8" width="3.6" height="2.2" fill="#f2ec84"/><rect x="534.7" y="284.8" width="3.6" height="2.2" fill="#f2ec84"/><rect x="539.5" y="284.8" width="3.6" height="2.2" fill="#f2ec84"/><rect x="545.2" y="284.8" width="1.9" height="5.0" fill="#ff0a0a"/><rect x="546.8" y="281.7" width="1.9" height="5.0" fill="#ff0a0a"/><rect x="548.4" y="278.7" width="1.9" height="5.0" fill="#ff0a0a"/><rect x="548.9" y="278.7" width="3.6" height="2.2" fill="#f2ec84"/><rect x="551.5" y="275.6" width="1.9" height="5.0" fill="#ff0a0a"/><rect x="553.1" y="272.6" width="1.9" height="8.1" fill="#1284ff"/><rect x="553.7" y="278.7" width="3.6" height="2.2" fill="#f2ec84"/><rect x="557.8" y="278.7" width="1.9" height="5.0" fill="#1284ff"/><rect x="558.4" y="281.7" width="3.6" height="2.2" fill="#f2ec84"/><rect x="560.0" y="281.7" width="3.6" height="2.2" fill="#f2ec84"/><rect x="562.6" y="281.7" width="1.9" height="11.1" fill="#1284ff"/><rect x="567.9" y="281.7" width="3.6" height="2.2" fill="#f2ec84"/><rect x="569.5" y="281.7" width="3.6" height="2.2" fill="#f2ec84"/><rect x="575.2" y="278.7" width="1.9" height="5.0" fill="#ff0a0a"/><rect x="576.8" y="272.6" width="1.9" height="8.1" fill="#ff0a0a"/><rect x="580.0" y="275.6" width="1.9" height="5.0" fill="#1284ff"/><rect x="580.5" y="278.7" width="3.6" height="2.2" fill="#f2ec84"/><rect x="582.1" y="278.7" width="3.6" height="2.2" fill="#f2ec84"/><rect x="586.9" y="275.6" width="3.6" height="2.2" fill="#f2ec84"/><rect x="588.4" y="275.6" width="3.6" height="2.2" fill="#f2ec84"/><rect x="591.0" y="272.6" width="1.9" height="5.0" fill="#ff0a0a"/><rect x="591.6" y="272.6" width="3.6" height="2.2" fill="#f2ec84"/><rect x="594.8" y="272.6" width="3.6" height="2.2" fill="#f2ec84"/><rect x="597.3" y="272.6" width="1.9" height="5.0" fill="#1284ff"/><rect x="598.9" y="269.6" width="1.9" height="8.1" fill="#ff0a0a"/><rect x="600.5" y="269.6" width="1.9" height="5.0" fill="#1284ff"/><rect x="603.7" y="272.6" width="1.9" height="5.0" fill="#ff0a0a"/><rect x="604.2" y="272.6" width="3.6" height="2.2" fill="#f2ec84"/><rect x="605.8" y="272.6" width="3.6" height="2.2" fill="#f2ec84"/><rect x="610.0" y="272.6" width="1.9" height="5.0" fill="#ff0a0a"/><rect x="610.6" y="272.6" width="3.6" height="2.2" fill="#f2ec84"/><rect x="612.1" y="272.6" width="3.6" height="2.2" fill="#f2ec84"/><rect x="613.7" y="272.6" width="3.6" height="2.2" fill="#f2ec84"/><rect x="615.3" y="272.6" width="3.6" height="2.2" fill="#f2ec84"/><rect x="618.5" y="272.6" width="3.6" height="2.2" fill="#f2ec84"/><rect x="621.0" y="272.6" width="1.9" height="8.1" fill="#1284ff"/><rect x="622.6" y="272.6" width="1.9" height="8.1" fill="#ff0a0a"/><rect x="624.2" y="272.6" width="1.9" height="5.0" fill="#1284ff"/><rect x="624.8" y="275.6" width="3.6" height="2.2" fill="#f2ec84"/><rect x="626.4" y="275.6" width="3.6" height="2.2" fill="#f2ec84"/><rect x="628.9" y="272.6" width="1.9" height="8.1" fill="#1284ff"/><rect x="629.5" y="278.7" width="3.6" height="2.2" fill="#f2ec84"/><rect x="632.1" y="278.7" width="1.9" height="5.0" fill="#1284ff"/><rect x="633.7" y="275.6" width="1.9" height="8.1" fill="#f2ec84"/><rect x="638.4" y="287.8" width="1.9" height="5.0" fill="#1284ff"/><rect x="639.0" y="290.8" width="3.6" height="2.2" fill="#f2ec84"/><rect x="641.6" y="290.8" width="1.9" height="5.0" fill="#1284ff"/><rect x="643.2" y="293.9" width="1.9" height="5.0" fill="#1284ff"/><rect x="644.7" y="296.9" width="1.9" height="5.0" fill="#1284ff"/><rect x="646.3" y="300.0" width="1.9" height="5.0" fill="#1284ff"/><rect x="647.9" y="303.0" width="1.9" height="5.0" fill="#1284ff"/><rect x="649.5" y="303.0" width="1.9" height="5.0" fill="#ff0a0a"/><rect x="650.1" y="303.0" width="3.6" height="2.2" fill="#f2ec84"/><rect x="652.6" y="303.0" width="1.9" height="5.0" fill="#f2ec84"/><rect x="653.2" y="303.0" width="3.6" height="2.2" fill="#f2ec84"/><rect x="654.8" y="303.0" width="3.6" height="2.2" fill="#f2ec84"/><rect x="656.4" y="303.0" width="3.6" height="2.2" fill="#f2ec84"/><rect x="660.5" y="303.0" width="1.9" height="8.1" fill="#f2ec84"/><rect x="661.1" y="303.0" width="3.6" height="2.2" fill="#f2ec84"/><rect x="662.7" y="303.0" width="3.6" height="2.2" fill="#f2ec84"/><rect x="665.3" y="300.0" width="1.9" height="5.0" fill="#ff0a0a"/><rect x="666.9" y="300.0" width="1.9" height="8.1" fill="#1284ff"/><rect x="667.4" y="303.0" width="3.6" height="2.2" fill="#f2ec84"/><rect x="669.0" y="303.0" width="3.6" height="2.2" fill="#f2ec84"/><rect x="673.2" y="303.0" width="1.9" height="8.1" fill="#f2ec84"/><rect x="676.3" y="303.0" width="1.9" height="5.0" fill="#1284ff"/><rect x="677.9" y="303.0" width="1.9" height="5.0" fill="#ff0a0a"/><rect x="678.5" y="303.0" width="3.6" height="2.2" fill="#f2ec84"/><rect x="681.7" y="303.0" width="3.6" height="2.2" fill="#f2ec84"/><rect x="683.2" y="303.0" width="3.6" height="2.2" fill="#f2ec84"/><rect x="684.8" y="303.0" width="3.6" height="2.2" fill="#f2ec84"/><rect x="687.4" y="303.0" width="1.9" height="17.2" fill="#1284ff"/><rect x="689.0" y="318.2" width="1.9" height="8.1" fill="#1284ff"/><rect x="690.6" y="324.3" width="1.9" height="5.0" fill="#1284ff"/><rect x="692.1" y="324.3" width="1.9" height="5.0" fill="#ff0a0a"/><rect x="693.7" y="324.3" width="1.9" height="5.0" fill="#1284ff"/><rect x="695.3" y="327.3" width="1.9" height="5.0" fill="#1284ff"/><rect x="696.9" y="327.3" width="1.9" height="5.0" fill="#ff0a0a"/><rect x="697.5" y="327.3" width="3.6" height="2.2" fill="#f2ec84"/><rect x="699.0" y="327.3" width="3.6" height="2.2" fill="#f2ec84"/><rect x="701.6" y="324.3" width="1.9" height="5.0" fill="#ff0a0a"/><rect x="702.2" y="324.3" width="3.6" height="2.2" fill="#f2ec84"/><rect x="706.4" y="321.2" width="1.9" height="5.0" fill="#1284ff"/><rect x="707.9" y="321.2" width="1.9" height="5.0" fill="#ff0a0a"/><rect x="708.5" y="321.2" width="3.6" height="2.2" fill="#f2ec84"/><rect x="710.1" y="321.2" width="3.6" height="2.2" fill="#f2ec84"/><rect x="712.7" y="321.2" width="1.9" height="5.0" fill="#1284ff"/><rect x="713.3" y="324.3" width="3.6" height="2.2" fill="#f2ec84"/><rect x="714.8" y="324.3" width="3.6" height="2.2" fill="#f2ec84"/><rect x="717.4" y="321.2" width="1.9" height="5.0" fill="#ff0a0a"/><rect x="719.0" y="321.2" width="1.9" height="8.1" fill="#1284ff"/><rect x="719.6" y="327.3" width="3.6" height="2.2" fill="#f2ec84"/><rect x="722.7" y="324.3" width="3.6" height="2.2" fill="#f2ec84"/><rect x="725.3" y="321.2" width="1.9" height="5.0" fill="#ff0a0a"/><rect x="726.9" y="318.2" width="1.9" height="5.0" fill="#ff0a0a"/><rect x="727.5" y="318.2" width="3.6" height="2.2" fill="#f2ec84"/><rect x="729.1" y="318.2" width="3.6" height="2.2" fill="#f2ec84"/><rect x="730.6" y="318.2" width="3.6" height="2.2" fill="#f2ec84"/><rect x="732.2" y="318.2" width="3.6" height="2.2" fill="#f2ec84"/><rect x="735.4" y="318.2" width="3.6" height="2.2" fill="#f2ec84"/><rect x="738.0" y="315.2" width="1.9" height="5.0" fill="#ff0a0a"/><rect x="739.5" y="312.1" width="1.9" height="5.0" fill="#ff0a0a"/><rect x="740.1" y="312.1" width="3.6" height="2.2" fill="#f2ec84"/><rect x="744.3" y="309.1" width="1.9" height="5.0" fill="#1284ff"/><rect x="744.9" y="312.1" width="3.6" height="2.2" fill="#f2ec84"/><rect x="747.4" y="312.1" width="1.9" height="14.2" fill="#1284ff"/><rect x="749.0" y="318.2" width="1.9" height="8.1" fill="#1284ff"/><rect x="750.6" y="324.3" width="1.9" height="5.0" fill="#1284ff"/><rect x="751.2" y="327.3" width="3.6" height="2.2" fill="#f2ec84"/><rect x="752.8" y="327.3" width="3.6" height="2.2" fill="#f2ec84"/><rect x="755.3" y="324.3" width="1.9" height="5.0" fill="#ff0a0a"/><rect x="760.1" y="318.2" width="1.9" height="8.1" fill="#ff0a0a"/><rect x="760.7" y="321.2" width="3.6" height="2.2" fill="#f2ec84"/><rect x="765.4" y="321.2" width="3.6" height="2.2" fill="#f2ec84"/><rect x="768.0" y="321.2" width="1.9" height="5.0" fill="#1284ff"/><rect x="768.6" y="324.3" width="3.6" height="2.2" fill="#f2ec84"/><rect x="771.1" y="324.3" width="1.9" height="8.1" fill="#1284ff"/><rect x="772.7" y="324.3" width="1.9" height="5.0" fill="#ff0a0a"/><rect x="774.3" y="324.3" width="1.9" height="5.0" fill="#1284ff"/><rect x="774.9" y="327.3" width="3.6" height="2.2" fill="#f2ec84"/><rect x="779.0" y="321.2" width="1.9" height="8.1" fill="#ff0a0a"/><rect x="780.6" y="321.2" width="1.9" height="5.0" fill="#1284ff"/><rect x="782.2" y="321.2" width="1.9" height="5.0" fill="#ff0a0a"/><rect x="783.8" y="321.2" width="1.9" height="5.0" fill="#1284ff"/><rect x="785.9" y="318.2" width="3.6" height="2.2" fill="#f2ec84"/><rect x="790.1" y="318.2" width="1.9" height="5.0" fill="#1284ff"/><rect x="790.7" y="321.2" width="3.6" height="2.2" fill="#f2ec84"/><rect x="793.3" y="321.2" width="1.9" height="5.0" fill="#1284ff"/><rect x="794.8" y="321.2" width="1.9" height="11.1" fill="#1284ff"/><rect x="795.4" y="330.4" width="3.6" height="2.2" fill="#f2ec84"/><rect x="798.0" y="330.4" width="1.9" height="5.0" fill="#1284ff"/><rect x="799.6" y="327.3" width="1.9" height="11.1" fill="#1284ff"/><rect x="800.2" y="336.4" width="3.6" height="2.2" fill="#f2ec84"/><rect x="802.7" y="336.4" width="1.9" height="5.0" fill="#1284ff"/><rect x="804.3" y="339.5" width="1.9" height="5.0" fill="#1284ff"/><rect x="805.9" y="342.5" width="1.9" height="5.0" fill="#1284ff"/><rect x="807.5" y="345.6" width="1.9" height="5.0" fill="#1284ff"/><rect x="809.1" y="348.6" width="1.9" height="5.0" fill="#1284ff"/><rect x="809.6" y="351.6" width="3.6" height="2.2" fill="#f2ec84"/><rect x="811.2" y="351.6" width="3.6" height="2.2" fill="#f2ec84"/><rect x="813.8" y="348.6" width="1.9" height="5.0" fill="#ff0a0a"/><rect x="814.4" y="348.6" width="3.6" height="2.2" fill="#f2ec84"/><rect x="821.7" y="342.5" width="1.9" height="11.1" fill="#1284ff"/><rect x="823.3" y="342.5" width="1.9" height="8.1" fill="#ff0a0a"/><rect x="824.9" y="336.4" width="1.9" height="11.1" fill="#1284ff"/><rect x="826.4" y="339.5" width="1.9" height="8.1" fill="#ff0a0a"/><rect x="828.0" y="336.4" width="1.9" height="5.0" fill="#ff0a0a"/><rect x="829.6" y="336.4" width="1.9" height="5.0" fill="#f2ec84"/><rect x="831.2" y="333.4" width="1.9" height="5.0" fill="#ff0a0a"/><rect x="831.8" y="333.4" width="3.6" height="2.2" fill="#f2ec84"/><rect x="834.3" y="330.4" width="1.9" height="5.0" fill="#ff0a0a"/><rect x="834.9" y="330.4" width="3.6" height="2.2" fill="#f2ec84"/><rect x="837.5" y="324.3" width="1.9" height="8.1" fill="#f2ec84"/><rect x="838.1" y="330.4" width="3.6" height="2.2" fill="#f2ec84"/><rect x="842.2" y="330.4" width="1.9" height="5.0" fill="#1284ff"/><rect x="843.8" y="327.3" width="1.9" height="8.1" fill="#ff0a0a"/><rect x="845.4" y="324.3" width="1.9" height="14.2" fill="#1284ff"/><rect x="847.0" y="336.4" width="1.9" height="11.1" fill="#1284ff"/><rect x="850.7" y="345.6" width="3.6" height="2.2" fill="#f2ec84"/><rect x="855.5" y="345.6" width="3.6" height="2.2" fill="#f2ec84"/><rect x="858.0" y="345.6" width="1.9" height="8.1" fill="#1284ff"/><rect x="858.6" y="348.6" width="3.6" height="2.2" fill="#f2ec84"/><rect x="862.8" y="345.6" width="1.9" height="5.0" fill="#ff0a0a"/><rect x="864.4" y="345.6" width="1.9" height="5.0" fill="#f2ec84"/><rect x="864.9" y="345.6" width="3.6" height="2.2" fill="#f2ec84"/><rect x="867.5" y="342.5" width="1.9" height="5.0" fill="#ff0a0a"/><rect x="868.1" y="342.5" width="3.6" height="2.2" fill="#f2ec84"/><rect x="870.7" y="342.5" width="1.9" height="5.0" fill="#1284ff"/><rect x="872.3" y="336.4" width="1.9" height="11.1" fill="#ff0a0a"/><rect x="872.8" y="339.5" width="3.6" height="2.2" fill="#f2ec84"/><rect x="877.0" y="339.5" width="1.9" height="5.0" fill="#1284ff"/><rect x="881.7" y="339.5" width="1.9" height="5.0" fill="#1284ff"/><rect x="882.3" y="342.5" width="3.6" height="2.2" fill="#f2ec84"/><rect x="883.9" y="342.5" width="3.6" height="2.2" fill="#f2ec84"/><rect x="886.5" y="342.5" width="1.9" height="5.0" fill="#1284ff"/><rect x="888.1" y="342.5" width="1.9" height="8.1" fill="#ff0a0a"/><rect x="889.6" y="342.5" width="1.9" height="8.1" fill="#1284ff"/><rect x="891.2" y="348.6" width="1.9" height="5.0" fill="#1284ff"/><rect x="892.8" y="348.6" width="1.9" height="5.0" fill="#f2ec84"/><rect x="895.0" y="351.6" width="3.6" height="2.2" fill="#f2ec84"/><rect x="897.5" y="351.6" width="1.9" height="5.0" fill="#1284ff"/><rect x="898.1" y="354.7" width="3.6" height="2.2" fill="#f2ec84"/><rect x="899.7" y="354.7" width="3.6" height="2.2" fill="#f2ec84"/><rect x="903.9" y="354.7" width="1.9" height="5.0" fill="#1284ff"/><rect x="907.0" y="354.7" width="1.9" height="5.0" fill="#ff0a0a"/><rect x="908.6" y="354.7" width="1.9" height="5.0" fill="#1284ff"/><rect x="912.3" y="357.7" width="3.6" height="2.2" fill="#f2ec84"/><rect x="914.9" y="354.7" width="1.9" height="5.0" fill="#ff0a0a"/><rect x="915.5" y="354.7" width="3.6" height="2.2" fill="#f2ec84"/><rect x="918.1" y="351.6" width="1.9" height="5.0" fill="#ff0a0a"/><rect x="919.7" y="351.6" width="1.9" height="5.0" fill="#1284ff"/><rect x="921.2" y="351.6" width="1.9" height="5.0" fill="#ff0a0a"/><rect x="921.8" y="351.6" width="3.6" height="2.2" fill="#f2ec84"/><rect x="924.4" y="351.6" width="1.9" height="8.1" fill="#f2ec84"/><rect x="925.0" y="351.6" width="3.6" height="2.2" fill="#f2ec84"/><rect x="929.1" y="348.6" width="1.9" height="5.0" fill="#ff0a0a"/><rect x="932.3" y="342.5" width="1.9" height="5.0" fill="#f2ec84"/><rect x="933.9" y="342.5" width="1.9" height="5.0" fill="#ff0a0a"/><rect x="935.5" y="339.5" width="1.9" height="5.0" fill="#ff0a0a"/><rect x="936.0" y="339.5" width="3.6" height="2.2" fill="#f2ec84"/><rect x="938.6" y="336.4" width="1.9" height="5.0" fill="#ff0a0a"/><rect x="940.2" y="333.4" width="1.9" height="5.0" fill="#ff0a0a"/><rect x="941.8" y="330.4" width="1.9" height="8.1" fill="#ff0a0a"/><rect x="943.4" y="327.3" width="1.9" height="5.0" fill="#ff0a0a"/><rect x="944.9" y="321.2" width="1.9" height="8.1" fill="#ff0a0a"/><rect x="945.5" y="324.3" width="3.6" height="2.2" fill="#f2ec84"/><rect x="948.1" y="321.2" width="1.9" height="5.0" fill="#ff0a0a"/><rect x="949.7" y="318.2" width="1.9" height="5.0" fill="#ff0a0a"/><rect x="951.3" y="315.2" width="1.9" height="5.0" fill="#ff0a0a"/><rect x="952.8" y="309.1" width="1.9" height="14.2" fill="#1284ff"/><rect x="953.4" y="321.2" width="3.6" height="2.2" fill="#f2ec84"/><rect x="956.0" y="321.2" width="1.9" height="8.1" fill="#f2ec84"/><rect x="956.6" y="321.2" width="3.6" height="2.2" fill="#f2ec84"/><rect x="958.2" y="321.2" width="3.6" height="2.2" fill="#f2ec84"/><rect x="959.7" y="321.2" width="3.6" height="2.2" fill="#f2ec84"/><rect x="963.9" y="318.2" width="1.9" height="5.0" fill="#1284ff"/><rect x="964.5" y="321.2" width="3.6" height="2.2" fill="#f2ec84"/><rect x="967.1" y="321.2" width="1.9" height="8.1" fill="#f2ec84"/><rect x="967.6" y="321.2" width="3.6" height="2.2" fill="#f2ec84"/><rect x="971.8" y="318.2" width="1.9" height="5.0" fill="#ff0a0a"/><rect x="974.0" y="315.2" width="3.6" height="2.2" fill="#f2ec84"/><rect x="976.5" y="306.0" width="1.9" height="11.1" fill="#ff0a0a"/><rect x="978.1" y="309.1" width="1.9" height="5.0" fill="#ff0a0a"/><rect x="981.3" y="303.0" width="1.9" height="5.0" fill="#ff0a0a"/><rect x="981.9" y="303.0" width="3.6" height="2.2" fill="#f2ec84"/><rect x="986.0" y="296.9" width="1.9" height="5.0" fill="#ff0a0a"/><rect x="987.6" y="293.9" width="1.9" height="5.0" fill="#ff0a0a"/><rect x="990.8" y="287.8" width="1.9" height="5.0" fill="#ff0a0a"/><rect x="993.9" y="278.7" width="1.9" height="11.1" fill="#ff0a0a"/><rect x="996.1" y="284.8" width="3.6" height="2.2" fill="#f2ec84"/><rect x="998.7" y="278.7" width="1.9" height="8.1" fill="#ff0a0a"/><rect x="999.2" y="278.7" width="3.6" height="2.2" fill="#f2ec84"/><rect x="1000.8" y="278.7" width="3.6" height="2.2" fill="#f2ec84"/><rect x="1003.4" y="272.6" width="1.9" height="11.1" fill="#1284ff"/><rect x="1004.0" y="281.7" width="3.6" height="2.2" fill="#f2ec84"/><rect x="1005.6" y="281.7" width="3.6" height="2.2" fill="#f2ec84"/><rect x="1009.7" y="275.6" width="1.9" height="5.0" fill="#f2ec84"/><rect x="1011.3" y="272.6" width="1.9" height="8.1" fill="#f2ec84"/><rect x="1014.5" y="278.7" width="1.9" height="5.0" fill="#ff0a0a"/><rect x="1015.0" y="278.7" width="3.6" height="2.2" fill="#f2ec84"/><rect x="1017.6" y="278.7" width="1.9" height="5.0" fill="#1284ff"/><rect x="1018.2" y="281.7" width="3.6" height="2.2" fill="#f2ec84"/><rect x="1022.9" y="284.8" width="3.6" height="2.2" fill="#f2ec84"/><rect x="1027.1" y="284.8" width="1.9" height="5.0" fill="#1284ff"/><rect x="1028.7" y="281.7" width="1.9" height="8.1" fill="#ff0a0a"/><rect x="1030.3" y="281.7" width="1.9" height="11.1" fill="#1284ff"/><rect x="1031.8" y="284.8" width="1.9" height="5.0" fill="#1284ff"/><rect x="1034.0" y="284.8" width="3.6" height="2.2" fill="#f2ec84"/><rect x="1038.2" y="278.7" width="1.9" height="8.1" fill="#ff0a0a"/><rect x="1038.7" y="281.7" width="3.6" height="2.2" fill="#f2ec84"/><rect x="1041.3" y="281.7" width="1.9" height="5.0" fill="#1284ff"/><rect x="1042.9" y="281.7" width="1.9" height="5.0" fill="#ff0a0a"/><rect x="1044.5" y="278.7" width="1.9" height="5.0" fill="#ff0a0a"/><rect x="1047.6" y="272.6" width="1.9" height="11.1" fill="#1284ff"/><rect x="1048.2" y="281.7" width="3.6" height="2.2" fill="#f2ec84"/><rect x="1050.8" y="281.7" width="1.9" height="5.0" fill="#1284ff"/><rect x="1052.4" y="284.8" width="1.9" height="5.0" fill="#1284ff"/><rect x="1054.0" y="287.8" width="1.9" height="5.0" fill="#1284ff"/><rect x="1055.5" y="290.8" width="1.9" height="5.0" fill="#1284ff"/><rect x="1056.1" y="293.9" width="3.6" height="2.2" fill="#f2ec84"/><rect x="1057.7" y="293.9" width="3.6" height="2.2" fill="#f2ec84"/><rect x="1060.3" y="290.8" width="1.9" height="5.0" fill="#ff0a0a"/><rect x="1060.9" y="290.8" width="3.6" height="2.2" fill="#f2ec84"/><rect x="1062.4" y="290.8" width="3.6" height="2.2" fill="#f2ec84"/><rect x="1065.0" y="287.8" width="1.9" height="5.0" fill="#ff0a0a"/><rect x="1066.6" y="284.8" width="1.9" height="5.0" fill="#f2ec84"/><rect x="1067.2" y="287.8" width="3.6" height="2.2" fill="#f2ec84"/><rect x="1069.8" y="287.8" width="1.9" height="8.1" fill="#f2ec84"/><rect x="1071.3" y="284.8" width="1.9" height="5.0" fill="#ff0a0a"/><rect x="1071.9" y="284.8" width="3.6" height="2.2" fill="#f2ec84"/><rect x="1073.5" y="284.8" width="3.6" height="2.2" fill="#f2ec84"/><rect x="1075.1" y="284.8" width="3.6" height="2.2" fill="#f2ec84"/><rect x="1079.8" y="281.7" width="3.6" height="2.2" fill="#f2ec84"/><rect x="1081.4" y="281.7" width="3.6" height="2.2" fill="#f2ec84"/><rect x="1084.0" y="281.7" width="1.9" height="5.0" fill="#1284ff"/><rect x="1085.6" y="281.7" width="1.9" height="5.0" fill="#ff0a0a"/><rect x="1087.1" y="275.6" width="1.9" height="8.1" fill="#ff0a0a"/><rect x="1088.7" y="275.6" width="1.9" height="5.0" fill="#1284ff"/><rect x="1089.3" y="278.7" width="3.6" height="2.2" fill="#f2ec84"/><rect x="1090.9" y="278.7" width="3.6" height="2.2" fill="#f2ec84"/><rect x="1092.5" y="278.7" width="3.6" height="2.2" fill="#f2ec84"/><rect x="1096.6" y="275.6" width="1.9" height="5.0" fill="#1284ff"/><rect x="1099.8" y="278.7" width="1.9" height="5.0" fill="#ff0a0a"/><rect x="1101.4" y="275.6" width="1.9" height="8.1" fill="#1284ff"/><rect x="1102.9" y="275.6" width="1.9" height="11.1" fill="#1284ff"/><rect x="1107.7" y="281.7" width="1.9" height="8.1" fill="#f2ec84"/><rect x="1109.3" y="287.8" width="1.9" height="5.0" fill="#1284ff"/><rect x="1109.8" y="290.8" width="3.6" height="2.2" fill="#f2ec84"/><rect x="1115.6" y="287.8" width="1.9" height="5.0" fill="#ff0a0a"/><rect x="1116.2" y="287.8" width="3.6" height="2.2" fill="#f2ec84"/><rect x="1117.7" y="287.8" width="3.6" height="2.2" fill="#f2ec84"/><rect x="1120.3" y="281.7" width="1.9" height="8.1" fill="#ff0a0a"/><rect x="1121.9" y="281.7" width="1.9" height="8.1" fill="#1284ff"/><rect x="1123.5" y="284.8" width="1.9" height="5.0" fill="#f2ec84"/><rect x="1126.6" y="290.8" width="1.9" height="5.0" fill="#ff0a0a"/><rect x="1127.2" y="290.8" width="3.6" height="2.2" fill="#f2ec84"/><rect x="1129.8" y="287.8" width="1.9" height="8.1" fill="#1284ff"/><rect x="1130.4" y="293.9" width="3.6" height="2.2" fill="#f2ec84"/><rect x="1132.0" y="293.9" width="3.6" height="2.2" fill="#f2ec84"/><rect x="1134.5" y="293.9" width="1.9" height="5.0" fill="#f2ec84"/><rect x="1136.1" y="290.8" width="1.9" height="5.0" fill="#ff0a0a"/><rect x="1136.7" y="290.8" width="3.6" height="2.2" fill="#f2ec84"/><rect x="1138.3" y="290.8" width="3.6" height="2.2" fill="#f2ec84"/><rect x="1140.9" y="281.7" width="1.9" height="11.1" fill="#ff0a0a"/><rect x="1141.4" y="287.8" width="3.6" height="2.2" fill="#f2ec84"/><rect x="1145.6" y="269.6" width="1.9" height="17.2" fill="#ff0a0a"/><rect x="1147.2" y="254.4" width="1.9" height="17.2" fill="#ff0a0a"/><rect x="1148.8" y="254.4" width="1.9" height="8.1" fill="#1284ff"/><rect x="1150.3" y="260.4" width="1.9" height="5.0" fill="#1284ff"/><rect x="1151.9" y="263.5" width="1.9" height="8.1" fill="#1284ff"/><rect x="1153.5" y="263.5" width="1.9" height="11.1" fill="#1284ff"/><rect x="1155.1" y="269.6" width="1.9" height="5.0" fill="#ff0a0a"/><rect x="1158.2" y="260.4" width="1.9" height="8.1" fill="#ff0a0a"/><rect x="1159.8" y="257.4" width="1.9" height="5.0" fill="#ff0a0a"/><rect x="1161.4" y="257.4" width="1.9" height="5.0" fill="#1284ff"/><rect x="1163.0" y="254.4" width="1.9" height="8.1" fill="#f2ec84"/><rect x="1167.7" y="266.5" width="1.9" height="8.1" fill="#f2ec84"/><rect x="1169.3" y="266.5" width="1.9" height="8.1" fill="#1284ff"/><rect x="1170.9" y="266.5" width="1.9" height="5.0" fill="#ff0a0a"/><rect x="1172.5" y="266.5" width="1.9" height="5.0" fill="#1284ff"/><rect x="1174.6" y="266.5" width="3.6" height="2.2" fill="#f2ec84"/><rect x="1177.8" y="263.5" width="3.6" height="2.2" fill="#f2ec84"/><rect x="1179.4" y="263.5" width="3.6" height="2.2" fill="#f2ec84"/><rect x="1180.9" y="263.5" width="3.6" height="2.2" fill="#f2ec84"/><rect x="1183.5" y="263.5" width="1.9" height="5.0" fill="#1284ff"/><rect x="1185.1" y="266.5" width="1.9" height="5.0" fill="#1284ff"/><rect x="1185.7" y="269.6" width="3.6" height="2.2" fill="#f2ec84"/><rect x="1187.3" y="269.6" width="3.6" height="2.2" fill="#f2ec84"/><rect x="1191.4" y="269.6" width="1.9" height="5.0" fill="#1284ff"/><rect x="1192.0" y="272.6" width="3.6" height="2.2" fill="#f2ec84"/><rect x="1194.6" y="269.6" width="1.9" height="5.0" fill="#ff0a0a"/><rect x="1196.7" y="269.6" width="3.6" height="2.2" fill="#f2ec84"/><rect x="1199.3" y="263.5" width="1.9" height="8.1" fill="#ff0a0a"/><rect x="1200.9" y="263.5" width="1.9" height="8.1" fill="#1284ff"/><rect x="1202.5" y="266.5" width="1.9" height="5.0" fill="#ff0a0a"/><rect x="1203.1" y="266.5" width="3.6" height="2.2" fill="#f2ec84"/><rect x="1205.6" y="263.5" width="1.9" height="5.0" fill="#ff0a0a"/><rect x="1207.2" y="263.5" width="1.9" height="5.0" fill="#1284ff"/><rect x="1208.8" y="263.5" width="1.9" height="8.1" fill="#ff0a0a"/><rect x="1210.4" y="260.4" width="1.9" height="5.0" fill="#ff0a0a"/><rect x="1212.0" y="260.4" width="1.9" height="5.0" fill="#1284ff"/><rect x="1212.5" y="263.5" width="3.6" height="2.2" fill="#f2ec84"/><rect x="1215.1" y="260.4" width="1.9" height="5.0" fill="#ff0a0a"/><rect x="1215.7" y="260.4" width="3.6" height="2.2" fill="#f2ec84"/><rect x="1218.3" y="260.4" width="1.9" height="14.2" fill="#1284ff"/><rect x="1219.9" y="269.6" width="1.9" height="8.1" fill="#1284ff"/><rect x="1221.4" y="275.6" width="1.9" height="5.0" fill="#1284ff"/><rect x="1222.0" y="278.7" width="3.6" height="2.2" fill="#f2ec84"/><rect x="1226.2" y="281.7" width="1.9" height="5.0" fill="#1284ff"/><rect x="1228.3" y="284.8" width="3.6" height="2.2" fill="#f2ec84"/><rect x="1230.9" y="278.7" width="1.9" height="8.1" fill="#ff0a0a"/><rect x="1231.5" y="278.7" width="3.6" height="2.2" fill="#f2ec84"/><rect x="1234.1" y="272.6" width="1.9" height="8.1" fill="#ff0a0a"/><rect x="1234.7" y="272.6" width="3.6" height="2.2" fill="#f2ec84"/><rect x="1236.2" y="272.6" width="3.6" height="2.2" fill="#f2ec84"/><rect x="1238.8" y="272.6" width="1.9" height="5.0" fill="#1284ff"/><rect x="1242.0" y="278.7" width="1.9" height="5.0" fill="#1284ff"/><rect x="1242.6" y="281.7" width="3.6" height="2.2" fill="#f2ec84"/><rect x="1245.1" y="281.7" width="1.9" height="5.0" fill="#1284ff"/><rect x="1245.7" y="284.8" width="3.6" height="2.2" fill="#f2ec84"/><rect x="1247.3" y="284.8" width="3.6" height="2.2" fill="#f2ec84"/><rect x="1249.9" y="284.8" width="1.9" height="8.1" fill="#f2ec84"/><rect x="1251.5" y="281.7" width="1.9" height="5.0" fill="#ff0a0a"/><rect x="1255.2" y="281.7" width="3.6" height="2.2" fill="#f2ec84"/><rect x="1256.8" y="281.7" width="3.6" height="2.2" fill="#f2ec84"/><rect x="1258.4" y="281.7" width="3.6" height="2.2" fill="#f2ec84"/><rect x="1260.9" y="278.7" width="1.9" height="8.1" fill="#ff0a0a"/><rect x="1264.1" y="281.7" width="1.9" height="5.0" fill="#f2ec84"/><rect x="1265.7" y="278.7" width="1.9" height="8.1" fill="#ff0a0a"/><rect x="1267.3" y="278.7" width="1.9" height="8.1" fill="#1284ff"/><rect x="1270.4" y="287.8" width="1.9" height="5.0" fill="#1284ff"/><rect x="1272.0" y="290.8" width="1.9" height="8.1" fill="#1284ff"/><rect x="1273.6" y="293.9" width="1.9" height="5.0" fill="#ff0a0a"/><rect x="1276.7" y="290.8" width="1.9" height="5.0" fill="#ff0a0a"/><rect x="1278.3" y="290.8" width="1.9" height="5.0" fill="#1284ff"/><rect x="1282.1" y="293.9" width="3.6" height="2.2" fill="#f2ec84"/><rect x="1284.6" y="290.8" width="1.9" height="5.0" fill="#f2ec84"/><rect x="1286.2" y="290.8" width="1.9" height="5.0" fill="#ff0a0a"/><rect x="1289.4" y="281.7" width="1.9" height="11.1" fill="#ff0a0a"/><rect x="1291.0" y="287.8" width="1.9" height="5.0" fill="#1284ff"/><rect x="1291.5" y="290.8" width="3.6" height="2.2" fill="#f2ec84"/><rect x="1293.1" y="290.8" width="3.6" height="2.2" fill="#f2ec84"/><rect x="1294.7" y="290.8" width="3.6" height="2.2" fill="#f2ec84"/><rect x="1298.9" y="290.8" width="1.9" height="5.0" fill="#f2ec84"/><rect x="1300.4" y="287.8" width="1.9" height="5.0" fill="#ff0a0a"/><rect x="1301.0" y="287.8" width="3.6" height="2.2" fill="#f2ec84"/><rect x="1303.6" y="284.8" width="1.9" height="5.0" fill="#ff0a0a"/><rect x="1304.2" y="284.8" width="3.6" height="2.2" fill="#f2ec84"/><rect x="1307.3" y="281.7" width="3.6" height="2.2" fill="#f2ec84"/><rect x="1308.9" y="281.7" width="3.6" height="2.2" fill="#f2ec84"/><rect x="1311.5" y="281.7" width="1.9" height="5.0" fill="#1284ff"/><rect x="1312.1" y="284.8" width="3.6" height="2.2" fill="#f2ec84"/><rect x="1314.7" y="284.8" width="1.9" height="14.2" fill="#1284ff"/><rect x="1315.2" y="290.8" width="3.6" height="2.2" fill="#f2ec84"/><rect x="1316.8" y="290.8" width="3.6" height="2.2" fill="#f2ec84"/><rect x="1319.4" y="290.8" width="1.9" height="5.0" fill="#1284ff"/><rect x="1321.0" y="287.8" width="1.9" height="8.1" fill="#f2ec84"/><rect x="1322.6" y="293.9" width="1.9" height="5.0" fill="#1284ff"/><rect x="1324.1" y="296.9" width="1.9" height="5.0" fill="#1284ff"/><rect x="1325.7" y="300.0" width="1.9" height="5.0" fill="#1284ff"/><rect x="1327.9" y="303.0" width="3.6" height="2.2" fill="#f2ec84"/><rect x="1330.5" y="303.0" width="1.9" height="5.0" fill="#1284ff"/><rect x="1331.0" y="306.0" width="3.6" height="2.2" fill="#f2ec84"/><rect x="1333.6" y="306.0" width="1.9" height="5.0" fill="#1284ff"/><rect x="1334.2" y="309.1" width="3.6" height="2.2" fill="#f2ec84"/><rect x="1336.8" y="309.1" width="1.9" height="5.0" fill="#1284ff"/><rect x="1338.4" y="312.1" width="1.9" height="5.0" fill="#f2ec84"/><rect x="1338.9" y="312.1" width="3.6" height="2.2" fill="#f2ec84"/><rect x="1346.8" y="312.1" width="3.6" height="2.2" fill="#f2ec84"/><rect x="1349.4" y="309.1" width="1.9" height="5.0" fill="#ff0a0a"/><rect x="1350.0" y="309.1" width="3.6" height="2.2" fill="#f2ec84"/><rect x="1352.6" y="306.0" width="1.9" height="8.1" fill="#ff0a0a"/><rect x="1353.2" y="306.0" width="3.6" height="2.2" fill="#f2ec84"/><rect x="1354.7" y="306.0" width="3.6" height="2.2" fill="#f2ec84"/><rect x="1357.3" y="303.0" width="1.9" height="5.0" fill="#ff0a0a"/><rect x="1358.9" y="300.0" width="1.9" height="5.0" fill="#ff0a0a"/><rect x="1362.1" y="287.8" width="1.9" height="8.1" fill="#ff0a0a"/><rect x="1363.6" y="281.7" width="1.9" height="8.1" fill="#ff0a0a"/><rect x="1365.2" y="278.7" width="1.9" height="5.0" fill="#ff0a0a"/><rect x="1365.8" y="278.7" width="3.6" height="2.2" fill="#f2ec84"/><rect x="1367.4" y="278.7" width="3.6" height="2.2" fill="#f2ec84"/><rect x="1370.5" y="275.6" width="3.6" height="2.2" fill="#f2ec84"/><rect x="1373.1" y="272.6" width="1.9" height="5.0" fill="#ff0a0a"/><rect x="1374.7" y="269.6" width="1.9" height="5.0" fill="#ff0a0a"/><rect x="1377.9" y="269.6" width="1.9" height="8.1" fill="#ff0a0a"/><rect x="1378.4" y="269.6" width="3.6" height="2.2" fill="#f2ec84"/><rect x="1381.0" y="266.5" width="1.9" height="5.0" fill="#ff0a0a"/><rect x="1382.6" y="263.5" width="1.9" height="5.0" fill="#ff0a0a"/><rect x="1384.2" y="263.5" width="1.9" height="8.1" fill="#1284ff"/><rect x="1385.8" y="269.6" width="1.9" height="5.0" fill="#1284ff"/><rect x="1387.3" y="272.6" width="1.9" height="5.0" fill="#1284ff"/><rect x="1388.9" y="275.6" width="1.9" height="8.1" fill="#1284ff"/><rect x="1390.5" y="281.7" width="1.9" height="8.1" fill="#1284ff"/><rect x="1392.1" y="284.8" width="1.9" height="5.0" fill="#ff0a0a"/><rect x="1395.2" y="275.6" width="1.9" height="11.1" fill="#ff0a0a"/><rect x="1396.8" y="272.6" width="1.9" height="5.0" fill="#ff0a0a"/><rect x="1398.4" y="266.5" width="1.9" height="8.1" fill="#ff0a0a"/><rect x="1400.0" y="266.5" width="1.9" height="5.0" fill="#1284ff"/><rect x="1400.6" y="269.6" width="3.6" height="2.2" fill="#f2ec84"/><rect x="1403.1" y="263.5" width="1.9" height="8.1" fill="#ff0a0a"/><rect x="1403.7" y="263.5" width="3.6" height="2.2" fill="#f2ec84"/><rect x="1407.9" y="257.4" width="1.9" height="5.0" fill="#1284ff"/><rect x="1409.5" y="260.4" width="1.9" height="5.0" fill="#1284ff"/><rect x="1413.2" y="263.5" width="3.6" height="2.2" fill="#f2ec84"/><rect x="1414.8" y="263.5" width="3.6" height="2.2" fill="#f2ec84"/><rect x="1418.9" y="254.4" width="1.9" height="8.1" fill="#f2ec84"/><rect x="1421.1" y="257.4" width="3.6" height="2.2" fill="#f2ec84"/><rect x="1423.7" y="254.4" width="1.9" height="5.0" fill="#ff0a0a"/><rect x="1424.3" y="254.4" width="3.6" height="2.2" fill="#f2ec84"/><rect x="1426.8" y="251.3" width="1.9" height="5.0" fill="#ff0a0a"/><rect x="1427.4" y="251.3" width="3.6" height="2.2" fill="#f2ec84"/><rect x="1430.6" y="251.3" width="3.6" height="2.2" fill="#f2ec84"/><rect x="1432.2" y="251.3" width="3.6" height="2.2" fill="#f2ec84"/><rect x="1434.7" y="248.3" width="1.9" height="5.0" fill="#ff0a0a"/><rect x="1435.3" y="248.3" width="3.6" height="2.2" fill="#f2ec84"/><rect x="1437.9" y="248.3" width="1.9" height="5.0" fill="#f2ec84"/><rect x="1438.5" y="248.3" width="3.6" height="2.2" fill="#f2ec84"/><rect x="1441.1" y="245.2" width="1.9" height="5.0" fill="#ff0a0a"/><rect x="1444.2" y="245.2" width="1.9" height="5.0" fill="#ff0a0a"/><rect x="1445.8" y="242.2" width="1.9" height="5.0" fill="#ff0a0a"/><rect x="1446.4" y="242.2" width="3.6" height="2.2" fill="#f2ec84"/><rect x="1449.0" y="239.2" width="1.9" height="5.0" fill="#ff0a0a"/><rect x="1450.5" y="230.0" width="1.9" height="11.1" fill="#ff0a0a"/><rect x="1452.1" y="224.0" width="1.9" height="8.1" fill="#ff0a0a"/><rect x="1453.7" y="211.8" width="1.9" height="14.2" fill="#ff0a0a"/><rect x="1455.3" y="208.8" width="1.9" height="5.0" fill="#ff0a0a"/><rect x="1456.9" y="205.7" width="1.9" height="5.0" fill="#ff0a0a"/><rect x="1457.4" y="205.7" width="3.6" height="2.2" fill="#f2ec84"/><rect x="1460.0" y="202.7" width="1.9" height="5.0" fill="#ff0a0a"/><rect x="1461.6" y="199.6" width="1.9" height="5.0" fill="#f2ec84"/><rect x="1463.2" y="199.6" width="1.9" height="5.0" fill="#ff0a0a"/><rect x="1464.8" y="190.5" width="1.9" height="11.1" fill="#ff0a0a"/><rect x="1466.3" y="190.5" width="1.9" height="8.1" fill="#ff0a0a"/><rect x="1467.9" y="190.5" width="1.9" height="5.0" fill="#ff0a0a"/><rect x="1469.5" y="187.5" width="1.9" height="5.0" fill="#ff0a0a"/><rect x="1470.1" y="187.5" width="3.6" height="2.2" fill="#f2ec84"/><rect x="1474.2" y="181.4" width="1.9" height="5.0" fill="#ff0a0a"/><rect x="1475.8" y="178.4" width="1.9" height="5.0" fill="#ff0a0a"/><rect x="1477.4" y="175.3" width="1.9" height="5.0" fill="#ff0a0a"/><rect x="1478.0" y="175.3" width="3.6" height="2.2" fill="#f2ec84"/><rect x="1480.6" y="172.3" width="1.9" height="5.0" fill="#ff0a0a"/><rect x="1486.9" y="175.3" width="1.9" height="5.0" fill="#1284ff"/><rect x="1487.5" y="178.4" width="3.6" height="2.2" fill="#f2ec84"/><rect x="1489.0" y="178.4" width="3.6" height="2.2" fill="#f2ec84"/><rect x="1490.6" y="178.4" width="3.6" height="2.2" fill="#f2ec84"/><rect x="1493.2" y="178.4" width="1.9" height="5.0" fill="#1284ff"/><rect x="1494.8" y="181.4" width="1.9" height="8.1" fill="#1284ff"/><rect x="1495.4" y="187.5" width="3.6" height="2.2" fill="#f2ec84"/><rect x="1499.5" y="187.5" width="1.9" height="5.0" fill="#1284ff"/><rect x="1502.7" y="190.5" width="1.9" height="8.1" fill="#1284ff"/><rect x="1504.3" y="196.6" width="1.9" height="5.0" fill="#1284ff"/><rect x="1505.8" y="199.6" width="1.9" height="5.0" fill="#1284ff"/><rect x="1507.4" y="184.4" width="1.9" height="20.2" fill="#ff0a0a"/><rect x="1509.0" y="166.2" width="1.9" height="20.2" fill="#ff0a0a"/><rect x="1510.6" y="154.0" width="1.9" height="14.2" fill="#ff0a0a"/><rect x="1512.2" y="151.0" width="1.9" height="5.0" fill="#ff0a0a"/><rect x="1513.7" y="151.0" width="1.9" height="5.0" fill="#1284ff"/><rect x="1515.3" y="151.0" width="1.9" height="5.0" fill="#ff0a0a"/><rect x="1515.9" y="151.0" width="3.6" height="2.2" fill="#f2ec84"/><rect x="1517.5" y="151.0" width="3.6" height="2.2" fill="#f2ec84"/><rect x="1521.6" y="144.9" width="1.9" height="8.1" fill="#1284ff"/><rect x="1523.2" y="144.9" width="1.9" height="8.1" fill="#ff0a0a"/><rect x="1524.8" y="141.9" width="1.9" height="5.0" fill="#ff0a0a"/><rect x="1528.0" y="141.9" width="1.9" height="5.0" fill="#ff0a0a"/><rect x="1529.5" y="141.9" width="1.9" height="5.0" fill="#1284ff"/><rect x="1531.1" y="144.9" width="1.9" height="8.1" fill="#1284ff"/><rect x="1532.7" y="144.9" width="1.9" height="8.1" fill="#ff0a0a"/><rect x="1534.3" y="144.9" width="1.9" height="5.0" fill="#1284ff"/><rect x="1534.9" y="148.0" width="3.6" height="2.2" fill="#f2ec84"/><rect x="1537.4" y="148.0" width="1.9" height="8.1" fill="#1284ff"/><rect x="1539.0" y="151.0" width="1.9" height="8.1" fill="#ff0a0a"/><rect x="1539.6" y="151.0" width="3.6" height="2.2" fill="#f2ec84"/><rect x="1543.8" y="144.9" width="1.9" height="5.0" fill="#ff0a0a"/><rect x="1544.3" y="144.9" width="3.6" height="2.2" fill="#f2ec84"/><rect x="1546.9" y="138.8" width="1.9" height="8.1" fill="#ff0a0a"/><rect x="1547.5" y="138.8" width="3.6" height="2.2" fill="#f2ec84"/><rect x="1549.1" y="138.8" width="3.6" height="2.2" fill="#f2ec84"/><rect x="1551.7" y="132.8" width="1.9" height="8.1" fill="#ff0a0a"/><rect x="1553.2" y="129.7" width="1.9" height="5.0" fill="#ff0a0a"/><rect x="1554.8" y="123.6" width="1.9" height="8.1" fill="#ff0a0a"/><rect x="1555.4" y="123.6" width="3.6" height="2.2" fill="#f2ec84"/><rect x="1558.0" y="117.6" width="1.9" height="8.1" fill="#f2ec84"/><rect x="1558.6" y="123.6" width="3.6" height="2.2" fill="#f2ec84"/><rect x="1560.1" y="123.6" width="3.6" height="2.2" fill="#f2ec84"/><rect x="1565.9" y="132.8" width="1.9" height="5.0" fill="#1284ff"/><rect x="1567.5" y="135.8" width="1.9" height="8.1" fill="#1284ff"/><rect x="1570.6" y="138.8" width="1.9" height="5.0" fill="#ff0a0a"/><rect x="1571.2" y="138.8" width="3.6" height="2.2" fill="#f2ec84"/><rect x="1575.4" y="138.8" width="1.9" height="5.0" fill="#f2ec84"/><rect x="1575.9" y="138.8" width="3.6" height="2.2" fill="#f2ec84"/><rect x="1579.1" y="135.8" width="3.6" height="2.2" fill="#f2ec84"/><rect x="1581.7" y="132.8" width="1.9" height="5.0" fill="#ff0a0a"/><rect x="1582.3" y="132.8" width="3.6" height="2.2" fill="#f2ec84"/><rect x="1583.8" y="132.8" width="3.6" height="2.2" fill="#f2ec84"/><rect x="1587.0" y="126.7" width="3.6" height="2.2" fill="#f2ec84"/><rect x="1589.6" y="123.6" width="1.9" height="5.0" fill="#ff0a0a"/><rect x="1595.9" y="129.7" width="1.9" height="8.1" fill="#f2ec84"/><rect x="1597.5" y="135.8" width="1.9" height="5.0" fill="#1284ff"/><rect x="1599.1" y="138.8" width="1.9" height="5.0" fill="#1284ff"/><rect x="1600.6" y="138.8" width="1.9" height="5.0" fill="#ff0a0a"/><rect x="1601.2" y="138.8" width="3.6" height="2.2" fill="#f2ec84"/><rect x="1602.8" y="138.8" width="3.6" height="2.2" fill="#f2ec84"/><rect x="1604.4" y="138.8" width="3.6" height="2.2" fill="#f2ec84"/><rect x="1608.5" y="141.9" width="1.9" height="11.1" fill="#ff0a0a"/><rect x="1609.1" y="141.9" width="3.6" height="2.2" fill="#f2ec84"/><rect x="1610.7" y="141.9" width="3.6" height="2.2" fill="#f2ec84"/><rect x="1612.3" y="141.9" width="3.6" height="2.2" fill="#f2ec84"/><rect x="1613.9" y="141.9" width="3.6" height="2.2" fill="#f2ec84"/><rect x="1615.4" y="141.9" width="3.6" height="2.2" fill="#f2ec84"/><rect x="1618.0" y="138.8" width="1.9" height="5.0" fill="#f2ec84"/><rect x="1618.6" y="141.9" width="3.6" height="2.2" fill="#f2ec84"/><rect x="1620.2" y="141.9" width="3.6" height="2.2" fill="#f2ec84"/><rect x="1621.8" y="141.9" width="3.6" height="2.2" fill="#f2ec84"/><rect x="1625.9" y="141.9" width="1.9" height="5.0" fill="#1284ff"/><rect x="1627.5" y="141.9" width="1.9" height="5.0" fill="#ff0a0a"/><rect x="1628.1" y="141.9" width="3.6" height="2.2" fill="#f2ec84"/><rect x="1630.7" y="138.8" width="1.9" height="5.0" fill="#ff0a0a"/><rect x="1632.2" y="132.8" width="1.9" height="8.1" fill="#f2ec84"/><rect x="1632.8" y="138.8" width="3.6" height="2.2" fill="#f2ec84"/><rect x="1637.0" y="129.7" width="1.9" height="8.1" fill="#ff0a0a"/><rect x="1638.6" y="126.7" width="1.9" height="8.1" fill="#ff0a0a"/><rect x="1640.7" y="126.7" width="3.6" height="2.2" fill="#f2ec84"/><rect x="1644.9" y="120.6" width="1.9" height="8.1" fill="#f2ec84"/><rect x="1646.5" y="126.7" width="1.9" height="5.0" fill="#1284ff"/><rect x="1648.0" y="126.7" width="1.9" height="5.0" fill="#ff0a0a"/><rect x="1649.6" y="120.6" width="1.9" height="8.1" fill="#ff0a0a"/><rect x="1650.2" y="123.6" width="3.6" height="2.2" fill="#f2ec84"/><rect x="1651.8" y="123.6" width="3.6" height="2.2" fill="#f2ec84"/><rect x="1654.4" y="123.6" width="1.9" height="5.0" fill="#1284ff"/><rect x="1657.5" y="126.7" width="1.9" height="5.0" fill="#1284ff"/><rect x="1659.7" y="126.7" width="3.6" height="2.2" fill="#f2ec84"/><rect x="1662.3" y="120.6" width="1.9" height="8.1" fill="#f2ec84"/><rect x="1663.8" y="120.6" width="1.9" height="8.1" fill="#f2ec84"/><rect x="1664.4" y="126.7" width="3.6" height="2.2" fill="#f2ec84"/><rect x="1666.0" y="126.7" width="3.6" height="2.2" fill="#f2ec84"/><rect x="1668.6" y="123.6" width="1.9" height="5.0" fill="#ff0a0a"/><rect x="1669.2" y="123.6" width="3.6" height="2.2" fill="#f2ec84"/><rect x="1671.7" y="123.6" width="1.9" height="8.1" fill="#f2ec84"/><rect x="1672.3" y="123.6" width="3.6" height="2.2" fill="#f2ec84"/><rect x="1674.9" y="123.6" width="1.9" height="5.0" fill="#1284ff"/><rect x="1677.1" y="123.6" width="3.6" height="2.2" fill="#f2ec84"/><rect x="1678.6" y="123.6" width="3.6" height="2.2" fill="#f2ec84"/><rect x="1680.2" y="123.6" width="3.6" height="2.2" fill="#f2ec84"/><rect x="1684.4" y="114.5" width="1.9" height="14.2" fill="#1284ff"/><rect x="1686.0" y="126.7" width="1.9" height="5.0" fill="#1284ff"/><rect x="1687.5" y="129.7" width="1.9" height="5.0" fill="#1284ff"/><rect x="1689.1" y="129.7" width="1.9" height="5.0" fill="#f2ec84"/><rect x="1689.7" y="132.8" width="3.6" height="2.2" fill="#f2ec84"/><rect x="1691.3" y="132.8" width="3.6" height="2.2" fill="#f2ec84"/><rect x="1693.9" y="129.7" width="1.9" height="11.1" fill="#ff0a0a"/><rect x="1694.4" y="129.7" width="3.6" height="2.2" fill="#f2ec84"/><rect x="1697.6" y="126.7" width="3.6" height="2.2" fill="#f2ec84"/><rect x="1700.2" y="126.7" width="1.9" height="5.0" fill="#f2ec84"/><rect x="1701.8" y="123.6" width="1.9" height="5.0" fill="#ff0a0a"/><rect x="1706.5" y="114.5" width="1.9" height="8.1" fill="#f2ec84"/><rect x="1708.1" y="117.6" width="1.9" height="5.0" fill="#ff0a0a"/><rect x="1708.7" y="117.6" width="3.6" height="2.2" fill="#f2ec84"/><rect x="1710.2" y="117.6" width="3.6" height="2.2" fill="#f2ec84"/><rect x="1712.8" y="114.5" width="1.9" height="5.0" fill="#ff0a0a"/><rect x="1714.4" y="114.5" width="1.9" height="5.0" fill="#1284ff"/><rect x="1716.0" y="108.4" width="1.9" height="11.1" fill="#ff0a0a"/><rect x="1717.6" y="93.2" width="1.9" height="17.2" fill="#ff0a0a"/><rect x="1719.1" y="96.3" width="1.9" height="5.0" fill="#ff0a0a"/><rect x="1720.7" y="96.3" width="1.9" height="5.0" fill="#1284ff"/><rect x="1722.3" y="96.3" width="1.9" height="5.0" fill="#ff0a0a"/><rect x="1722.9" y="96.3" width="3.6" height="2.2" fill="#f2ec84"/><rect x="1724.5" y="96.3" width="3.6" height="2.2" fill="#f2ec84"/><rect x="1730.2" y="96.3" width="1.9" height="5.0" fill="#ff0a0a"/><rect x="1734.9" y="102.4" width="1.9" height="8.1" fill="#1284ff"/><rect x="1736.5" y="105.4" width="1.9" height="5.0" fill="#ff0a0a"/><rect x="1737.1" y="105.4" width="3.6" height="2.2" fill="#f2ec84"/><rect x="1741.3" y="105.4" width="1.9" height="5.0" fill="#ff0a0a"/><rect x="1742.8" y="96.3" width="1.9" height="11.1" fill="#ff0a0a"/><rect x="1744.4" y="102.4" width="1.9" height="5.0" fill="#1284ff"/><rect x="1745.0" y="105.4" width="3.6" height="2.2" fill="#f2ec84"/><rect x="1746.6" y="105.4" width="3.6" height="2.2" fill="#f2ec84"/><rect x="1748.2" y="105.4" width="3.6" height="2.2" fill="#f2ec84"/><rect x="1751.3" y="105.4" width="3.6" height="2.2" fill="#f2ec84"/><rect x="1752.9" y="105.4" width="3.6" height="2.2" fill="#f2ec84"/><rect x="1754.5" y="105.4" width="3.6" height="2.2" fill="#f2ec84"/><rect x="1756.1" y="105.4" width="3.6" height="2.2" fill="#f2ec84"/><rect x="1757.6" y="105.4" width="3.6" height="2.2" fill="#f2ec84"/><rect x="1759.2" y="105.4" width="3.6" height="2.2" fill="#f2ec84"/><rect x="1762.4" y="105.4" width="3.6" height="2.2" fill="#f2ec84"/><rect x="1765.0" y="105.4" width="1.9" height="5.0" fill="#1284ff"/><rect x="1765.5" y="108.4" width="3.6" height="2.2" fill="#f2ec84"/><rect x="1767.1" y="108.4" width="3.6" height="2.2" fill="#f2ec84"/><rect x="1769.7" y="108.4" width="1.9" height="5.0" fill="#1284ff"/><rect x="1770.3" y="111.5" width="3.6" height="2.2" fill="#f2ec84"/><rect x="1773.4" y="114.5" width="3.6" height="2.2" fill="#f2ec84"/><rect x="1776.6" y="117.6" width="3.6" height="2.2" fill="#f2ec84"/><rect x="1779.2" y="114.5" width="1.9" height="11.1" fill="#1284ff"/><rect x="1780.8" y="117.6" width="1.9" height="8.1" fill="#ff0a0a"/><rect x="1781.3" y="117.6" width="3.6" height="2.2" fill="#f2ec84"/><rect x="1783.9" y="114.5" width="1.9" height="5.0" fill="#ff0a0a"/><rect x="1784.5" y="114.5" width="3.6" height="2.2" fill="#f2ec84"/><rect x="1786.1" y="114.5" width="3.6" height="2.2" fill="#f2ec84"/><rect x="1788.7" y="114.5" width="1.9" height="5.0" fill="#1284ff"/><rect x="1789.2" y="117.6" width="3.6" height="2.2" fill="#f2ec84"/><rect x="1791.8" y="114.5" width="1.9" height="8.1" fill="#1284ff"/><rect x="1792.4" y="120.6" width="3.6" height="2.2" fill="#f2ec84"/><rect x="1795.0" y="120.6" width="1.9" height="8.1" fill="#1284ff"/><rect x="1795.6" y="123.6" width="3.6" height="2.2" fill="#f2ec84"/><rect x="1797.1" y="123.6" width="3.6" height="2.2" fill="#f2ec84"/><rect x="1800.3" y="123.6" width="3.6" height="2.2" fill="#f2ec84"/><rect x="1806.0" y="123.6" width="1.9" height="5.0" fill="#1284ff"/><rect x="1809.2" y="126.7" width="1.9" height="5.0" fill="#ff0a0a"/><rect x="1809.8" y="126.7" width="3.6" height="2.2" fill="#f2ec84"/><rect x="1812.9" y="126.7" width="3.6" height="2.2" fill="#f2ec84"/><rect x="1815.5" y="123.6" width="1.9" height="5.0" fill="#ff0a0a"/><rect x="1819.3" y="126.7" width="3.6" height="2.2" fill="#f2ec84"/><rect x="1820.8" y="126.7" width="3.6" height="2.2" fill="#f2ec84"/><rect x="1824.0" y="126.7" width="3.6" height="2.2" fill="#f2ec84"/><rect x="1825.6" y="126.7" width="3.6" height="2.2" fill="#f2ec84"/><rect x="1828.2" y="126.7" width="1.9" height="5.0" fill="#f2ec84"/><rect x="1831.3" y="123.6" width="1.9" height="5.0" fill="#ff0a0a"/><rect x="1832.9" y="123.6" width="1.9" height="5.0" fill="#1284ff"/><rect x="1833.5" y="126.7" width="3.6" height="2.2" fill="#f2ec84"/><rect x="1835.1" y="126.7" width="3.6" height="2.2" fill="#f2ec84"/><rect x="1836.6" y="126.7" width="3.6" height="2.2" fill="#f2ec84"/><rect x="1838.2" y="126.7" width="3.6" height="2.2" fill="#f2ec84"/><rect x="1842.4" y="123.6" width="1.9" height="5.0" fill="#ff0a0a"/><rect x="1844.0" y="123.6" width="1.9" height="8.1" fill="#1284ff"/><rect x="1845.5" y="120.6" width="1.9" height="11.1" fill="#ff0a0a"/><rect x="1848.7" y="123.6" width="1.9" height="5.0" fill="#1284ff"/><rect x="1849.3" y="126.7" width="3.6" height="2.2" fill="#f2ec84"/><rect x="1850.9" y="126.7" width="3.6" height="2.2" fill="#f2ec84"/><rect x="1854.0" y="126.7" width="3.6" height="2.2" fill="#f2ec84"/><rect x="1856.6" y="123.6" width="1.9" height="5.0" fill="#ff0a0a"/><rect x="1858.2" y="123.6" width="1.9" height="5.0" fill="#1284ff"/><rect x="1860.3" y="126.7" width="3.6" height="2.2" fill="#f2ec84"/><rect x="1861.9" y="126.7" width="3.6" height="2.2" fill="#f2ec84"/><rect x="1865.1" y="129.7" width="3.6" height="2.2" fill="#f2ec84"/><rect x="1866.7" y="129.7" width="3.6" height="2.2" fill="#f2ec84"/><rect x="1868.2" y="129.7" width="3.6" height="2.2" fill="#f2ec84"/><rect x="1870.8" y="129.7" width="1.9" height="5.0" fill="#1284ff"/><rect x="1871.4" y="132.8" width="3.6" height="2.2" fill="#f2ec84"/><rect x="1873.0" y="132.8" width="3.6" height="2.2" fill="#f2ec84"/><rect x="1874.6" y="132.8" width="3.6" height="2.2" fill="#f2ec84"/><rect x="1876.1" y="132.8" width="3.6" height="2.2" fill="#f2ec84"/><rect x="1877.7" y="132.8" width="3.6" height="2.2" fill="#f2ec84"/><rect x="1879.3" y="132.8" width="3.6" height="2.2" fill="#f2ec84"/><rect x="1880.9" y="132.8" width="3.6" height="2.2" fill="#f2ec84"/><rect x="1885.6" y="132.8" width="3.6" height="2.2" fill="#f2ec84"/><rect x="1889.8" y="123.6" width="1.9" height="11.1" fill="#ff0a0a"/><rect x="1891.4" y="129.7" width="1.9" height="8.1" fill="#1284ff"/><rect x="1892.9" y="126.7" width="1.9" height="11.1" fill="#ff0a0a"/><rect x="1893.5" y="129.7" width="3.6" height="2.2" fill="#f2ec84"/><rect x="1896.7" y="129.7" width="3.6" height="2.2" fill="#f2ec84"/><rect x="1898.3" y="129.7" width="3.6" height="2.2" fill="#f2ec84"/><rect x="16.8" y="487.9" width="2.2" height="13.2" fill="#ff0a0a"/><rect x="18.3" y="487.9" width="2.2" height="7.6" fill="#1284ff"/><rect x="22.1" y="487.9" width="3.6" height="2.2" fill="#f2ec84"/><rect x="23.7" y="487.9" width="3.6" height="2.2" fill="#f2ec84"/><rect x="25.2" y="487.9" width="3.6" height="2.2" fill="#f2ec84"/><rect x="26.8" y="487.9" width="3.6" height="2.2" fill="#f2ec84"/><rect x="30.0" y="476.7" width="3.6" height="2.2" fill="#f2ec84"/><rect x="36.3" y="471.1" width="3.6" height="2.2" fill="#f2ec84"/><rect x="38.9" y="471.1" width="2.2" height="7.6" fill="#1284ff"/><rect x="40.5" y="471.1" width="2.2" height="7.6" fill="#ff0a0a"/><rect x="42.0" y="471.1" width="2.2" height="13.2" fill="#1284ff"/><rect x="43.6" y="476.7" width="2.2" height="7.6" fill="#ff0a0a"/><rect x="45.8" y="482.3" width="3.6" height="2.2" fill="#f2ec84"/><rect x="47.4" y="482.3" width="3.6" height="2.2" fill="#f2ec84"/><rect x="54.7" y="471.1" width="2.2" height="13.2" fill="#f2ec84"/><rect x="55.3" y="482.3" width="3.6" height="2.2" fill="#f2ec84"/><rect x="56.8" y="482.3" width="3.6" height="2.2" fill="#f2ec84"/><rect x="59.4" y="476.7" width="2.2" height="7.6" fill="#ff0a0a"/><rect x="61.6" y="476.7" width="3.6" height="2.2" fill="#f2ec84"/><rect x="66.3" y="476.7" width="3.6" height="2.2" fill="#f2ec84"/><rect x="67.9" y="476.7" width="3.6" height="2.2" fill="#f2ec84"/><rect x="72.1" y="476.7" width="2.2" height="7.6" fill="#1284ff"/><rect x="72.6" y="482.3" width="3.6" height="2.2" fill="#f2ec84"/><rect x="76.8" y="482.3" width="2.2" height="7.6" fill="#1284ff"/><rect x="78.4" y="482.3" width="2.2" height="7.6" fill="#ff0a0a"/><rect x="80.5" y="482.3" width="3.6" height="2.2" fill="#f2ec84"/><rect x="83.7" y="482.3" width="3.6" height="2.2" fill="#f2ec84"/><rect x="89.4" y="476.7" width="2.2" height="18.9" fill="#1284ff"/><rect x="94.2" y="482.3" width="2.2" height="7.6" fill="#ff0a0a"/><rect x="96.3" y="482.3" width="3.6" height="2.2" fill="#f2ec84"/><rect x="98.9" y="476.7" width="2.2" height="7.6" fill="#ff0a0a"/><rect x="101.1" y="487.9" width="3.6" height="2.2" fill="#f2ec84"/><rect x="110.6" y="487.9" width="3.6" height="2.2" fill="#f2ec84"/><rect x="113.1" y="482.3" width="2.2" height="7.6" fill="#ff0a0a"/><rect x="113.7" y="482.3" width="3.6" height="2.2" fill="#f2ec84"/><rect x="118.5" y="482.3" width="3.6" height="2.2" fill="#f2ec84"/><rect x="120.0" y="482.3" width="3.6" height="2.2" fill="#f2ec84"/><rect x="127.4" y="482.3" width="2.2" height="7.6" fill="#ff0a0a"/><rect x="134.3" y="482.3" width="3.6" height="2.2" fill="#f2ec84"/><rect x="136.8" y="476.7" width="2.2" height="7.6" fill="#ff0a0a"/><rect x="143.2" y="471.1" width="2.2" height="7.6" fill="#1284ff"/><rect x="145.3" y="476.7" width="3.6" height="2.2" fill="#f2ec84"/><rect x="151.1" y="471.1" width="2.2" height="7.6" fill="#ff0a0a"/><rect x="155.8" y="476.7" width="2.2" height="13.2" fill="#f2ec84"/><rect x="156.4" y="476.7" width="3.6" height="2.2" fill="#f2ec84"/><rect x="158.0" y="476.7" width="3.6" height="2.2" fill="#f2ec84"/><rect x="160.5" y="471.1" width="2.2" height="7.6" fill="#ff0a0a"/><rect x="162.1" y="471.1" width="2.2" height="13.2" fill="#f2ec84"/><rect x="162.7" y="471.1" width="3.6" height="2.2" fill="#f2ec84"/><rect x="165.9" y="471.1" width="3.6" height="2.2" fill="#f2ec84"/><rect x="167.4" y="471.1" width="3.6" height="2.2" fill="#f2ec84"/><rect x="171.6" y="471.1" width="2.2" height="7.6" fill="#1284ff"/><rect x="173.2" y="471.1" width="2.2" height="7.6" fill="#ff0a0a"/><rect x="176.9" y="482.3" width="3.6" height="2.2" fill="#f2ec84"/><rect x="183.2" y="487.9" width="3.6" height="2.2" fill="#f2ec84"/><rect x="187.4" y="476.7" width="2.2" height="7.6" fill="#ff0a0a"/><rect x="188.0" y="476.7" width="3.6" height="2.2" fill="#f2ec84"/><rect x="192.1" y="471.1" width="2.2" height="7.6" fill="#f2ec84"/><rect x="194.3" y="476.7" width="3.6" height="2.2" fill="#f2ec84"/><rect x="195.9" y="476.7" width="3.6" height="2.2" fill="#f2ec84"/><rect x="197.5" y="476.7" width="3.6" height="2.2" fill="#f2ec84"/><rect x="200.0" y="476.7" width="2.2" height="7.6" fill="#1284ff"/><rect x="202.2" y="476.7" width="3.6" height="2.2" fill="#f2ec84"/><rect x="204.8" y="476.7" width="2.2" height="7.6" fill="#1284ff"/><rect x="205.4" y="482.3" width="3.6" height="2.2" fill="#f2ec84"/><rect x="209.5" y="476.7" width="2.2" height="7.6" fill="#f2ec84"/><rect x="210.1" y="482.3" width="3.6" height="2.2" fill="#f2ec84"/><rect x="214.8" y="487.9" width="3.6" height="2.2" fill="#f2ec84"/><rect x="217.4" y="482.3" width="2.2" height="7.6" fill="#ff0a0a"/><rect x="219.0" y="482.3" width="2.2" height="13.2" fill="#1284ff"/><rect x="221.2" y="493.6" width="3.6" height="2.2" fill="#f2ec84"/><rect x="225.9" y="499.2" width="3.6" height="2.2" fill="#f2ec84"/><rect x="227.5" y="499.2" width="3.6" height="2.2" fill="#f2ec84"/><rect x="230.6" y="493.6" width="3.6" height="2.2" fill="#f2ec84"/><rect x="232.2" y="493.6" width="3.6" height="2.2" fill="#f2ec84"/><rect x="233.8" y="493.6" width="3.6" height="2.2" fill="#f2ec84"/><rect x="236.4" y="487.9" width="2.2" height="7.6" fill="#ff0a0a"/><rect x="238.0" y="482.3" width="2.2" height="7.6" fill="#ff0a0a"/><rect x="238.5" y="482.3" width="3.6" height="2.2" fill="#f2ec84"/><rect x="240.1" y="482.3" width="3.6" height="2.2" fill="#f2ec84"/><rect x="241.7" y="482.3" width="3.6" height="2.2" fill="#f2ec84"/><rect x="249.0" y="482.3" width="2.2" height="13.2" fill="#f2ec84"/><rect x="251.2" y="482.3" width="3.6" height="2.2" fill="#f2ec84"/><rect x="253.8" y="476.7" width="2.2" height="7.6" fill="#f2ec84"/><rect x="254.3" y="482.3" width="3.6" height="2.2" fill="#f2ec84"/><rect x="255.9" y="482.3" width="3.6" height="2.2" fill="#f2ec84"/><rect x="258.5" y="471.1" width="2.2" height="13.2" fill="#f2ec84"/><rect x="262.2" y="476.7" width="3.6" height="2.2" fill="#f2ec84"/><rect x="266.4" y="476.7" width="2.2" height="7.6" fill="#1284ff"/><rect x="268.6" y="476.7" width="3.6" height="2.2" fill="#f2ec84"/><rect x="271.7" y="482.3" width="3.6" height="2.2" fill="#f2ec84"/><rect x="273.3" y="482.3" width="3.6" height="2.2" fill="#f2ec84"/><rect x="277.5" y="476.7" width="2.2" height="7.6" fill="#1284ff"/><rect x="279.6" y="482.3" width="3.6" height="2.2" fill="#f2ec84"/><rect x="281.2" y="482.3" width="3.6" height="2.2" fill="#f2ec84"/><rect x="285.9" y="482.3" width="3.6" height="2.2" fill="#f2ec84"/><rect x="291.7" y="482.3" width="2.2" height="7.6" fill="#ff0a0a"/><rect x="292.3" y="482.3" width="3.6" height="2.2" fill="#f2ec84"/><rect x="293.8" y="482.3" width="3.6" height="2.2" fill="#f2ec84"/><rect x="295.4" y="482.3" width="3.6" height="2.2" fill="#f2ec84"/><rect x="298.0" y="482.3" width="2.2" height="7.6" fill="#1284ff"/><rect x="299.6" y="487.9" width="2.2" height="7.6" fill="#1284ff"/><rect x="305.9" y="499.2" width="2.2" height="7.6" fill="#1284ff"/><rect x="307.5" y="499.2" width="2.2" height="7.6" fill="#ff0a0a"/><rect x="312.2" y="493.6" width="2.2" height="7.6" fill="#1284ff"/><rect x="313.8" y="493.6" width="2.2" height="7.6" fill="#ff0a0a"/><rect x="321.7" y="487.9" width="2.2" height="7.6" fill="#f2ec84"/><rect x="323.3" y="482.3" width="2.2" height="13.2" fill="#ff0a0a"/><rect x="331.8" y="493.6" width="3.6" height="2.2" fill="#f2ec84"/><rect x="333.3" y="493.6" width="3.6" height="2.2" fill="#f2ec84"/><rect x="336.5" y="487.9" width="3.6" height="2.2" fill="#f2ec84"/><rect x="341.2" y="487.9" width="3.6" height="2.2" fill="#f2ec84"/><rect x="343.8" y="482.3" width="2.2" height="7.6" fill="#ff0a0a"/><rect x="346.0" y="482.3" width="3.6" height="2.2" fill="#f2ec84"/><rect x="347.6" y="482.3" width="3.6" height="2.2" fill="#f2ec84"/><rect x="350.1" y="471.1" width="2.2" height="13.2" fill="#f2ec84"/><rect x="350.7" y="482.3" width="3.6" height="2.2" fill="#f2ec84"/><rect x="352.3" y="482.3" width="3.6" height="2.2" fill="#f2ec84"/><rect x="354.9" y="471.1" width="2.2" height="18.9" fill="#1284ff"/><rect x="357.0" y="482.3" width="3.6" height="2.2" fill="#f2ec84"/><rect x="358.6" y="482.3" width="3.6" height="2.2" fill="#f2ec84"/><rect x="360.2" y="482.3" width="3.6" height="2.2" fill="#f2ec84"/><rect x="364.4" y="471.1" width="2.2" height="13.2" fill="#ff0a0a"/><rect x="365.9" y="471.1" width="2.2" height="13.2" fill="#1284ff"/><rect x="368.1" y="476.7" width="3.6" height="2.2" fill="#f2ec84"/><rect x="375.4" y="471.1" width="2.2" height="7.6" fill="#ff0a0a"/><rect x="377.0" y="471.1" width="2.2" height="7.6" fill="#1284ff"/><rect x="378.6" y="476.7" width="2.2" height="7.6" fill="#1284ff"/><rect x="380.7" y="476.7" width="3.6" height="2.2" fill="#f2ec84"/><rect x="386.5" y="476.7" width="2.2" height="7.6" fill="#1284ff"/><rect x="395.0" y="476.7" width="3.6" height="2.2" fill="#f2ec84"/><rect x="402.3" y="476.7" width="2.2" height="7.6" fill="#1284ff"/><rect x="406.0" y="482.3" width="3.6" height="2.2" fill="#f2ec84"/><rect x="415.5" y="482.3" width="3.6" height="2.2" fill="#f2ec84"/><rect x="419.7" y="476.7" width="2.2" height="13.2" fill="#1284ff"/><rect x="424.4" y="487.9" width="2.2" height="7.6" fill="#f2ec84"/><rect x="428.1" y="487.9" width="3.6" height="2.2" fill="#f2ec84"/><rect x="440.8" y="493.6" width="3.6" height="2.2" fill="#f2ec84"/><rect x="443.4" y="493.6" width="2.2" height="7.6" fill="#1284ff"/><rect x="445.5" y="499.2" width="3.6" height="2.2" fill="#f2ec84"/><rect x="448.1" y="499.2" width="2.2" height="7.6" fill="#1284ff"/><rect x="452.8" y="504.8" width="2.2" height="7.6" fill="#1284ff"/><rect x="453.4" y="510.4" width="3.6" height="2.2" fill="#f2ec84"/><rect x="455.0" y="510.4" width="3.6" height="2.2" fill="#f2ec84"/><rect x="457.6" y="510.4" width="2.2" height="13.2" fill="#1284ff"/><rect x="459.7" y="516.0" width="3.6" height="2.2" fill="#f2ec84"/><rect x="465.5" y="516.0" width="2.2" height="7.6" fill="#1284ff"/><rect x="466.1" y="521.7" width="3.6" height="2.2" fill="#f2ec84"/><rect x="467.6" y="521.7" width="3.6" height="2.2" fill="#f2ec84"/><rect x="470.8" y="521.7" width="3.6" height="2.2" fill="#f2ec84"/><rect x="473.4" y="521.7" width="2.2" height="13.2" fill="#1284ff"/><rect x="476.5" y="527.3" width="2.2" height="7.6" fill="#ff0a0a"/><rect x="478.1" y="527.3" width="2.2" height="7.6" fill="#1284ff"/><rect x="484.4" y="521.7" width="2.2" height="13.2" fill="#1284ff"/><rect x="486.6" y="532.9" width="3.6" height="2.2" fill="#f2ec84"/><rect x="495.5" y="538.5" width="2.2" height="7.6" fill="#1284ff"/><rect x="498.7" y="532.9" width="2.2" height="7.6" fill="#1284ff"/><rect x="499.2" y="538.5" width="3.6" height="2.2" fill="#f2ec84"/><rect x="500.8" y="538.5" width="3.6" height="2.2" fill="#f2ec84"/><rect x="505.6" y="538.5" width="3.6" height="2.2" fill="#f2ec84"/><rect x="507.1" y="538.5" width="3.6" height="2.2" fill="#f2ec84"/><rect x="518.2" y="532.9" width="3.6" height="2.2" fill="#f2ec84"/><rect x="524.5" y="532.9" width="3.6" height="2.2" fill="#f2ec84"/><rect x="527.1" y="527.3" width="2.2" height="7.6" fill="#f2ec84"/><rect x="527.7" y="532.9" width="3.6" height="2.2" fill="#f2ec84"/><rect x="529.3" y="532.9" width="3.6" height="2.2" fill="#f2ec84"/><rect x="533.4" y="527.3" width="2.2" height="7.6" fill="#ff0a0a"/><rect x="535.0" y="527.3" width="2.2" height="7.6" fill="#1284ff"/><rect x="538.2" y="516.0" width="2.2" height="18.9" fill="#1284ff"/><rect x="542.9" y="527.3" width="2.2" height="7.6" fill="#f2ec84"/><rect x="543.5" y="532.9" width="3.6" height="2.2" fill="#f2ec84"/><rect x="546.6" y="538.5" width="3.6" height="2.2" fill="#f2ec84"/><rect x="549.2" y="532.9" width="2.2" height="7.6" fill="#ff0a0a"/><rect x="550.8" y="532.9" width="2.2" height="7.6" fill="#1284ff"/><rect x="551.4" y="538.5" width="3.6" height="2.2" fill="#f2ec84"/><rect x="553.0" y="538.5" width="3.6" height="2.2" fill="#f2ec84"/><rect x="560.3" y="538.5" width="2.2" height="7.6" fill="#1284ff"/><rect x="561.9" y="538.5" width="2.2" height="7.6" fill="#ff0a0a"/><rect x="563.4" y="538.5" width="2.2" height="13.2" fill="#f2ec84"/><rect x="568.8" y="532.9" width="3.6" height="2.2" fill="#f2ec84"/><rect x="570.3" y="532.9" width="3.6" height="2.2" fill="#f2ec84"/><rect x="571.9" y="532.9" width="3.6" height="2.2" fill="#f2ec84"/><rect x="584.0" y="521.7" width="2.2" height="13.2" fill="#ff0a0a"/><rect x="586.1" y="527.3" width="3.6" height="2.2" fill="#f2ec84"/><rect x="589.3" y="527.3" width="3.6" height="2.2" fill="#f2ec84"/><rect x="597.2" y="516.0" width="3.6" height="2.2" fill="#f2ec84"/><rect x="600.4" y="516.0" width="3.6" height="2.2" fill="#f2ec84"/><rect x="601.9" y="516.0" width="3.6" height="2.2" fill="#f2ec84"/><rect x="608.3" y="521.7" width="3.6" height="2.2" fill="#f2ec84"/><rect x="609.8" y="521.7" width="3.6" height="2.2" fill="#f2ec84"/><rect x="611.4" y="521.7" width="3.6" height="2.2" fill="#f2ec84"/><rect x="613.0" y="521.7" width="3.6" height="2.2" fill="#f2ec84"/><rect x="619.3" y="527.3" width="3.6" height="2.2" fill="#f2ec84"/><rect x="620.9" y="527.3" width="3.6" height="2.2" fill="#f2ec84"/><rect x="622.5" y="527.3" width="3.6" height="2.2" fill="#f2ec84"/><rect x="625.1" y="521.7" width="2.2" height="7.6" fill="#ff0a0a"/><rect x="626.6" y="521.7" width="2.2" height="13.2" fill="#1284ff"/><rect x="628.2" y="527.3" width="2.2" height="7.6" fill="#1284ff"/><rect x="629.8" y="527.3" width="2.2" height="7.6" fill="#ff0a0a"/><rect x="633.5" y="527.3" width="3.6" height="2.2" fill="#f2ec84"/><rect x="636.1" y="516.0" width="2.2" height="13.2" fill="#f2ec84"/><rect x="637.7" y="527.3" width="2.2" height="7.6" fill="#1284ff"/><rect x="639.3" y="532.9" width="2.2" height="24.5" fill="#1284ff"/><rect x="640.9" y="544.1" width="2.2" height="13.2" fill="#1284ff"/><rect x="641.4" y="555.4" width="3.6" height="2.2" fill="#f2ec84"/><rect x="643.0" y="555.4" width="3.6" height="2.2" fill="#f2ec84"/><rect x="645.6" y="544.1" width="2.2" height="18.9" fill="#1284ff"/><rect x="646.2" y="561.0" width="3.6" height="2.2" fill="#f2ec84"/><rect x="653.5" y="555.4" width="2.2" height="7.6" fill="#f2ec84"/><rect x="657.2" y="561.0" width="3.6" height="2.2" fill="#f2ec84"/><rect x="658.8" y="561.0" width="3.6" height="2.2" fill="#f2ec84"/><rect x="662.0" y="561.0" width="3.6" height="2.2" fill="#f2ec84"/><rect x="668.3" y="566.6" width="3.6" height="2.2" fill="#f2ec84"/><rect x="669.9" y="566.6" width="3.6" height="2.2" fill="#f2ec84"/><rect x="671.5" y="566.6" width="3.6" height="2.2" fill="#f2ec84"/><rect x="673.0" y="566.6" width="3.6" height="2.2" fill="#f2ec84"/><rect x="674.6" y="566.6" width="3.6" height="2.2" fill="#f2ec84"/><rect x="680.4" y="566.6" width="2.2" height="7.6" fill="#1284ff"/><rect x="682.5" y="572.2" width="3.6" height="2.2" fill="#f2ec84"/><rect x="684.1" y="572.2" width="3.6" height="2.2" fill="#f2ec84"/><rect x="686.7" y="572.2" width="2.2" height="7.6" fill="#1284ff"/><rect x="690.4" y="577.9" width="3.6" height="2.2" fill="#f2ec84"/><rect x="694.6" y="577.9" width="2.2" height="7.6" fill="#1284ff"/><rect x="696.7" y="577.9" width="3.6" height="2.2" fill="#f2ec84"/><rect x="698.3" y="577.9" width="3.6" height="2.2" fill="#f2ec84"/><rect x="705.6" y="566.6" width="2.2" height="7.6" fill="#ff0a0a"/><rect x="707.8" y="566.6" width="3.6" height="2.2" fill="#f2ec84"/><rect x="710.4" y="566.6" width="2.2" height="7.6" fill="#1284ff"/><rect x="713.5" y="555.4" width="2.2" height="13.2" fill="#ff0a0a"/><rect x="717.3" y="561.0" width="3.6" height="2.2" fill="#f2ec84"/><rect x="721.4" y="566.6" width="2.2" height="7.6" fill="#f2ec84"/><rect x="724.6" y="561.0" width="2.2" height="7.6" fill="#f2ec84"/><rect x="726.8" y="572.2" width="3.6" height="2.2" fill="#f2ec84"/><rect x="729.3" y="566.6" width="2.2" height="18.9" fill="#ff0a0a"/><rect x="729.9" y="566.6" width="3.6" height="2.2" fill="#f2ec84"/><rect x="731.5" y="566.6" width="3.6" height="2.2" fill="#f2ec84"/><rect x="733.1" y="566.6" width="3.6" height="2.2" fill="#f2ec84"/><rect x="737.2" y="544.1" width="2.2" height="13.2" fill="#ff0a0a"/><rect x="738.8" y="544.1" width="2.2" height="7.6" fill="#ff0a0a"/><rect x="740.4" y="532.9" width="2.2" height="13.2" fill="#ff0a0a"/><rect x="741.0" y="532.9" width="3.6" height="2.2" fill="#f2ec84"/><rect x="742.6" y="532.9" width="3.6" height="2.2" fill="#f2ec84"/><rect x="745.1" y="521.7" width="2.2" height="18.9" fill="#1284ff"/><rect x="745.7" y="538.5" width="3.6" height="2.2" fill="#f2ec84"/><rect x="747.3" y="538.5" width="3.6" height="2.2" fill="#f2ec84"/><rect x="757.8" y="538.5" width="2.2" height="7.6" fill="#1284ff"/><rect x="758.4" y="544.1" width="3.6" height="2.2" fill="#f2ec84"/><rect x="761.5" y="544.1" width="3.6" height="2.2" fill="#f2ec84"/><rect x="763.1" y="544.1" width="3.6" height="2.2" fill="#f2ec84"/><rect x="765.7" y="538.5" width="2.2" height="7.6" fill="#ff0a0a"/><rect x="767.3" y="538.5" width="2.2" height="7.6" fill="#1284ff"/><rect x="768.8" y="544.1" width="2.2" height="7.6" fill="#1284ff"/><rect x="772.0" y="549.8" width="2.2" height="13.2" fill="#1284ff"/><rect x="772.6" y="561.0" width="3.6" height="2.2" fill="#f2ec84"/><rect x="775.2" y="555.4" width="2.2" height="7.6" fill="#ff0a0a"/><rect x="778.3" y="555.4" width="2.2" height="7.6" fill="#ff0a0a"/><rect x="779.9" y="555.4" width="2.2" height="13.2" fill="#1284ff"/><rect x="780.5" y="566.6" width="3.6" height="2.2" fill="#f2ec84"/><rect x="783.6" y="572.2" width="3.6" height="2.2" fill="#f2ec84"/><rect x="791.0" y="577.9" width="2.2" height="18.9" fill="#1284ff"/><rect x="794.7" y="583.5" width="3.6" height="2.2" fill="#f2ec84"/><rect x="800.4" y="583.5" width="2.2" height="13.2" fill="#1284ff"/><rect x="801.0" y="589.1" width="3.6" height="2.2" fill="#f2ec84"/><rect x="803.6" y="589.1" width="2.2" height="7.6" fill="#1284ff"/><rect x="805.8" y="594.7" width="3.6" height="2.2" fill="#f2ec84"/><rect x="807.3" y="594.7" width="3.6" height="2.2" fill="#f2ec84"/><rect x="808.9" y="594.7" width="3.6" height="2.2" fill="#f2ec84"/><rect x="810.5" y="594.7" width="3.6" height="2.2" fill="#f2ec84"/><rect x="813.7" y="600.3" width="3.6" height="2.2" fill="#f2ec84"/><rect x="824.1" y="600.3" width="2.2" height="7.6" fill="#ff0a0a"/><rect x="827.3" y="600.3" width="2.2" height="7.6" fill="#1284ff"/><rect x="828.9" y="594.7" width="2.2" height="13.2" fill="#ff0a0a"/><rect x="830.5" y="589.1" width="2.2" height="7.6" fill="#ff0a0a"/><rect x="837.4" y="600.3" width="3.6" height="2.2" fill="#f2ec84"/><rect x="841.5" y="589.1" width="2.2" height="18.9" fill="#1284ff"/><rect x="842.1" y="606.0" width="3.6" height="2.2" fill="#f2ec84"/><rect x="847.8" y="611.6" width="2.2" height="13.2" fill="#f2ec84"/><rect x="851.0" y="611.6" width="2.2" height="7.6" fill="#1284ff"/><rect x="854.2" y="617.2" width="2.2" height="7.6" fill="#1284ff"/><rect x="854.7" y="622.8" width="3.6" height="2.2" fill="#f2ec84"/><rect x="857.3" y="622.8" width="2.2" height="7.6" fill="#1284ff"/><rect x="857.9" y="628.4" width="3.6" height="2.2" fill="#f2ec84"/><rect x="862.1" y="634.1" width="2.2" height="7.6" fill="#1284ff"/><rect x="863.6" y="639.7" width="2.2" height="7.6" fill="#1284ff"/><rect x="864.2" y="645.3" width="3.6" height="2.2" fill="#f2ec84"/><rect x="866.8" y="645.3" width="2.2" height="7.6" fill="#1284ff"/><rect x="868.4" y="650.9" width="2.2" height="7.6" fill="#1284ff"/><rect x="873.1" y="662.2" width="2.2" height="7.6" fill="#1284ff"/><rect x="875.3" y="673.4" width="3.6" height="2.2" fill="#f2ec84"/><rect x="878.4" y="667.8" width="3.6" height="2.2" fill="#f2ec84"/><rect x="880.0" y="667.8" width="3.6" height="2.2" fill="#f2ec84"/><rect x="882.6" y="667.8" width="2.2" height="7.6" fill="#1284ff"/><rect x="884.2" y="673.4" width="2.2" height="7.6" fill="#1284ff"/><rect x="885.8" y="679.0" width="2.2" height="7.6" fill="#1284ff"/><rect x="892.1" y="695.9" width="2.2" height="7.6" fill="#1284ff"/><rect x="895.2" y="695.9" width="2.2" height="7.6" fill="#ff0a0a"/><rect x="900.6" y="701.5" width="3.6" height="2.2" fill="#f2ec84"/><rect x="904.7" y="701.5" width="2.2" height="7.6" fill="#f2ec84"/><rect x="906.3" y="695.9" width="2.2" height="7.6" fill="#f2ec84"/><rect x="906.9" y="701.5" width="3.6" height="2.2" fill="#f2ec84"/><rect x="911.6" y="701.5" width="3.6" height="2.2" fill="#f2ec84"/><rect x="916.4" y="701.5" width="3.6" height="2.2" fill="#f2ec84"/><rect x="920.5" y="701.5" width="2.2" height="7.6" fill="#1284ff"/><rect x="924.3" y="695.9" width="3.6" height="2.2" fill="#f2ec84"/><rect x="926.8" y="690.3" width="2.2" height="7.6" fill="#ff0a0a"/><rect x="927.4" y="690.3" width="3.6" height="2.2" fill="#f2ec84"/><rect x="930.0" y="684.6" width="2.2" height="7.6" fill="#ff0a0a"/><rect x="931.6" y="679.0" width="2.2" height="7.6" fill="#ff0a0a"/><rect x="933.2" y="673.4" width="2.2" height="7.6" fill="#ff0a0a"/><rect x="936.3" y="662.2" width="2.2" height="7.6" fill="#ff0a0a"/><rect x="936.9" y="662.2" width="3.6" height="2.2" fill="#f2ec84"/><rect x="941.1" y="650.9" width="2.2" height="7.6" fill="#ff0a0a"/><rect x="942.6" y="645.3" width="2.2" height="7.6" fill="#ff0a0a"/><rect x="945.8" y="634.1" width="2.2" height="7.6" fill="#ff0a0a"/><rect x="947.4" y="628.4" width="2.2" height="7.6" fill="#ff0a0a"/><rect x="950.5" y="628.4" width="2.2" height="7.6" fill="#1284ff"/><rect x="951.1" y="634.1" width="3.6" height="2.2" fill="#f2ec84"/><rect x="953.7" y="634.1" width="2.2" height="7.6" fill="#1284ff"/><rect x="954.3" y="639.7" width="3.6" height="2.2" fill="#f2ec84"/><rect x="956.9" y="639.7" width="2.2" height="7.6" fill="#1284ff"/><rect x="958.4" y="645.3" width="2.2" height="18.9" fill="#1284ff"/><rect x="960.0" y="656.5" width="2.2" height="7.6" fill="#ff0a0a"/><rect x="961.6" y="656.5" width="2.2" height="7.6" fill="#1284ff"/><rect x="962.2" y="662.2" width="3.6" height="2.2" fill="#f2ec84"/><rect x="964.8" y="662.2" width="2.2" height="7.6" fill="#1284ff"/><rect x="967.9" y="667.8" width="2.2" height="7.6" fill="#1284ff"/><rect x="970.1" y="679.0" width="3.6" height="2.2" fill="#f2ec84"/><rect x="971.7" y="679.0" width="3.6" height="2.2" fill="#f2ec84"/><rect x="974.8" y="679.0" width="3.6" height="2.2" fill="#f2ec84"/><rect x="977.4" y="679.0" width="2.2" height="7.6" fill="#1284ff"/><rect x="979.0" y="679.0" width="2.2" height="7.6" fill="#ff0a0a"/><rect x="979.6" y="679.0" width="3.6" height="2.2" fill="#f2ec84"/><rect x="982.7" y="679.0" width="3.6" height="2.2" fill="#f2ec84"/><rect x="986.9" y="667.8" width="2.2" height="13.2" fill="#1284ff"/><rect x="987.5" y="679.0" width="3.6" height="2.2" fill="#f2ec84"/><rect x="990.0" y="673.4" width="2.2" height="7.6" fill="#ff0a0a"/><rect x="990.6" y="673.4" width="3.6" height="2.2" fill="#f2ec84"/><rect x="993.2" y="662.2" width="2.2" height="13.2" fill="#ff0a0a"/><rect x="993.8" y="667.8" width="3.6" height="2.2" fill="#f2ec84"/><rect x="995.4" y="667.8" width="3.6" height="2.2" fill="#f2ec84"/><rect x="997.9" y="656.5" width="2.2" height="13.2" fill="#ff0a0a"/><rect x="999.5" y="650.9" width="2.2" height="7.6" fill="#ff0a0a"/><rect x="1001.1" y="645.3" width="2.2" height="7.6" fill="#ff0a0a"/><rect x="1002.7" y="639.7" width="2.2" height="7.6" fill="#ff0a0a"/><rect x="1003.3" y="639.7" width="3.6" height="2.2" fill="#f2ec84"/><rect x="1004.8" y="639.7" width="3.6" height="2.2" fill="#f2ec84"/><rect x="1012.2" y="639.7" width="2.2" height="7.6" fill="#f2ec84"/><rect x="1013.7" y="639.7" width="2.2" height="7.6" fill="#ff0a0a"/><rect x="1015.3" y="628.4" width="2.2" height="24.5" fill="#1284ff"/><rect x="1016.9" y="645.3" width="2.2" height="7.6" fill="#ff0a0a"/><rect x="1017.5" y="645.3" width="3.6" height="2.2" fill="#f2ec84"/><rect x="1019.1" y="645.3" width="3.6" height="2.2" fill="#f2ec84"/><rect x="1021.6" y="639.7" width="2.2" height="7.6" fill="#ff0a0a"/><rect x="1031.7" y="645.3" width="3.6" height="2.2" fill="#f2ec84"/><rect x="1034.3" y="639.7" width="2.2" height="7.6" fill="#ff0a0a"/><rect x="1035.9" y="634.1" width="2.2" height="7.6" fill="#f2ec84"/><rect x="1041.2" y="639.7" width="3.6" height="2.2" fill="#f2ec84"/><rect x="1044.3" y="639.7" width="3.6" height="2.2" fill="#f2ec84"/><rect x="1050.7" y="645.3" width="3.6" height="2.2" fill="#f2ec84"/><rect x="1052.2" y="645.3" width="3.6" height="2.2" fill="#f2ec84"/><rect x="1056.4" y="639.7" width="2.2" height="7.6" fill="#1284ff"/><rect x="1062.7" y="639.7" width="2.2" height="13.2" fill="#ff0a0a"/><rect x="1065.9" y="639.7" width="2.2" height="7.6" fill="#ff0a0a"/><rect x="1067.5" y="639.7" width="2.2" height="13.2" fill="#1284ff"/><rect x="1072.8" y="645.3" width="3.6" height="2.2" fill="#f2ec84"/><rect x="1075.9" y="645.3" width="3.6" height="2.2" fill="#f2ec84"/><rect x="1078.5" y="639.7" width="2.2" height="7.6" fill="#ff0a0a"/><rect x="1079.1" y="639.7" width="3.6" height="2.2" fill="#f2ec84"/><rect x="1081.7" y="639.7" width="2.2" height="13.2" fill="#f2ec84"/><rect x="1082.3" y="639.7" width="3.6" height="2.2" fill="#f2ec84"/><rect x="1085.4" y="639.7" width="3.6" height="2.2" fill="#f2ec84"/><rect x="1088.0" y="634.1" width="2.2" height="7.6" fill="#ff0a0a"/><rect x="1088.6" y="634.1" width="3.6" height="2.2" fill="#f2ec84"/><rect x="1094.3" y="622.8" width="2.2" height="7.6" fill="#1284ff"/><rect x="1098.1" y="634.1" width="3.6" height="2.2" fill="#f2ec84"/><rect x="1102.2" y="628.4" width="2.2" height="7.6" fill="#1284ff"/><rect x="1103.8" y="634.1" width="2.2" height="13.2" fill="#1284ff"/><rect x="1109.1" y="639.7" width="3.6" height="2.2" fill="#f2ec84"/><rect x="1111.7" y="628.4" width="2.2" height="13.2" fill="#f2ec84"/><rect x="1115.4" y="634.1" width="3.6" height="2.2" fill="#f2ec84"/><rect x="1119.6" y="628.4" width="2.2" height="7.6" fill="#ff0a0a"/><rect x="1121.8" y="628.4" width="3.6" height="2.2" fill="#f2ec84"/><rect x="1124.3" y="622.8" width="2.2" height="7.6" fill="#f2ec84"/><rect x="1125.9" y="611.6" width="2.2" height="18.9" fill="#ff0a0a"/><rect x="1126.5" y="622.8" width="3.6" height="2.2" fill="#f2ec84"/><rect x="1130.7" y="611.6" width="2.2" height="7.6" fill="#ff0a0a"/><rect x="1132.8" y="617.2" width="3.6" height="2.2" fill="#f2ec84"/><rect x="1135.4" y="611.6" width="2.2" height="7.6" fill="#ff0a0a"/><rect x="1137.0" y="606.0" width="2.2" height="7.6" fill="#ff0a0a"/><rect x="1140.1" y="600.3" width="2.2" height="7.6" fill="#ff0a0a"/><rect x="1143.3" y="594.7" width="2.2" height="7.6" fill="#ff0a0a"/><rect x="1146.5" y="594.7" width="2.2" height="7.6" fill="#f2ec84"/><rect x="1153.4" y="606.0" width="3.6" height="2.2" fill="#f2ec84"/><rect x="1155.9" y="606.0" width="2.2" height="7.6" fill="#1284ff"/><rect x="1157.5" y="606.0" width="2.2" height="7.6" fill="#ff0a0a"/><rect x="1164.4" y="606.0" width="3.6" height="2.2" fill="#f2ec84"/><rect x="1167.0" y="600.3" width="2.2" height="7.6" fill="#ff0a0a"/><rect x="1172.3" y="606.0" width="3.6" height="2.2" fill="#f2ec84"/><rect x="1176.5" y="594.7" width="2.2" height="13.2" fill="#f2ec84"/><rect x="1178.1" y="600.3" width="2.2" height="7.6" fill="#ff0a0a"/><rect x="1179.6" y="594.7" width="2.2" height="7.6" fill="#f2ec84"/><rect x="1182.8" y="600.3" width="2.2" height="7.6" fill="#1284ff"/><rect x="1184.4" y="606.0" width="2.2" height="18.9" fill="#1284ff"/><rect x="1186.0" y="622.8" width="2.2" height="13.2" fill="#1284ff"/><rect x="1187.5" y="634.1" width="2.2" height="7.6" fill="#1284ff"/><rect x="1191.3" y="639.7" width="3.6" height="2.2" fill="#f2ec84"/><rect x="1192.9" y="639.7" width="3.6" height="2.2" fill="#f2ec84"/><rect x="1195.4" y="617.2" width="2.2" height="24.5" fill="#ff0a0a"/><rect x="1197.0" y="617.2" width="2.2" height="13.2" fill="#ff0a0a"/><rect x="1198.6" y="611.6" width="2.2" height="7.6" fill="#ff0a0a"/><rect x="1200.2" y="606.0" width="2.2" height="7.6" fill="#ff0a0a"/><rect x="1203.3" y="589.1" width="2.2" height="13.2" fill="#ff0a0a"/><rect x="1204.9" y="583.5" width="2.2" height="7.6" fill="#ff0a0a"/><rect x="1205.5" y="583.5" width="3.6" height="2.2" fill="#f2ec84"/><rect x="1208.1" y="577.9" width="2.2" height="7.6" fill="#ff0a0a"/><rect x="1210.2" y="577.9" width="3.6" height="2.2" fill="#f2ec84"/><rect x="1212.8" y="577.9" width="2.2" height="7.6" fill="#1284ff"/><rect x="1213.4" y="583.5" width="3.6" height="2.2" fill="#f2ec84"/><rect x="1216.0" y="577.9" width="2.2" height="7.6" fill="#f2ec84"/><rect x="1217.6" y="583.5" width="2.2" height="7.6" fill="#1284ff"/><rect x="1219.1" y="583.5" width="2.2" height="7.6" fill="#ff0a0a"/><rect x="1220.7" y="577.9" width="2.2" height="7.6" fill="#ff0a0a"/><rect x="1222.3" y="566.6" width="2.2" height="13.2" fill="#f2ec84"/><rect x="1223.9" y="561.0" width="2.2" height="18.9" fill="#ff0a0a"/><rect x="1225.5" y="544.1" width="2.2" height="18.9" fill="#ff0a0a"/><rect x="1227.0" y="521.7" width="2.2" height="24.5" fill="#ff0a0a"/><rect x="1228.6" y="510.4" width="2.2" height="13.2" fill="#ff0a0a"/><rect x="1230.2" y="487.9" width="2.2" height="24.5" fill="#ff0a0a"/><rect x="1231.8" y="465.5" width="2.2" height="24.5" fill="#ff0a0a"/><rect x="1232.4" y="465.5" width="3.6" height="2.2" fill="#f2ec84"/><rect x="1233.9" y="465.5" width="3.6" height="2.2" fill="#f2ec84"/><rect x="1235.5" y="465.5" width="3.6" height="2.2" fill="#f2ec84"/><rect x="1237.1" y="465.5" width="3.6" height="2.2" fill="#f2ec84"/><rect x="1239.7" y="459.8" width="2.2" height="7.6" fill="#ff0a0a"/><rect x="1242.8" y="454.2" width="2.2" height="7.6" fill="#ff0a0a"/><rect x="1244.4" y="448.6" width="2.2" height="18.9" fill="#ff0a0a"/><rect x="1250.7" y="448.6" width="2.2" height="13.2" fill="#1284ff"/><rect x="1251.3" y="459.8" width="3.6" height="2.2" fill="#f2ec84"/><rect x="1256.1" y="459.8" width="3.6" height="2.2" fill="#f2ec84"/><rect x="1257.6" y="459.8" width="3.6" height="2.2" fill="#f2ec84"/><rect x="1259.2" y="459.8" width="3.6" height="2.2" fill="#f2ec84"/><rect x="1262.4" y="459.8" width="3.6" height="2.2" fill="#f2ec84"/><rect x="1264.0" y="459.8" width="3.6" height="2.2" fill="#f2ec84"/><rect x="1265.5" y="459.8" width="3.6" height="2.2" fill="#f2ec84"/><rect x="1268.1" y="459.8" width="2.2" height="7.6" fill="#1284ff"/><rect x="1269.7" y="459.8" width="2.2" height="7.6" fill="#ff0a0a"/><rect x="1271.9" y="465.5" width="3.6" height="2.2" fill="#f2ec84"/><rect x="1274.4" y="465.5" width="2.2" height="7.6" fill="#1284ff"/><rect x="1276.0" y="465.5" width="2.2" height="7.6" fill="#ff0a0a"/><rect x="1277.6" y="459.8" width="2.2" height="7.6" fill="#ff0a0a"/><rect x="1280.8" y="482.3" width="2.2" height="13.2" fill="#1284ff"/><rect x="1282.3" y="493.6" width="2.2" height="7.6" fill="#1284ff"/><rect x="1283.9" y="499.2" width="2.2" height="7.6" fill="#1284ff"/><rect x="1289.2" y="504.8" width="3.6" height="2.2" fill="#f2ec84"/><rect x="1290.8" y="504.8" width="3.6" height="2.2" fill="#f2ec84"/><rect x="1293.4" y="504.8" width="2.2" height="13.2" fill="#1284ff"/><rect x="1295.0" y="499.2" width="2.2" height="13.2" fill="#ff0a0a"/><rect x="1295.6" y="499.2" width="3.6" height="2.2" fill="#f2ec84"/><rect x="1298.1" y="499.2" width="2.2" height="7.6" fill="#f2ec84"/><rect x="1301.3" y="487.9" width="2.2" height="7.6" fill="#ff0a0a"/><rect x="1302.9" y="476.7" width="2.2" height="13.2" fill="#ff0a0a"/><rect x="1304.5" y="471.1" width="2.2" height="7.6" fill="#ff0a0a"/><rect x="1305.0" y="471.1" width="3.6" height="2.2" fill="#f2ec84"/><rect x="1307.6" y="465.5" width="2.2" height="7.6" fill="#ff0a0a"/><rect x="1309.2" y="459.8" width="2.2" height="7.6" fill="#ff0a0a"/><rect x="1309.8" y="459.8" width="3.6" height="2.2" fill="#f2ec84"/><rect x="1312.4" y="454.2" width="2.2" height="7.6" fill="#ff0a0a"/><rect x="1312.9" y="454.2" width="3.6" height="2.2" fill="#f2ec84"/><rect x="1317.1" y="443.0" width="2.2" height="18.9" fill="#1284ff"/><rect x="1318.7" y="431.7" width="2.2" height="18.9" fill="#ff0a0a"/><rect x="1320.3" y="431.7" width="2.2" height="13.2" fill="#ff0a0a"/><rect x="1321.8" y="426.1" width="2.2" height="7.6" fill="#ff0a0a"/><rect x="1323.4" y="426.1" width="2.2" height="18.9" fill="#1284ff"/><rect x="1325.0" y="443.0" width="2.2" height="13.2" fill="#1284ff"/><rect x="1326.6" y="454.2" width="2.2" height="7.6" fill="#1284ff"/><rect x="1327.2" y="459.8" width="3.6" height="2.2" fill="#f2ec84"/><rect x="1329.7" y="448.6" width="2.2" height="24.5" fill="#1284ff"/><rect x="1330.3" y="471.1" width="3.6" height="2.2" fill="#f2ec84"/><rect x="1334.5" y="482.3" width="2.2" height="13.2" fill="#1284ff"/><rect x="1336.1" y="493.6" width="2.2" height="13.2" fill="#1284ff"/><rect x="1338.2" y="510.4" width="3.6" height="2.2" fill="#f2ec84"/><rect x="1339.8" y="510.4" width="3.6" height="2.2" fill="#f2ec84"/><rect x="1342.4" y="510.4" width="2.2" height="7.6" fill="#1284ff"/><rect x="1343.0" y="516.0" width="3.6" height="2.2" fill="#f2ec84"/><rect x="1344.5" y="516.0" width="3.6" height="2.2" fill="#f2ec84"/><rect x="1347.1" y="516.0" width="2.2" height="13.2" fill="#1284ff"/><rect x="1348.7" y="521.7" width="2.2" height="7.6" fill="#ff0a0a"/><rect x="1351.9" y="521.7" width="2.2" height="7.6" fill="#1284ff"/><rect x="1352.4" y="527.3" width="3.6" height="2.2" fill="#f2ec84"/><rect x="1355.0" y="521.7" width="2.2" height="7.6" fill="#ff0a0a"/><rect x="1356.6" y="510.4" width="2.2" height="18.9" fill="#1284ff"/><rect x="1358.2" y="521.7" width="2.2" height="7.6" fill="#ff0a0a"/><rect x="1359.8" y="510.4" width="2.2" height="13.2" fill="#f2ec84"/><rect x="1361.3" y="521.7" width="2.2" height="13.2" fill="#f2ec84"/><rect x="1362.9" y="516.0" width="2.2" height="7.6" fill="#ff0a0a"/><rect x="1367.7" y="538.5" width="2.2" height="13.2" fill="#1284ff"/><rect x="1369.2" y="549.8" width="2.2" height="13.2" fill="#1284ff"/><rect x="1370.8" y="561.0" width="2.2" height="7.6" fill="#1284ff"/><rect x="1372.4" y="566.6" width="2.2" height="13.2" fill="#1284ff"/><rect x="1374.0" y="577.9" width="2.2" height="13.2" fill="#1284ff"/><rect x="1377.1" y="577.9" width="2.2" height="13.2" fill="#ff0a0a"/><rect x="1378.7" y="572.2" width="2.2" height="7.6" fill="#ff0a0a"/><rect x="1379.3" y="572.2" width="3.6" height="2.2" fill="#f2ec84"/><rect x="1381.9" y="561.0" width="2.2" height="13.2" fill="#ff0a0a"/><rect x="1383.5" y="561.0" width="2.2" height="7.6" fill="#1284ff"/><rect x="1385.6" y="566.6" width="3.6" height="2.2" fill="#f2ec84"/><rect x="1388.2" y="566.6" width="2.2" height="7.6" fill="#1284ff"/><rect x="1389.8" y="566.6" width="2.2" height="7.6" fill="#ff0a0a"/><rect x="1391.4" y="561.0" width="2.2" height="7.6" fill="#ff0a0a"/><rect x="1392.9" y="544.1" width="2.2" height="18.9" fill="#ff0a0a"/><rect x="1396.1" y="527.3" width="2.2" height="13.2" fill="#ff0a0a"/><rect x="1397.7" y="527.3" width="2.2" height="13.2" fill="#f2ec84"/><rect x="1400.8" y="504.8" width="2.2" height="13.2" fill="#ff0a0a"/><rect x="1402.4" y="499.2" width="2.2" height="7.6" fill="#ff0a0a"/><rect x="1407.7" y="482.3" width="3.6" height="2.2" fill="#f2ec84"/><rect x="1410.3" y="482.3" width="2.2" height="7.6" fill="#1284ff"/><rect x="1415.1" y="510.4" width="2.2" height="7.6" fill="#f2ec84"/><rect x="1416.6" y="504.8" width="2.2" height="7.6" fill="#ff0a0a"/><rect x="1417.2" y="504.8" width="3.6" height="2.2" fill="#f2ec84"/><rect x="1423.0" y="499.2" width="2.2" height="7.6" fill="#1284ff"/><rect x="1426.1" y="504.8" width="2.2" height="7.6" fill="#ff0a0a"/><rect x="1429.3" y="493.6" width="2.2" height="7.6" fill="#ff0a0a"/><rect x="1434.0" y="493.6" width="2.2" height="7.6" fill="#ff0a0a"/><rect x="1445.1" y="493.6" width="2.2" height="7.6" fill="#f2ec84"/><rect x="1448.8" y="499.2" width="3.6" height="2.2" fill="#f2ec84"/><rect x="1456.1" y="499.2" width="2.2" height="7.6" fill="#ff0a0a"/><rect x="1459.3" y="499.2" width="2.2" height="7.6" fill="#ff0a0a"/><rect x="1461.5" y="499.2" width="3.6" height="2.2" fill="#f2ec84"/><rect x="1464.6" y="499.2" width="3.6" height="2.2" fill="#f2ec84"/><rect x="1468.8" y="493.6" width="2.2" height="7.6" fill="#1284ff"/><rect x="1470.9" y="504.8" width="3.6" height="2.2" fill="#f2ec84"/><rect x="1483.0" y="510.4" width="2.2" height="7.6" fill="#ff0a0a"/><rect x="1487.7" y="510.4" width="2.2" height="7.6" fill="#ff0a0a"/><rect x="1494.1" y="499.2" width="2.2" height="7.6" fill="#ff0a0a"/><rect x="1496.2" y="499.2" width="3.6" height="2.2" fill="#f2ec84"/><rect x="1498.8" y="487.9" width="2.2" height="13.2" fill="#ff0a0a"/><rect x="1500.4" y="487.9" width="2.2" height="7.6" fill="#f2ec84"/><rect x="1503.5" y="487.9" width="2.2" height="7.6" fill="#1284ff"/><rect x="1508.9" y="487.9" width="3.6" height="2.2" fill="#f2ec84"/><rect x="1513.0" y="471.1" width="2.2" height="18.9" fill="#ff0a0a"/><rect x="1513.6" y="482.3" width="3.6" height="2.2" fill="#f2ec84"/><rect x="1518.3" y="487.9" width="3.6" height="2.2" fill="#f2ec84"/><rect x="1520.9" y="482.3" width="2.2" height="7.6" fill="#ff0a0a"/><rect x="1521.5" y="482.3" width="3.6" height="2.2" fill="#f2ec84"/><rect x="1527.2" y="476.7" width="2.2" height="7.6" fill="#ff0a0a"/><rect x="1530.4" y="471.1" width="2.2" height="7.6" fill="#1284ff"/><rect x="1533.6" y="471.1" width="2.2" height="7.6" fill="#ff0a0a"/><rect x="1534.1" y="471.1" width="3.6" height="2.2" fill="#f2ec84"/><rect x="1536.7" y="471.1" width="2.2" height="7.6" fill="#1284ff"/><rect x="1546.2" y="465.5" width="2.2" height="13.2" fill="#f2ec84"/><rect x="1547.8" y="465.5" width="2.2" height="7.6" fill="#1284ff"/><rect x="1552.5" y="465.5" width="2.2" height="13.2" fill="#ff0a0a"/><rect x="1554.1" y="465.5" width="2.2" height="7.6" fill="#1284ff"/><rect x="1554.7" y="471.1" width="3.6" height="2.2" fill="#f2ec84"/><rect x="1556.3" y="471.1" width="3.6" height="2.2" fill="#f2ec84"/><rect x="1558.8" y="471.1" width="2.2" height="7.6" fill="#f2ec84"/><rect x="1562.0" y="471.1" width="2.2" height="7.6" fill="#1284ff"/><rect x="1562.6" y="476.7" width="3.6" height="2.2" fill="#f2ec84"/><rect x="1565.2" y="471.1" width="2.2" height="7.6" fill="#ff0a0a"/><rect x="1568.9" y="476.7" width="3.6" height="2.2" fill="#f2ec84"/><rect x="1575.2" y="471.1" width="3.6" height="2.2" fill="#f2ec84"/><rect x="1590.4" y="471.1" width="2.2" height="7.6" fill="#1284ff"/><rect x="1595.2" y="465.5" width="2.2" height="7.6" fill="#ff0a0a"/><rect x="1596.8" y="454.2" width="2.2" height="13.2" fill="#f2ec84"/><rect x="1598.9" y="465.5" width="3.6" height="2.2" fill="#f2ec84"/><rect x="1600.5" y="465.5" width="3.6" height="2.2" fill="#f2ec84"/><rect x="1602.1" y="465.5" width="3.6" height="2.2" fill="#f2ec84"/><rect x="1604.7" y="459.8" width="2.2" height="7.6" fill="#ff0a0a"/><rect x="1607.8" y="459.8" width="2.2" height="7.6" fill="#ff0a0a"/><rect x="1611.0" y="459.8" width="2.2" height="7.6" fill="#f2ec84"/><rect x="1612.6" y="459.8" width="2.2" height="7.6" fill="#1284ff"/><rect x="1614.7" y="465.5" width="3.6" height="2.2" fill="#f2ec84"/><rect x="1617.3" y="459.8" width="2.2" height="7.6" fill="#ff0a0a"/><rect x="1620.5" y="465.5" width="2.2" height="7.6" fill="#ff0a0a"/><rect x="1625.8" y="465.5" width="3.6" height="2.2" fill="#f2ec84"/><rect x="1628.9" y="459.8" width="3.6" height="2.2" fill="#f2ec84"/><rect x="1632.1" y="454.2" width="3.6" height="2.2" fill="#f2ec84"/><rect x="1635.3" y="454.2" width="3.6" height="2.2" fill="#f2ec84"/><rect x="1636.8" y="454.2" width="3.6" height="2.2" fill="#f2ec84"/><rect x="1639.4" y="454.2" width="2.2" height="13.2" fill="#f2ec84"/><rect x="1642.6" y="448.6" width="2.2" height="7.6" fill="#ff0a0a"/><rect x="1646.3" y="454.2" width="3.6" height="2.2" fill="#f2ec84"/><rect x="1649.5" y="454.2" width="3.6" height="2.2" fill="#f2ec84"/><rect x="1653.6" y="459.8" width="2.2" height="7.6" fill="#ff0a0a"/><rect x="1663.1" y="459.8" width="2.2" height="7.6" fill="#1284ff"/><rect x="1663.7" y="465.5" width="3.6" height="2.2" fill="#f2ec84"/><rect x="1665.3" y="465.5" width="3.6" height="2.2" fill="#f2ec84"/><rect x="1669.4" y="465.5" width="2.2" height="7.6" fill="#ff0a0a"/><rect x="1671.0" y="465.5" width="2.8" height="7.6" fill="#1284ff"/><rect x="1671.6" y="471.1" width="3.6" height="2.2" fill="#f2ec84"/><rect x="1674.2" y="465.5" width="2.8" height="7.6" fill="#ff0a0a"/><rect x="1677.3" y="465.5" width="2.8" height="7.6" fill="#1284ff"/><rect x="1678.9" y="459.8" width="2.8" height="13.2" fill="#ff0a0a"/><rect x="1680.5" y="459.8" width="2.8" height="24.5" fill="#1284ff"/><rect x="1682.1" y="459.8" width="2.8" height="13.2" fill="#ff0a0a"/><rect x="1683.7" y="459.8" width="2.8" height="18.9" fill="#1284ff"/><rect x="1685.2" y="471.1" width="2.8" height="7.6" fill="#ff0a0a"/><rect x="1685.8" y="471.1" width="3.6" height="2.2" fill="#f2ec84"/><rect x="1688.4" y="465.5" width="2.8" height="7.6" fill="#ff0a0a"/><rect x="1690.0" y="465.5" width="2.8" height="13.2" fill="#1284ff"/><rect x="1691.6" y="476.7" width="2.8" height="7.6" fill="#1284ff"/><rect x="1692.1" y="482.3" width="3.6" height="2.2" fill="#f2ec84"/><rect x="1693.7" y="482.3" width="3.6" height="2.2" fill="#f2ec84"/><rect x="1696.3" y="482.3" width="2.8" height="7.6" fill="#1284ff"/><rect x="1696.9" y="487.9" width="3.6" height="2.2" fill="#f2ec84"/><rect x="1698.5" y="487.9" width="3.6" height="2.2" fill="#f2ec84"/><rect x="1701.0" y="482.3" width="2.8" height="7.6" fill="#ff0a0a"/><rect x="1702.6" y="482.3" width="2.8" height="7.6" fill="#1284ff"/><rect x="1703.2" y="487.9" width="3.6" height="2.2" fill="#f2ec84"/><rect x="1705.8" y="487.9" width="2.8" height="13.2" fill="#1284ff"/><rect x="1707.4" y="487.9" width="2.8" height="13.2" fill="#ff0a0a"/><rect x="1708.9" y="493.6" width="2.8" height="13.2" fill="#1284ff"/><rect x="1710.5" y="499.2" width="2.8" height="7.6" fill="#ff0a0a"/><rect x="1712.1" y="493.6" width="2.8" height="7.6" fill="#ff0a0a"/><rect x="1713.7" y="493.6" width="2.8" height="18.9" fill="#1284ff"/><rect x="1715.3" y="504.8" width="2.8" height="13.2" fill="#1284ff"/><rect x="1716.8" y="499.2" width="2.8" height="18.9" fill="#ff0a0a"/><rect x="1717.4" y="499.2" width="3.6" height="2.2" fill="#f2ec84"/><rect x="1719.0" y="499.2" width="3.6" height="2.2" fill="#f2ec84"/><rect x="1721.6" y="499.2" width="2.8" height="13.2" fill="#f2ec84"/><rect x="1723.2" y="487.9" width="2.8" height="18.9" fill="#1284ff"/><rect x="1724.7" y="504.8" width="2.8" height="18.9" fill="#1284ff"/><rect x="1726.3" y="510.4" width="2.8" height="7.6" fill="#ff0a0a"/><rect x="1727.9" y="510.4" width="2.8" height="7.6" fill="#1284ff"/><rect x="1728.5" y="516.0" width="3.6" height="2.2" fill="#f2ec84"/><rect x="1731.1" y="516.0" width="2.8" height="7.6" fill="#1284ff"/><rect x="1732.6" y="504.8" width="2.8" height="18.9" fill="#ff0a0a"/><rect x="1733.2" y="516.0" width="3.6" height="2.2" fill="#f2ec84"/><rect x="1735.8" y="504.8" width="2.8" height="13.2" fill="#ff0a0a"/><rect x="1737.4" y="504.8" width="2.8" height="7.6" fill="#1284ff"/><rect x="1738.0" y="510.4" width="3.6" height="2.2" fill="#f2ec84"/><rect x="1740.5" y="510.4" width="2.8" height="7.6" fill="#1284ff"/><rect x="1742.1" y="504.8" width="2.8" height="13.2" fill="#ff0a0a"/><rect x="1742.7" y="504.8" width="3.6" height="2.2" fill="#f2ec84"/><rect x="1744.3" y="504.8" width="3.6" height="2.2" fill="#f2ec84"/><rect x="1745.9" y="504.8" width="3.6" height="2.2" fill="#f2ec84"/><rect x="1748.4" y="504.8" width="2.8" height="13.2" fill="#1284ff"/><rect x="1749.0" y="516.0" width="3.6" height="2.2" fill="#f2ec84"/><rect x="1751.6" y="510.4" width="2.8" height="7.6" fill="#ff0a0a"/><rect x="1753.2" y="510.4" width="2.8" height="18.9" fill="#1284ff"/><rect x="1753.8" y="521.7" width="3.6" height="2.2" fill="#f2ec84"/><rect x="1755.3" y="521.7" width="3.6" height="2.2" fill="#f2ec84"/><rect x="1757.9" y="521.7" width="2.8" height="7.6" fill="#1284ff"/><rect x="1759.5" y="521.7" width="2.8" height="7.6" fill="#ff0a0a"/><rect x="1760.1" y="521.7" width="3.6" height="2.2" fill="#f2ec84"/><rect x="1762.7" y="521.7" width="2.8" height="13.2" fill="#1284ff"/><rect x="1763.2" y="532.9" width="3.6" height="2.2" fill="#f2ec84"/><rect x="1765.8" y="532.9" width="2.8" height="7.6" fill="#f2ec84"/><rect x="1767.4" y="532.9" width="2.8" height="13.2" fill="#1284ff"/><rect x="1768.0" y="544.1" width="3.6" height="2.2" fill="#f2ec84"/><rect x="1770.6" y="538.5" width="2.8" height="7.6" fill="#ff0a0a"/><rect x="1772.1" y="538.5" width="2.8" height="7.6" fill="#1284ff"/><rect x="1773.7" y="544.1" width="2.8" height="13.2" fill="#1284ff"/><rect x="1775.3" y="544.1" width="2.8" height="13.2" fill="#ff0a0a"/><rect x="1776.9" y="544.1" width="2.8" height="7.6" fill="#1284ff"/><rect x="1778.5" y="549.8" width="2.8" height="13.2" fill="#1284ff"/><rect x="1780.0" y="555.4" width="2.8" height="7.6" fill="#f2ec84"/><rect x="1781.6" y="555.4" width="2.8" height="7.6" fill="#ff0a0a"/><rect x="1782.2" y="555.4" width="3.6" height="2.2" fill="#f2ec84"/><rect x="1784.8" y="549.8" width="2.8" height="13.2" fill="#1284ff"/><rect x="1785.4" y="561.0" width="3.6" height="2.2" fill="#f2ec84"/><rect x="1787.9" y="561.0" width="2.8" height="13.2" fill="#1284ff"/><rect x="1789.5" y="561.0" width="2.8" height="18.9" fill="#ff0a0a"/><rect x="1791.1" y="561.0" width="2.8" height="7.6" fill="#1284ff"/><rect x="1791.7" y="566.6" width="3.6" height="2.2" fill="#f2ec84"/><rect x="1794.3" y="561.0" width="2.8" height="7.6" fill="#ff0a0a"/><rect x="1795.8" y="561.0" width="2.8" height="13.2" fill="#1284ff"/><rect x="1797.4" y="561.0" width="2.8" height="13.2" fill="#ff0a0a"/><rect x="1799.0" y="566.6" width="2.8" height="7.6" fill="#1284ff"/><rect x="1799.6" y="572.2" width="3.6" height="2.2" fill="#f2ec84"/><rect x="1801.2" y="572.2" width="3.6" height="2.2" fill="#f2ec84"/><rect x="1803.7" y="561.0" width="2.8" height="13.2" fill="#ff0a0a"/><rect x="1805.3" y="566.6" width="2.8" height="7.6" fill="#1284ff"/><rect x="1806.9" y="566.6" width="2.8" height="7.6" fill="#ff0a0a"/><rect x="1807.5" y="566.6" width="3.6" height="2.2" fill="#f2ec84"/><rect x="1810.1" y="566.6" width="2.8" height="18.9" fill="#1284ff"/><rect x="1811.6" y="566.6" width="2.8" height="13.2" fill="#ff0a0a"/><rect x="1813.2" y="566.6" width="2.8" height="7.6" fill="#1284ff"/><rect x="1816.4" y="561.0" width="2.8" height="7.6" fill="#1284ff"/><rect x="1818.0" y="561.0" width="2.8" height="7.6" fill="#ff0a0a"/><rect x="1819.5" y="555.4" width="2.8" height="7.6" fill="#ff0a0a"/><rect x="1821.1" y="555.4" width="2.8" height="13.2" fill="#1284ff"/><rect x="1822.7" y="561.0" width="2.8" height="7.6" fill="#ff0a0a"/><rect x="1824.3" y="561.0" width="2.8" height="7.6" fill="#1284ff"/><rect x="1824.9" y="566.6" width="3.6" height="2.2" fill="#f2ec84"/><rect x="1827.4" y="566.6" width="2.8" height="7.6" fill="#1284ff"/><rect x="1829.0" y="572.2" width="2.8" height="7.6" fill="#1284ff"/><rect x="1830.6" y="566.6" width="2.8" height="13.2" fill="#ff0a0a"/><rect x="1832.2" y="561.0" width="2.8" height="7.6" fill="#ff0a0a"/><rect x="1833.8" y="561.0" width="2.8" height="7.6" fill="#1284ff"/><rect x="1835.3" y="566.6" width="2.8" height="7.6" fill="#1284ff"/><rect x="1836.9" y="555.4" width="2.8" height="18.9" fill="#ff0a0a"/><rect x="1837.5" y="555.4" width="3.6" height="2.2" fill="#f2ec84"/><rect x="1840.1" y="555.4" width="2.8" height="7.6" fill="#1284ff"/><rect x="1841.7" y="549.8" width="2.8" height="13.2" fill="#f2ec84"/><rect x="1842.2" y="561.0" width="3.6" height="2.2" fill="#f2ec84"/><rect x="1844.8" y="555.4" width="2.8" height="7.6" fill="#ff0a0a"/><rect x="1846.4" y="549.8" width="2.8" height="7.6" fill="#ff0a0a"/><rect x="1848.0" y="544.1" width="2.8" height="7.6" fill="#ff0a0a"/><rect x="1849.6" y="544.1" width="2.8" height="7.6" fill="#f2ec84"/><rect x="1851.1" y="538.5" width="2.2" height="7.6" fill="#ff0a0a"/><rect x="1852.7" y="532.9" width="2.2" height="7.6" fill="#ff0a0a"/><rect x="1853.3" y="532.9" width="3.6" height="2.2" fill="#f2ec84"/><rect x="1855.9" y="527.3" width="2.2" height="7.6" fill="#ff0a0a"/><rect x="1858.0" y="532.9" width="3.6" height="2.2" fill="#f2ec84"/><rect x="1862.2" y="532.9" width="2.2" height="13.2" fill="#1284ff"/><rect x="1864.4" y="538.5" width="3.6" height="2.2" fill="#f2ec84"/><rect x="1865.9" y="538.5" width="3.6" height="2.2" fill="#f2ec84"/><rect x="1868.5" y="538.5" width="2.2" height="7.6" fill="#1284ff"/><rect x="1869.1" y="544.1" width="3.6" height="2.2" fill="#f2ec84"/><rect x="1871.7" y="532.9" width="2.2" height="24.5" fill="#1284ff"/><rect x="1874.8" y="549.8" width="2.2" height="7.6" fill="#1284ff"/><rect x="1876.4" y="549.8" width="2.2" height="7.6" fill="#ff0a0a"/><rect x="1879.6" y="555.4" width="2.2" height="7.6" fill="#1284ff"/><rect x="1884.9" y="561.0" width="3.6" height="2.2" fill="#f2ec84"/><rect x="1887.5" y="555.4" width="2.2" height="7.6" fill="#ff0a0a"/><rect x="1888.1" y="555.4" width="3.6" height="2.2" fill="#f2ec84"/><rect x="1890.6" y="549.8" width="2.2" height="7.6" fill="#ff0a0a"/><rect x="1895.4" y="544.1" width="2.2" height="7.6" fill="#1284ff"/><rect x="1897.0" y="532.9" width="2.2" height="18.9" fill="#ff0a0a"/><rect x="1898.5" y="532.9" width="2.2" height="18.9" fill="#1284ff"/><rect x="1899.1" y="549.8" width="3.6" height="2.2" fill="#f2ec84"/><path d="M1900.5 108.5 L1905 111.5 L1900.5 114.5 Z" fill="#f2ec84"/><path d="M1900.5 554 L1905 557 L1900.5 560 Z" fill="#f2ec84"/><rect x="1907" y="95" width="93" height="34.69999999999999" fill="#d4d4d4"/><text transform="translate(1925.5,116) scale(0.78,1)" x="0.8 16.7 27.0 40.0 53.1" y="0" font-family="'Liberation Sans', sans-serif" font-size="20.5" font-weight="bold" fill="#000" >9,855</text><rect x="1907" y="541.3" width="93" height="34.10000000000002" fill="#d4d4d4"/><text transform="translate(1925.5,562.3) scale(0.78,1)" x="0.8 16.7 27.0 40.0 53.1" y="0" font-family="'Liberation Sans', sans-serif" font-size="20.5" font-weight="bold" fill="#000" >4,345</text><rect x="1907" y="763.3" width="93" height="32.10000000000002" fill="#d4d4d4"/><text transform="translate(1925.5,784.3) scale(0.78,1)" x="0.8 16.7 27.0 40.0 53.1" y="0" font-family="'Liberation Sans', sans-serif" font-size="20.5" font-weight="bold" fill="#000" >5,510</text><text transform="translate(12.5,99) scale(0.7,1)" x="58.8 69.5 83.3 99.9 110.7 124.4 209.6 220.4 237.1 247.8 261.5 275.3 360.5 371.3 387.9 398.7 412.4 426.1 511.3 522.1 538.8 549.5 563.3 577.0 662.2 673.0 689.6 700.4 714.1 727.8" y="0" font-family="'Liberation Sans', sans-serif" font-size="21" fill="#e0e0e0" >:03:28:9,851:9,853:9,851:9,853</text><text transform="translate(12.5,100.2) scale(0.95,1)" x="0.6 20.8 111.8 132.0 222.9 243.1 334.1 354.3 445.2 465.4" y="0" font-family="'Liberation Mono', monospace" font-size="19" fill="#e0e0e0" >時刻始値高値安値終値</text><text transform="translate(12.5,426.5) scale(0.7,1)" x="58.8 69.5 83.3 99.9 110.7 124.4 209.6 220.4 237.1 247.8 261.5 275.3 360.5 371.3 387.9 398.7 412.4 426.1 511.3 522.1 538.8 549.5 563.3 577.0 662.2 673.0 689.6 700.4 714.1 727.8" y="0" font-family="'Liberation Sans', sans-serif" font-size="21" fill="#e0e0e0" >:03:28:4,362:4,362:4,361:4,361</text><text transform="translate(12.5,427.7) scale(0.95,1)" x="0.6 20.8 111.8 132.0 222.9 243.1 334.1 354.3 445.2 465.4" y="0" font-family="'Liberation Mono', monospace" font-size="19" fill="#e0e0e0" >時刻始値高値安値終値</text><text transform="translate(12.5,783.5) scale(0.7,1)" x="3.9 55.8 69.5 86.2 97.0 110.7 138.1 154.8 165.5 179.3 193.0 234.1 250.8 261.5 275.3 291.9 333.1 412.4 426.1 442.8 453.5 467.3 494.7 511.3 522.1 535.8 549.5 590.7 607.3 618.1 631.8 648.5 799.3 810.1 823.8 840.5 851.3 865.0 892.4 909.1 919.8 933.5 947.3" y="0" font-family="'Liberation Sans', sans-serif" font-size="21" fill="#e0e0e0" >[24/129,8531.00][24/124,3611.00]:03:285,492</text><path d="M160.6 771.0 L171.6 782.0 M171.6 771.0 L160.6 782.0" stroke="#e0e0e0" stroke-width="1.6"/><rect x="225.3" y="775.5" width="16" height="1.8" fill="#e0e0e0"/><path d="M410.2 771.0 L421.2 782.0 M421.2 771.0 L410.2 782.0" stroke="#e0e0e0" stroke-width="1.6"/><text transform="translate(12.5,784.7) scale(0.95,1)" x="10.7 253.2 273.4 495.8 516.0 546.3 566.5" y="0" font-family="'Liberation Mono', monospace" font-size="19" fill="#e0e0e0" >金白金終値時刻</text><text transform="translate(1369,366) scale(0.7,1)" x="1.0 14.7" y="0" font-family="'Liberation Sans', sans-serif" font-size="21" fill="#e0e0e0" >24</text><text transform="translate(1369,722) scale(0.7,1)" x="1.0 14.7" y="0" font-family="'Liberation Sans', sans-serif" font-size="21" fill="#e0e0e0" >24</text><text transform="translate(1369,1044) scale(0.7,1)" x="1.0 14.7" y="0" font-family="'Liberation Sans', sans-serif" font-size="21" fill="#e0e0e0" >24</text></svg></body></html>
